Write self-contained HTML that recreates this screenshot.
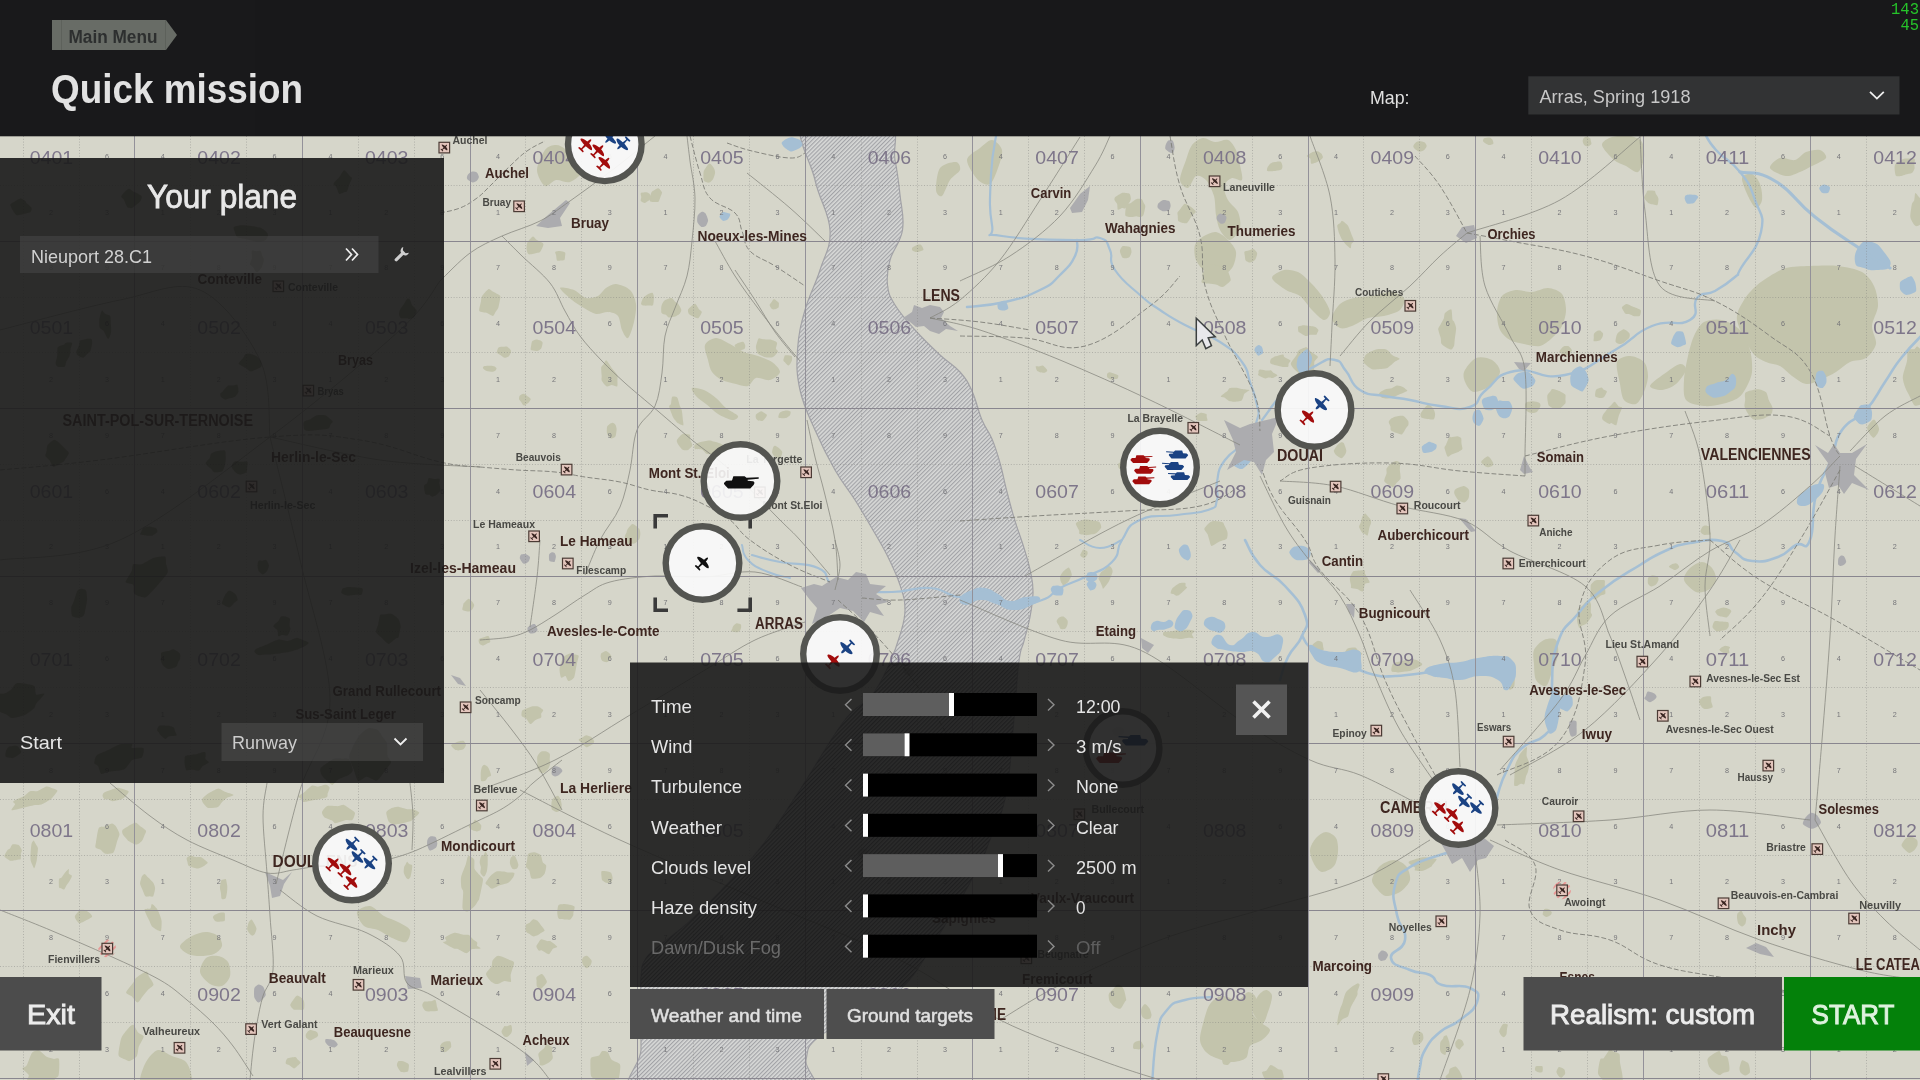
<!DOCTYPE html>
<html lang="en"><head><meta charset="utf-8"><title>Quick mission</title>
<style>html,body{margin:0;padding:0;background:#19191b;overflow:hidden}body{width:1920px;height:1080px}svg{will-change:transform;opacity:0.9999}svg text{white-space:pre}</style></head>
<body>
<svg width="1920" height="1080" viewBox="0 0 1920 1080" font-family='"Liberation Sans", sans-serif' style="display:block">
<defs>
<pattern id="hat" width="2.9" height="12" patternUnits="userSpaceOnUse" patternTransform="rotate(45)"><rect width="2.9" height="12" fill="#d8d9d8"/><rect width="1.15" height="12" fill="#a3a4a8"/></pattern>
<pattern id="hatd" width="5" height="5" patternUnits="userSpaceOnUse" patternTransform="rotate(-45)"><rect y="0" width="5" height="2.1" fill="#e88"/></pattern>
<pattern id="hat2" width="2.9" height="12" patternUnits="userSpaceOnUse" patternTransform="rotate(45)"><rect width="1.1" height="12" fill="#000"/></pattern>
<clipPath id="lp"><rect x="0" y="158" width="444" height="625"/></clipPath>
<clipPath id="wp"><rect x="630" y="662.5" width="678" height="324.5"/></clipPath>
<clipPath id="mapclip"><rect x="0" y="136" width="1920" height="944"/></clipPath>
</defs>
<rect width="1920" height="1080" fill="#d7d7cb"/>
<g clip-path="url(#mapclip)">
<defs><g id="fr">
<path d="M349.0,185.6C348.4,187.1 347.7,190.6 347.1,191.3C346.5,192.1 344.9,191.9 343.9,192.2C343.0,192.5 340.1,194.5 339.2,193.9C338.3,193.3 336.9,188.0 336.2,186.8C335.5,185.6 333.1,184.7 333.5,183.7C333.8,182.6 338.1,178.7 339.0,177.6C339.9,176.6 340.3,175.5 341.0,174.6C341.6,173.7 343.4,170.1 344.4,170.3C345.5,170.5 349.1,175.3 350.0,176.2C350.9,177.2 352.1,177.2 352.0,178.3C351.8,179.4 349.5,184.0 349.0,185.6Z"/>
<path d="M141.6,196.2C142.2,197.1 141.1,199.6 140.7,200.4C140.3,201.2 139.2,202.4 138.2,203.3C137.2,204.2 133.1,207.5 131.9,208.1C130.7,208.6 128.5,208.0 127.8,207.6C127.1,207.3 126.5,205.8 126.0,204.8C125.5,203.8 124.0,200.1 123.5,199.1C122.9,198.0 120.7,197.1 121.3,195.9C121.8,194.7 126.8,189.4 128.2,188.9C129.6,188.3 132.3,191.0 133.2,191.5C134.0,191.9 134.5,192.0 135.5,192.6C136.5,193.1 141.0,195.3 141.6,196.2Z"/>
<path d="M268.0,235.6C267.9,236.4 267.0,238.9 266.0,239.7C264.9,240.4 261.2,242.2 258.8,242.1C256.4,242.0 248.1,239.5 245.6,239.0C243.0,238.4 238.5,238.1 237.2,237.2C235.9,236.3 234.9,232.4 234.5,231.2C234.1,230.0 233.0,227.8 233.8,227.1C234.5,226.4 238.9,225.4 241.0,225.3C243.0,225.2 248.9,225.7 251.2,226.0C253.5,226.3 258.9,227.0 260.7,227.8C262.6,228.5 266.0,231.5 266.9,232.4C267.7,233.3 268.1,234.8 268.0,235.6Z"/>
<path d="M263.8,259.7C263.8,261.0 262.6,265.3 262.0,266.7C261.3,268.1 259.1,270.8 258.4,271.4C257.7,272.0 256.6,272.4 256.0,271.9C255.4,271.4 253.8,268.1 253.1,267.2C252.4,266.3 250.0,265.4 249.9,264.3C249.7,263.3 251.6,260.0 251.9,258.4C252.1,256.8 251.4,251.6 251.9,250.8C252.4,249.9 255.1,251.2 256.1,251.3C257.1,251.3 259.9,250.4 260.6,250.9C261.3,251.4 261.7,254.5 262.1,255.6C262.5,256.6 263.8,258.4 263.8,259.7Z"/>
<path d="M90.3,351.1C89.7,352.3 87.8,353.5 87.0,354.2C86.1,355.0 84.2,357.6 83.1,357.8C82.1,357.9 79.0,356.5 78.2,355.8C77.4,355.2 76.2,353.2 76.3,351.9C76.4,350.7 78.7,346.3 79.2,345.0C79.6,343.7 79.4,341.3 80.0,340.7C80.6,340.0 83.4,339.7 84.3,339.5C85.3,339.3 87.3,338.7 88.1,338.7C89.0,338.7 91.2,338.6 91.7,339.2C92.1,339.9 92.2,342.9 92.0,344.3C91.9,345.7 90.9,349.9 90.3,351.1Z"/>
<path d="M110.9,324.3C111.0,326.1 111.3,330.0 111.2,331.5C111.0,333.1 109.9,336.8 109.5,337.6C109.0,338.4 108.2,339.1 107.5,338.3C106.8,337.5 104.6,332.3 103.7,331.0C102.8,329.8 100.3,328.6 99.7,327.4C99.2,326.1 99.1,321.8 99.2,320.2C99.3,318.6 100.2,314.8 100.6,313.7C100.9,312.6 101.8,310.4 102.3,310.4C102.8,310.4 104.2,313.1 105.1,313.8C106.0,314.4 109.5,314.8 110.1,316.0C110.8,317.3 110.8,322.5 110.9,324.3Z"/>
<path d="M69.7,355.4C69.2,356.8 66.8,360.4 66.3,361.7C65.7,363.0 65.6,366.1 64.6,366.7C63.6,367.3 59.0,367.1 57.9,366.7C56.9,366.4 55.7,365.1 55.6,363.8C55.5,362.5 57.0,357.6 57.2,355.6C57.5,353.7 57.0,348.5 57.8,347.2C58.6,345.9 63.3,345.0 64.2,344.5C65.1,344.0 64.7,343.1 65.6,342.9C66.6,342.7 71.4,342.3 72.0,343.0C72.6,343.7 70.8,347.8 70.5,349.2C70.3,350.7 70.2,353.9 69.7,355.4Z"/>
<path d="M261.3,366.7C260.8,367.6 257.9,368.6 256.7,369.2C255.5,369.7 252.0,371.6 250.7,371.5C249.4,371.4 246.8,368.7 245.7,368.0C244.5,367.3 241.9,366.0 241.1,365.5C240.2,364.9 238.4,364.3 238.7,363.4C239.0,362.5 242.6,358.7 243.4,357.6C244.2,356.5 244.8,354.4 245.7,354.0C246.6,353.6 249.4,353.7 250.8,354.0C252.1,354.3 256.1,355.8 257.3,356.7C258.5,357.6 260.5,360.4 261.0,361.6C261.4,362.7 261.8,365.8 261.3,366.7Z"/>
<path d="M237.4,385.0C238.0,385.8 238.7,390.5 238.5,391.8C238.2,393.1 236.3,395.6 235.4,396.4C234.5,397.1 231.9,397.8 230.7,398.1C229.6,398.5 226.6,399.5 225.4,399.4C224.3,399.3 221.8,397.9 221.2,397.2C220.5,396.6 220.1,394.5 220.3,393.8C220.4,393.1 222.1,392.1 222.7,391.4C223.3,390.7 225.0,388.5 225.7,387.8C226.3,387.2 227.4,385.9 228.3,385.6C229.2,385.3 232.3,385.5 233.4,385.4C234.4,385.4 236.8,384.3 237.4,385.0Z"/>
<path d="M332.7,421.5C333.0,422.4 331.0,423.4 330.6,424.2C330.1,425.1 329.9,428.0 328.5,428.6C327.1,429.3 320.8,429.7 318.5,430.0C316.1,430.2 309.9,431.0 308.2,430.9C306.6,430.8 304.7,430.3 304.2,429.3C303.6,428.2 303.2,423.2 303.8,422.1C304.5,420.9 308.2,420.4 309.7,419.6C311.2,418.8 315.1,415.8 316.8,415.2C318.4,414.7 322.8,414.9 324.1,415.1C325.3,415.2 326.3,415.8 327.3,416.5C328.3,417.3 332.3,420.6 332.7,421.5Z"/>
<path d="M225.7,459.7C225.6,461.0 225.3,464.2 224.8,465.5C224.4,466.9 223.4,470.7 222.1,471.5C220.9,472.2 215.4,472.4 214.2,472.2C212.9,471.9 212.4,470.3 211.4,469.3C210.4,468.3 205.8,464.9 205.6,463.6C205.4,462.3 208.9,459.4 209.6,458.3C210.2,457.2 210.4,454.6 211.0,453.8C211.7,453.1 213.2,452.1 214.8,451.7C216.4,451.3 223.4,450.1 224.7,450.4C225.9,450.8 225.4,453.3 225.6,454.4C225.7,455.5 225.8,458.4 225.7,459.7Z"/>
<path d="M65.9,449.5C66.9,450.6 69.1,452.0 68.8,453.4C68.6,454.8 64.6,460.3 63.7,461.4C62.9,462.5 62.9,462.0 61.7,462.7C60.5,463.3 55.0,467.0 53.5,466.7C52.1,466.4 50.4,461.4 49.5,460.2C48.5,458.9 45.8,457.0 45.4,455.9C45.1,454.9 46.2,452.6 46.5,451.4C46.7,450.1 46.6,446.6 47.5,445.2C48.4,443.9 52.7,439.9 54.3,439.7C55.8,439.6 59.4,443.1 60.7,444.2C62.1,445.4 65.0,448.4 65.9,449.5Z"/>
<path d="M247.1,468.0C247.0,469.3 247.3,471.6 246.5,472.3C245.6,473.1 241.1,474.6 239.8,474.5C238.4,474.5 236.0,472.9 235.0,471.9C234.1,471.0 231.5,467.5 231.4,466.3C231.4,465.1 233.6,462.0 234.7,461.4C235.8,460.9 239.3,461.7 240.8,461.7C242.3,461.8 246.6,461.0 247.4,461.8C248.1,462.5 247.2,466.8 247.1,468.0Z"/>
<path d="M440.3,490.5C440.0,491.8 437.5,494.1 436.5,494.8C435.6,495.6 433.1,496.8 432.3,496.8C431.4,496.8 430.2,495.2 429.4,494.8C428.6,494.5 426.0,494.9 425.3,493.9C424.7,492.8 423.8,487.0 424.0,485.7C424.2,484.5 426.5,484.2 427.1,483.3C427.6,482.4 428.0,478.6 428.8,478.1C429.6,477.6 432.5,478.9 433.7,479.0C435.0,479.1 438.9,478.3 439.5,478.8C440.2,479.3 439.3,481.9 439.4,483.3C439.5,484.6 440.7,489.1 440.3,490.5Z"/>
<path d="M157.3,532.1C156.9,532.9 153.8,535.0 152.7,535.4C151.5,535.8 148.6,535.8 147.2,535.7C145.8,535.7 141.1,535.0 140.4,534.6C139.7,534.2 140.6,533.0 141.0,532.2C141.3,531.5 142.5,528.5 143.5,527.9C144.5,527.2 147.9,526.4 149.4,526.5C150.9,526.5 155.1,527.7 156.1,528.3C157.0,529.0 157.7,531.3 157.3,532.1Z"/>
<path d="M158.5,584.3C156.0,587.1 148.8,595.1 146.9,596.6C145.0,598.1 143.4,597.4 142.0,597.1C140.5,596.8 135.3,595.3 134.2,593.8C133.2,592.4 134.2,586.1 133.2,584.8C132.2,583.4 125.9,583.7 125.7,582.1C125.5,580.5 130.8,573.0 131.7,570.9C132.6,568.8 132.1,565.0 133.2,564.2C134.4,563.4 139.2,564.9 141.4,564.3C143.6,563.6 150.4,559.3 152.1,558.5C153.8,557.7 154.5,557.4 156.0,557.2C157.5,557.0 164.0,555.9 165.2,556.7C166.4,557.5 165.8,562.2 166.1,564.0C166.4,565.9 168.6,570.2 167.7,572.5C166.8,574.9 160.9,581.5 158.5,584.3Z"/>
<path d="M86.1,605.8C85.7,607.7 84.8,613.9 83.9,615.3C83.1,616.7 80.0,617.6 79.2,617.9C78.3,618.1 77.2,617.7 76.4,617.5C75.6,617.2 72.8,617.0 72.2,615.9C71.5,614.8 71.0,609.5 71.2,607.7C71.4,606.0 73.2,603.1 73.9,601.1C74.7,599.1 76.5,592.1 77.5,590.6C78.4,589.2 80.8,588.7 81.8,588.7C82.8,588.7 85.4,589.4 86.0,590.6C86.6,591.8 87.1,597.3 87.1,599.1C87.1,600.9 86.5,604.0 86.1,605.8Z"/>
<path d="M269.0,565.4C269.0,566.7 267.5,570.3 266.8,571.3C266.1,572.4 263.6,574.5 262.7,574.4C261.8,574.4 259.3,572.0 258.7,571.0C258.1,570.0 257.6,567.0 257.5,565.8C257.5,564.6 257.9,561.5 258.4,560.9C258.9,560.3 261.1,560.8 262.1,560.7C263.0,560.6 265.4,559.4 266.2,559.9C267.0,560.5 268.9,564.1 269.0,565.4Z"/>
<path d="M237.6,600.0C237.5,601.0 235.5,601.7 234.6,602.6C233.6,603.5 231.0,607.3 229.5,607.4C228.1,607.6 222.8,604.7 222.0,603.8C221.2,602.9 222.7,600.6 223.0,599.7C223.3,598.7 224.0,596.7 224.7,595.7C225.4,594.6 228.0,590.7 229.3,590.6C230.6,590.4 234.8,593.5 235.7,594.6C236.7,595.7 237.8,599.1 237.6,600.0Z"/>
<path d="M290.5,629.1C290.2,630.2 288.7,634.5 287.7,635.2C286.7,635.8 283.3,634.8 282.2,634.9C281.1,635.0 278.8,636.7 278.3,636.2C277.8,635.6 278.1,631.6 277.5,630.4C276.9,629.3 273.2,627.3 273.3,626.1C273.4,625.0 277.5,622.0 278.4,620.9C279.3,619.7 280.2,616.9 281.1,616.4C282.0,615.9 285.1,616.4 286.2,616.7C287.2,616.9 289.5,617.8 289.9,618.8C290.3,619.8 289.5,624.3 289.5,625.5C289.6,626.7 290.7,627.9 290.5,629.1Z"/>
<path d="M398.6,636.9C398.1,638.3 397.3,637.4 396.1,638.3C394.9,639.1 390.3,644.0 388.5,643.9C386.8,643.8 382.7,638.7 381.2,637.3C379.8,635.9 376.4,633.4 376.0,631.9C375.7,630.4 377.7,626.4 378.2,624.5C378.6,622.5 379.4,616.5 380.0,615.3C380.5,614.1 381.6,614.7 382.9,614.5C384.2,614.4 389.3,613.3 391.1,613.8C392.9,614.3 397.3,617.6 398.4,619.1C399.5,620.6 400.5,624.4 400.6,626.5C400.6,628.6 399.1,635.5 398.6,636.9Z"/>
<path d="M362.8,590.9C362.6,591.6 362.1,594.3 361.3,594.7C360.5,595.2 357.4,594.7 355.9,594.8C354.5,594.9 349.8,595.6 348.7,595.6C347.5,595.7 346.7,595.5 345.8,595.2C345.0,594.9 341.8,593.5 341.4,592.9C340.9,592.3 341.7,590.8 341.9,590.3C342.0,589.8 342.0,588.9 342.7,588.5C343.4,588.1 346.3,587.1 347.9,587.0C349.5,586.9 354.5,587.3 356.2,587.4C357.9,587.6 361.6,587.9 362.3,588.3C363.1,588.7 362.9,590.1 362.8,590.9Z"/>
<path d="M308.6,642.8C309.0,643.7 305.0,646.1 303.9,646.8C302.7,647.5 300.6,648.3 298.9,648.9C297.1,649.5 291.6,651.4 288.8,651.9C286.0,652.5 277.2,653.6 274.6,653.9C272.0,654.2 268.5,654.4 266.6,654.6C264.7,654.7 259.8,655.4 258.4,655.1C257.0,654.9 254.9,652.8 254.6,652.1C254.3,651.3 254.6,649.8 256.1,648.9C257.6,647.9 264.8,645.3 267.4,644.2C270.1,643.1 276.3,639.8 278.7,639.5C281.0,639.1 285.5,641.1 287.7,640.9C289.8,640.7 295.4,637.9 296.9,637.7C298.4,637.5 299.2,638.5 300.6,639.1C301.9,639.6 308.2,641.9 308.6,642.8Z"/>
<path d="M44.5,693.8C44.5,694.9 37.6,701.8 36.4,703.5C35.1,705.2 35.4,706.8 34.1,708.2C32.7,709.5 27.2,713.8 24.6,715.0C22.1,716.1 14.2,718.1 12.1,718.1C10.0,718.1 8.6,715.8 6.8,714.8C4.9,713.9 -2.4,710.8 -3.8,710.0C-5.1,709.1 -4.8,709.8 -5.0,707.9C-5.2,706.1 -6.2,695.9 -5.1,694.2C-4.1,692.6 2.0,694.2 3.9,693.7C5.8,693.2 9.5,691.0 11.0,689.8C12.6,688.5 14.5,683.6 17.2,683.1C19.8,682.6 31.7,684.5 33.9,685.8C36.1,687.2 34.9,693.5 36.1,694.4C37.3,695.4 44.4,692.8 44.5,693.8Z"/>
<path d="M175.2,731.8C175.5,732.7 177.2,734.8 176.4,735.4C175.6,735.9 169.9,735.9 168.6,736.4C167.4,736.8 166.4,739.1 165.4,739.0C164.4,738.9 161.2,735.9 160.4,735.1C159.7,734.4 159.3,733.2 158.9,732.5C158.5,731.9 157.0,730.7 157.0,729.9C157.0,729.2 158.0,726.4 159.0,725.9C159.9,725.4 164.0,725.7 165.3,725.7C166.5,725.7 168.6,725.7 169.6,725.9C170.5,726.1 173.1,726.7 173.7,727.4C174.4,728.1 174.9,730.8 175.2,731.8Z"/>
<path d="M143.4,748.3C144.6,749.4 143.2,756.1 141.9,757.5C140.6,758.9 134.3,758.8 132.3,760.1C130.3,761.4 126.9,767.7 124.8,768.9C122.7,770.2 116.5,770.7 114.5,771.0C112.4,771.4 108.6,771.6 107.1,771.9C105.5,772.3 102.1,774.6 101.1,773.9C100.0,773.3 98.8,767.3 98.0,766.1C97.2,764.8 94.5,764.5 94.3,763.3C94.2,762.1 94.9,757.0 96.6,755.4C98.3,753.9 106.0,751.1 108.7,749.8C111.3,748.5 116.5,745.1 119.2,744.4C121.9,743.8 130.5,743.6 131.9,744.0C133.4,744.5 130.4,747.4 131.8,747.9C133.1,748.4 142.2,747.2 143.4,748.3Z"/>
<path d="M205.5,758.9C206.0,760.0 209.2,761.3 208.9,762.2C208.5,763.1 203.5,765.5 202.4,766.5C201.2,767.5 200.3,770.3 199.0,770.6C197.7,771.0 192.8,769.6 191.3,769.6C189.8,769.6 187.2,771.0 186.5,770.3C185.7,769.7 184.8,765.6 184.6,764.0C184.5,762.3 184.4,757.3 185.1,756.2C185.8,755.1 189.3,755.1 190.6,754.9C191.9,754.6 194.5,754.5 196.2,754.2C197.9,753.9 204.1,751.6 205.2,752.2C206.3,752.7 205.1,757.7 205.5,758.9Z"/>
<path d="M349.0,759.3C350.2,760.7 352.8,768.4 352.8,770.2C352.7,772.0 350.3,773.9 348.7,774.9C347.1,775.9 340.7,778.0 338.8,779.1C336.9,780.3 333.8,784.9 332.2,784.9C330.6,784.9 326.4,780.4 325.1,779.1C323.8,777.9 321.8,775.4 321.2,774.2C320.7,772.9 319.7,769.8 320.5,768.4C321.2,767.1 326.2,763.6 327.9,762.5C329.5,761.3 332.8,759.1 334.6,758.6C336.4,758.2 341.3,758.6 343.0,758.7C344.7,758.7 347.9,758.0 349.0,759.3Z"/>
<path d="M391.1,762.2C391.0,763.7 387.8,767.1 386.1,769.2C384.5,771.3 379.4,779.5 377.1,780.4C374.8,781.3 368.7,776.6 366.5,776.7C364.3,776.8 359.7,781.7 358.2,780.9C356.7,780.1 354.7,772.3 353.6,769.5C352.6,766.7 349.2,759.6 349.1,756.9C349.0,754.3 351.6,749.5 352.8,747.0C354.0,744.5 357.5,737.8 359.3,735.6C361.1,733.4 366.1,728.9 368.2,728.2C370.3,727.6 375.9,729.0 377.6,730.0C379.3,731.0 381.6,735.4 382.7,737.0C383.8,738.5 386.4,741.1 386.9,743.3C387.5,745.6 387.2,753.9 387.6,756.1C388.1,758.3 391.3,760.7 391.1,762.2Z"/>
<path d="M21.2,752.0C21.2,753.1 19.1,754.4 18.1,755.1C17.2,755.8 14.4,757.9 13.0,758.1C11.6,758.3 6.7,757.6 5.9,756.8C5.0,756.0 5.6,752.4 5.9,751.2C6.2,750.1 7.6,747.7 8.5,747.1C9.4,746.4 12.6,745.9 13.7,745.8C14.8,745.7 17.1,745.6 17.9,746.4C18.8,747.1 21.2,751.0 21.2,752.0Z"/>
<path d="M31.5,207.9C32.0,208.9 31.4,211.2 30.5,211.9C29.7,212.6 25.6,213.5 24.1,213.8C22.5,214.2 18.6,215.3 17.5,215.3C16.5,215.3 15.8,214.7 15.2,213.9C14.5,213.1 12.3,209.5 11.7,208.4C11.2,207.3 10.1,205.3 10.3,204.6C10.5,203.9 12.2,202.9 13.4,202.2C14.6,201.5 19.0,198.5 20.4,198.4C21.9,198.3 25.1,200.8 25.8,201.4C26.5,201.9 25.8,202.3 26.5,203.1C27.1,203.9 31.0,206.8 31.5,207.9Z"/>
<path d="M416.6,310.7C416.9,312.1 414.9,316.0 414.1,316.9C413.2,317.9 410.2,318.8 409.4,318.9C408.6,319.1 408.1,318.3 407.1,318.2C406.1,318.1 401.9,318.6 401.0,318.2C400.0,317.7 399.1,315.2 399.0,314.2C398.9,313.1 399.8,310.3 400.3,309.1C400.9,308.0 403.0,305.3 403.8,304.2C404.5,303.0 406.3,299.5 407.0,298.9C407.8,298.3 409.3,298.7 409.9,299.4C410.5,300.1 411.2,303.7 412.0,305.0C412.8,306.3 416.4,309.3 416.6,310.7Z"/>
<path d="M179.9,659.5C179.7,660.5 178.6,661.1 178.2,661.9C177.7,662.8 177.4,666.0 176.2,666.8C175.0,667.7 169.8,669.2 168.2,669.0C166.7,668.8 163.9,666.4 163.0,665.4C162.2,664.4 161.1,661.6 160.8,660.6C160.6,659.6 161.0,657.9 161.1,657.0C161.2,656.0 160.6,653.2 161.5,652.5C162.5,651.8 168.0,651.1 169.4,650.7C170.8,650.4 172.3,649.0 173.5,649.3C174.7,649.6 179.2,652.5 180.0,653.7C180.7,654.9 180.1,658.5 179.9,659.5Z"/>
<path d="M537.0,170.0C537.0,164.6 542.1,153.8 545.0,150.0C547.9,146.2 552.9,145.0 556.0,145.0C559.1,145.0 563.6,147.0 566.0,150.0C568.4,153.0 569.6,161.7 572.0,165.0C574.4,168.3 582.3,169.4 582.0,172.0C581.7,174.6 573.9,180.8 570.0,182.0C566.1,183.2 559.8,179.4 556.0,180.0C552.2,180.6 547.9,187.5 545.0,186.0C542.1,184.5 537.0,175.4 537.0,170.0Z"/>
<path d="M660.7,196.3C660.3,197.4 659.3,201.0 658.5,201.7C657.7,202.3 654.6,202.1 653.6,202.0C652.6,201.9 650.0,201.8 649.8,200.7C649.5,199.7 650.9,193.8 651.3,192.7C651.7,191.5 652.5,191.3 653.3,190.8C654.1,190.3 657.3,188.1 658.3,188.2C659.3,188.4 661.7,191.3 662.0,192.3C662.3,193.2 661.1,195.2 660.7,196.3Z"/>
<path d="M540.4,251.4C539.7,252.5 538.5,252.5 537.2,252.8C535.8,253.2 530.0,254.8 528.8,254.3C527.5,253.8 526.7,250.1 526.5,248.7C526.4,247.3 526.7,243.8 527.4,242.4C528.2,241.0 531.9,236.7 533.0,236.4C534.1,236.2 535.5,239.2 536.8,240.0C538.0,240.9 542.9,242.5 543.4,243.9C543.8,245.2 541.2,250.4 540.4,251.4Z"/>
<path d="M715.1,172.8C715.0,174.1 713.7,178.1 713.0,179.3C712.3,180.4 710.2,182.5 709.1,182.6C708.1,182.8 704.5,182.1 703.9,180.8C703.2,179.6 703.4,173.5 703.6,172.1C703.7,170.6 704.8,169.3 705.5,168.3C706.2,167.3 708.5,163.6 709.5,163.6C710.5,163.5 713.1,166.9 713.8,168.0C714.4,169.0 715.2,171.4 715.1,172.8Z"/>
<path d="M565.0,256.5C565.0,257.3 564.9,259.4 564.4,259.9C563.9,260.4 561.7,260.5 560.8,260.5C560.0,260.6 557.5,261.2 557.0,260.5C556.4,259.9 556.3,256.1 556.1,255.1C555.8,254.0 554.8,252.4 555.2,251.9C555.7,251.4 558.6,251.0 559.8,251.0C560.9,251.1 564.5,251.9 565.1,252.5C565.7,253.2 565.1,255.6 565.0,256.5Z"/>
<path d="M940.0,168.0C943.0,163.8 953.0,161.7 956.0,162.0C959.0,162.3 960.9,167.3 960.0,170.0C959.1,172.7 952.7,176.1 950.0,180.0C947.3,183.9 944.1,194.5 942.0,196.0C939.9,197.5 936.3,194.2 936.0,190.0C935.7,185.8 937.0,172.2 940.0,168.0Z"/>
<path d="M922.4,246.8C922.8,247.5 923.9,249.5 923.4,250.1C922.9,250.7 919.4,251.8 918.4,252.0C917.5,252.2 916.0,252.1 915.3,251.9C914.6,251.7 912.6,250.8 912.2,250.3C911.9,249.8 911.8,248.2 912.4,247.6C912.9,246.9 916.0,245.2 916.9,244.9C917.9,244.5 919.8,244.4 920.4,244.6C921.1,244.8 922.1,246.2 922.4,246.8Z"/>
<path d="M651.4,197.4C651.5,198.1 650.2,199.5 649.4,200.1C648.6,200.8 645.8,202.8 644.8,202.9C643.8,202.9 641.2,201.6 640.8,200.9C640.4,200.3 641.3,198.1 641.3,197.1C641.3,196.2 640.2,193.6 640.9,193.0C641.5,192.5 645.5,192.3 646.5,192.3C647.5,192.4 648.7,193.1 649.2,193.6C649.8,194.2 651.4,196.6 651.4,197.4Z"/>
<path d="M967.0,160.0C967.3,155.2 976.2,151.0 980.0,148.0C983.8,145.0 988.7,139.7 992.0,140.0C995.3,140.3 1001.1,145.8 1002.0,150.0C1002.9,154.2 999.8,162.9 998.0,168.0C996.2,173.1 993.0,182.2 990.0,184.0C987.0,185.8 981.5,183.6 978.0,180.0C974.5,176.4 966.7,164.8 967.0,160.0Z"/>
<path d="M1180.0,180.0C1179.7,175.8 1184.2,165.2 1186.0,160.0C1187.8,154.8 1189.5,148.3 1192.0,145.0C1194.5,141.7 1199.5,138.4 1203.0,138.0C1206.5,137.6 1211.2,141.7 1215.0,142.0C1218.8,142.3 1224.8,138.8 1228.0,140.0C1231.2,141.2 1234.2,146.2 1236.0,150.0C1237.8,153.8 1239.1,160.5 1240.0,165.0C1240.9,169.5 1243.2,178.1 1242.0,180.0C1240.8,181.9 1234.7,177.1 1232.0,178.0C1229.3,178.9 1224.6,182.7 1224.0,186.0C1223.4,189.3 1225.9,196.1 1228.0,200.0C1230.1,203.9 1236.2,207.8 1238.0,212.0C1239.8,216.2 1241.2,223.8 1240.0,228.0C1238.8,232.2 1233.0,239.7 1230.0,240.0C1227.0,240.3 1222.1,233.8 1220.0,230.0C1217.9,226.2 1216.9,220.1 1216.0,215.0C1215.1,209.9 1215.5,201.2 1214.0,196.0C1212.5,190.8 1208.7,183.0 1206.0,180.0C1203.3,177.0 1198.7,174.8 1196.0,176.0C1193.3,177.2 1190.4,187.4 1188.0,188.0C1185.6,188.6 1180.3,184.2 1180.0,180.0Z"/>
<path d="M1195.0,245.0C1196.2,241.4 1200.8,237.9 1204.0,236.0C1207.2,234.1 1212.4,231.4 1216.0,232.0C1219.6,232.6 1225.0,237.0 1228.0,240.0C1231.0,243.0 1235.4,247.8 1236.0,252.0C1236.6,256.2 1234.4,264.4 1232.0,268.0C1229.6,271.6 1223.9,275.4 1220.0,276.0C1216.1,276.6 1209.6,274.4 1206.0,272.0C1202.4,269.6 1197.7,264.1 1196.0,260.0C1194.3,255.9 1193.8,248.6 1195.0,245.0Z"/>
<path d="M1192.4,208.0C1193.1,208.6 1195.9,210.7 1195.8,211.7C1195.7,212.6 1192.8,214.8 1191.8,216.1C1190.7,217.4 1188.2,222.2 1187.0,223.0C1185.9,223.8 1183.1,223.0 1182.1,222.8C1181.0,222.6 1178.9,222.0 1178.3,221.1C1177.8,220.3 1177.8,216.2 1177.7,215.2C1177.6,214.2 1177.2,213.3 1177.5,212.5C1177.9,211.8 1179.7,209.9 1180.5,208.8C1181.4,207.8 1183.6,204.1 1184.6,203.8C1185.7,203.5 1188.7,205.6 1189.6,206.1C1190.5,206.6 1191.7,207.3 1192.4,208.0Z"/>
<path d="M1129.5,202.3C1128.8,203.5 1126.2,207.7 1125.4,208.3C1124.5,209.0 1123.1,207.8 1122.2,207.9C1121.3,208.1 1118.5,210.2 1117.9,209.7C1117.3,209.3 1117.5,205.1 1117.1,204.0C1116.7,202.9 1114.8,201.1 1114.6,200.3C1114.3,199.5 1114.4,197.9 1115.2,197.1C1116.0,196.3 1120.4,193.8 1121.3,193.3C1122.3,192.8 1122.4,192.7 1123.4,192.7C1124.4,192.8 1128.7,193.0 1129.6,193.7C1130.4,194.4 1130.9,197.7 1130.9,198.7C1130.9,199.7 1130.1,201.2 1129.5,202.3Z"/>
<path d="M1143.5,215.1C1142.9,216.3 1141.5,217.0 1140.6,217.1C1139.7,217.3 1137.2,216.2 1136.1,216.2C1135.0,216.2 1132.5,217.2 1131.3,217.1C1130.0,217.0 1125.9,216.9 1125.4,215.5C1124.8,214.1 1125.9,206.4 1126.4,205.0C1127.0,203.6 1129.2,204.0 1130.4,203.3C1131.5,202.6 1134.9,199.6 1136.2,199.2C1137.6,198.7 1141.0,198.8 1141.9,199.2C1142.7,199.7 1143.2,201.9 1143.6,202.7C1144.0,203.6 1145.3,204.9 1145.3,206.3C1145.2,207.8 1144.0,213.8 1143.5,215.1Z"/>
<path d="M1282.4,165.7C1282.5,166.6 1282.3,168.9 1281.4,169.5C1280.4,170.1 1276.1,170.8 1274.4,171.0C1272.8,171.2 1268.1,171.4 1267.3,171.0C1266.5,170.7 1267.1,168.7 1267.3,167.9C1267.6,167.2 1268.9,165.3 1269.5,164.6C1270.1,164.0 1271.1,162.8 1272.4,162.4C1273.7,162.1 1279.3,161.2 1280.4,161.5C1281.6,161.9 1282.3,164.8 1282.4,165.7Z"/>
<path d="M1321.3,153.6C1321.9,154.4 1323.1,156.6 1322.9,157.5C1322.6,158.4 1320.6,160.4 1319.3,161.1C1317.9,161.9 1312.5,164.1 1311.4,163.8C1310.4,163.5 1310.9,159.6 1310.4,158.7C1309.8,157.8 1306.5,156.8 1306.8,156.1C1307.1,155.3 1311.5,152.7 1312.7,152.1C1314.0,151.6 1316.5,151.0 1317.5,151.2C1318.5,151.4 1320.7,152.9 1321.3,153.6Z"/>
<path d="M1351.7,234.9C1352.4,236.8 1354.1,239.9 1354.0,240.9C1354.0,241.9 1351.9,242.9 1351.5,243.7C1351.1,244.6 1351.2,248.1 1350.6,248.2C1350.1,248.4 1347.6,246.2 1346.6,245.2C1345.6,244.2 1343.2,241.4 1342.3,240.0C1341.4,238.6 1339.7,234.9 1339.1,233.2C1338.5,231.5 1337.1,226.7 1337.2,225.5C1337.4,224.4 1339.7,223.5 1340.3,223.0C1340.9,222.4 1341.5,220.6 1342.3,220.9C1343.2,221.2 1346.6,223.7 1347.7,225.3C1348.8,227.0 1351.0,233.1 1351.7,234.9Z"/>
<path d="M1426.7,145.9C1426.6,146.9 1424.8,149.5 1423.9,150.2C1423.0,150.9 1420.0,151.8 1418.9,151.6C1417.8,151.5 1415.4,149.4 1414.7,148.8C1414.1,148.1 1413.1,146.7 1413.3,145.9C1413.5,145.2 1415.5,142.5 1416.3,142.0C1417.0,141.4 1418.4,141.2 1419.4,141.2C1420.4,141.2 1423.7,141.7 1424.5,142.3C1425.4,142.9 1426.7,145.0 1426.7,145.9Z"/>
<path d="M1131.5,252.0C1131.5,253.1 1130.1,256.4 1129.5,257.1C1128.9,257.8 1127.4,258.1 1126.6,258.2C1125.8,258.2 1123.1,258.2 1122.3,257.4C1121.6,256.6 1119.9,252.3 1119.9,251.0C1119.9,249.7 1121.7,246.8 1122.4,246.3C1123.0,245.7 1124.6,246.1 1125.5,246.2C1126.4,246.3 1129.6,246.6 1130.3,247.2C1131.0,247.9 1131.6,250.8 1131.5,252.0Z"/>
<path d="M1255.3,259.4C1254.5,260.5 1251.3,262.5 1250.1,262.6C1249.0,262.7 1246.3,261.3 1245.7,260.5C1245.1,259.8 1245.0,257.3 1244.9,256.3C1244.8,255.2 1244.0,252.4 1244.5,251.8C1244.9,251.1 1247.5,250.8 1248.6,250.5C1249.6,250.1 1252.3,248.7 1253.3,249.0C1254.3,249.3 1256.9,251.9 1257.1,253.1C1257.3,254.3 1256.1,258.3 1255.3,259.4Z"/>
<path d="M1602.0,145.0C1601.7,141.6 1607.8,138.3 1612.0,137.0C1616.2,135.7 1625.5,135.2 1630.0,136.0C1634.5,136.8 1639.9,138.7 1642.0,142.0C1644.1,145.3 1644.6,153.5 1644.0,158.0C1643.4,162.5 1640.7,170.8 1638.0,172.0C1635.3,173.2 1629.6,167.8 1626.0,166.0C1622.4,164.2 1617.6,163.2 1614.0,160.0C1610.4,156.8 1602.3,148.4 1602.0,145.0Z"/>
<path d="M1770.0,168.0C1769.1,165.3 1776.2,159.2 1780.0,158.0C1783.8,156.8 1791.1,160.9 1795.0,160.0C1798.9,159.1 1802.2,153.5 1806.0,152.0C1809.8,150.5 1817.0,149.1 1820.0,150.0C1823.0,150.9 1827.2,155.6 1826.0,158.0C1824.8,160.4 1815.9,163.9 1812.0,166.0C1808.1,168.1 1803.9,170.5 1800.0,172.0C1796.1,173.5 1790.5,176.6 1786.0,176.0C1781.5,175.4 1770.9,170.7 1770.0,168.0Z"/>
<path d="M1742.0,178.0C1742.6,174.7 1749.3,173.1 1752.0,174.0C1754.7,174.9 1758.5,180.1 1760.0,184.0C1761.5,187.9 1762.6,196.4 1762.0,200.0C1761.4,203.6 1758.1,208.6 1756.0,208.0C1753.9,207.4 1750.1,200.5 1748.0,196.0C1745.9,191.5 1741.4,181.3 1742.0,178.0Z"/>
<path d="M1655.7,193.6C1656.1,194.5 1658.2,197.0 1658.4,198.4C1658.6,199.7 1658.1,204.3 1657.4,205.0C1656.7,205.7 1653.5,204.5 1652.5,204.3C1651.5,204.1 1649.5,203.7 1648.7,203.2C1647.9,202.8 1646.2,200.9 1645.7,200.2C1645.1,199.5 1643.9,198.1 1644.0,197.2C1644.1,196.4 1646.0,193.6 1646.4,192.8C1646.8,192.0 1646.9,191.0 1647.3,190.7C1647.7,190.4 1648.9,190.4 1649.7,190.4C1650.6,190.4 1654.0,190.4 1654.7,190.8C1655.4,191.2 1655.2,192.7 1655.7,193.6Z"/>
<path d="M1914.4,165.1C1914.4,166.3 1914.8,167.8 1914.5,168.7C1914.2,169.6 1913.0,172.4 1911.9,173.1C1910.9,173.8 1906.8,174.2 1905.5,174.5C1904.3,174.9 1902.4,175.9 1901.3,176.0C1900.1,176.2 1896.7,176.7 1896.0,175.8C1895.2,174.9 1894.6,169.8 1894.6,168.4C1894.5,167.0 1894.7,164.7 1895.6,163.7C1896.6,162.6 1901.2,159.8 1902.7,159.2C1904.1,158.6 1906.6,158.6 1908.0,158.6C1909.4,158.5 1913.8,158.2 1914.6,159.0C1915.3,159.8 1914.4,164.0 1914.4,165.1Z"/>
<path d="M1926.5,211.8C1926.4,213.8 1925.1,215.6 1924.4,217.1C1923.7,218.6 1921.3,223.4 1920.4,224.5C1919.4,225.6 1917.2,226.3 1916.4,226.2C1915.5,226.1 1914.0,224.5 1913.3,223.4C1912.6,222.4 1910.5,219.3 1910.3,217.1C1910.1,214.9 1911.4,206.4 1911.8,204.4C1912.3,202.5 1913.8,201.6 1914.2,200.3C1914.6,198.9 1914.8,193.2 1915.4,192.9C1916.1,192.6 1918.7,197.0 1919.8,197.8C1920.9,198.7 1924.4,198.5 1925.2,200.1C1926.0,201.7 1926.6,209.9 1926.5,211.8Z"/>
<path d="M1492.8,140.5C1493.0,141.1 1493.7,143.1 1493.3,143.7C1492.9,144.2 1490.5,145.0 1489.7,145.0C1488.9,145.1 1487.3,144.4 1486.5,143.9C1485.8,143.5 1483.3,142.0 1483.1,141.3C1482.8,140.7 1483.3,138.7 1484.1,138.3C1484.9,137.9 1488.8,137.5 1489.7,137.6C1490.6,137.7 1491.5,138.8 1491.9,139.1C1492.3,139.4 1492.6,140.0 1492.8,140.5Z"/>
<path d="M1590.8,140.8C1590.9,141.5 1591.7,143.3 1591.4,143.9C1591.0,144.6 1588.6,146.4 1587.8,146.5C1587.0,146.6 1584.8,145.7 1584.2,145.1C1583.6,144.5 1582.7,142.1 1582.7,141.3C1582.6,140.4 1583.2,138.8 1583.6,138.2C1584.1,137.6 1585.5,136.4 1586.3,136.4C1587.0,136.3 1589.5,137.6 1590.0,138.1C1590.6,138.6 1590.6,140.1 1590.8,140.8Z"/>
<path d="M498.3,307.7C497.8,309.2 496.4,310.7 495.8,311.6C495.2,312.6 494.0,315.8 493.0,316.0C491.9,316.2 488.7,313.7 487.1,313.1C485.6,312.5 480.1,312.5 479.4,311.1C478.6,309.8 480.6,303.5 480.9,301.7C481.2,300.0 481.1,297.7 482.0,296.2C482.8,294.8 487.1,289.8 488.3,289.2C489.6,288.7 491.3,290.8 492.7,291.5C494.0,292.3 498.9,294.6 499.8,295.4C500.7,296.2 500.4,297.0 500.2,298.5C500.0,299.9 498.8,306.2 498.3,307.7Z"/>
<path d="M560.0,288.0C560.3,286.5 570.1,288.5 574.0,290.0C577.9,291.5 582.4,297.1 586.0,298.0C589.6,298.9 595.0,297.5 598.0,296.0C601.0,294.5 603.3,289.8 606.0,288.0C608.7,286.2 612.4,283.7 616.0,284.0C619.6,284.3 627.0,287.0 630.0,290.0C633.0,293.0 635.4,299.2 636.0,304.0C636.6,308.8 635.2,316.9 634.0,322.0C632.8,327.1 629.8,336.8 628.0,338.0C626.2,339.2 623.5,333.3 622.0,330.0C620.5,326.7 620.1,318.7 618.0,316.0C615.9,313.3 611.3,312.3 608.0,312.0C604.7,311.7 599.6,314.6 596.0,314.0C592.4,313.4 587.6,310.1 584.0,308.0C580.4,305.9 575.6,303.0 572.0,300.0C568.4,297.0 559.7,289.5 560.0,288.0Z"/>
<path d="M653.1,305.1C652.5,306.0 650.5,305.5 649.4,305.6C648.3,305.7 644.6,305.8 643.7,305.6C642.7,305.5 641.1,304.9 641.1,304.0C641.0,303.0 642.5,298.9 643.3,297.8C644.1,296.6 647.1,294.7 648.1,294.1C649.2,293.5 651.7,292.4 652.4,292.8C653.1,293.1 653.9,295.7 653.9,297.1C654.0,298.6 653.6,304.1 653.1,305.1Z"/>
<path d="M678.3,304.0C679.0,305.0 681.2,308.7 681.3,309.9C681.4,311.1 680.0,313.4 679.3,314.1C678.6,314.9 676.5,316.1 675.3,316.5C674.1,316.9 669.9,317.6 668.8,317.4C667.7,317.2 666.8,315.4 666.0,314.8C665.1,314.3 662.2,313.9 661.6,312.9C661.1,311.9 661.1,307.6 661.4,306.2C661.7,304.7 663.1,301.7 664.3,300.8C665.5,299.8 670.2,298.0 671.5,298.1C672.7,298.1 674.1,300.7 674.9,301.4C675.7,302.1 677.5,303.0 678.3,304.0Z"/>
<path d="M699.3,309.6C700.0,310.6 702.0,311.2 701.8,312.2C701.7,313.2 699.1,317.8 698.1,318.3C697.0,318.7 693.6,316.8 692.6,316.3C691.5,315.8 689.4,314.8 688.9,314.0C688.4,313.2 687.7,310.6 688.0,309.7C688.2,308.9 690.2,307.1 691.0,306.5C691.9,305.8 694.5,303.5 695.4,303.9C696.4,304.2 698.5,308.7 699.3,309.6Z"/>
<path d="M705.0,345.0C706.2,341.7 712.2,338.1 716.0,338.0C719.8,337.9 725.8,341.9 730.0,344.0C734.2,346.1 739.8,350.2 744.0,352.0C748.2,353.8 753.8,354.5 758.0,356.0C762.2,357.5 768.7,359.6 772.0,362.0C775.3,364.4 780.3,369.3 780.0,372.0C779.7,374.7 773.6,379.1 770.0,380.0C766.4,380.9 759.3,377.1 756.0,378.0C752.7,378.9 751.0,385.1 748.0,386.0C745.0,386.9 739.9,384.9 736.0,384.0C732.1,383.1 725.6,381.8 722.0,380.0C718.4,378.2 714.1,375.0 712.0,372.0C709.9,369.0 709.0,364.1 708.0,360.0C707.0,355.9 703.8,348.3 705.0,345.0Z"/>
<path d="M775.9,348.5C776.0,349.5 778.2,350.5 777.9,351.5C777.6,352.5 774.6,356.3 773.1,356.9C771.7,357.6 766.9,357.6 765.2,357.2C763.4,356.8 759.0,354.7 758.0,353.8C757.0,353.0 756.6,350.6 756.4,349.7C756.1,348.8 755.8,347.5 756.0,346.2C756.3,344.9 757.8,339.3 758.6,338.5C759.4,337.7 761.4,339.2 762.9,339.3C764.4,339.5 769.6,339.4 771.2,339.8C772.9,340.1 776.4,341.7 777.0,342.7C777.5,343.7 775.8,347.4 775.9,348.5Z"/>
<path d="M792.0,360.1C791.9,360.9 791.1,362.5 790.7,363.1C790.3,363.8 789.0,365.7 788.4,365.6C787.8,365.6 786.1,363.4 785.5,362.9C785.0,362.3 783.5,361.5 783.4,360.6C783.3,359.8 784.4,356.1 784.8,355.5C785.3,354.9 786.4,355.2 787.2,355.3C788.0,355.4 791.2,355.6 791.8,356.2C792.3,356.7 792.2,359.3 792.0,360.1Z"/>
<path d="M692.0,388.0C693.2,387.1 700.4,388.5 704.0,390.0C707.6,391.5 712.7,395.3 716.0,398.0C719.3,400.7 722.7,405.3 726.0,408.0C729.3,410.7 737.1,414.2 738.0,416.0C738.9,417.8 735.0,420.3 732.0,420.0C729.0,419.7 721.9,416.4 718.0,414.0C714.1,411.6 709.3,406.7 706.0,404.0C702.7,401.3 698.1,398.4 696.0,396.0C693.9,393.6 690.8,388.9 692.0,388.0Z"/>
<path d="M681.8,410.6C682.2,412.4 682.8,419.0 683.0,420.8C683.2,422.5 683.8,425.2 683.2,425.4C682.6,425.7 678.5,423.5 677.7,423.0C676.8,422.5 676.6,421.8 676.0,421.2C675.5,420.5 674.0,419.3 673.2,417.6C672.4,415.9 669.5,408.3 669.2,406.7C668.9,405.1 670.6,405.1 671.0,404.0C671.3,402.8 671.5,397.6 672.2,396.8C673.0,396.1 676.3,396.4 677.2,397.4C678.1,398.5 679.3,404.3 679.9,405.8C680.4,407.4 681.5,408.9 681.8,410.6Z"/>
<path d="M617.3,374.9C617.9,376.2 617.4,378.7 617.4,380.0C617.4,381.3 617.8,385.8 617.2,386.4C616.5,387.0 613.1,385.0 611.8,385.0C610.6,385.0 607.8,386.9 606.7,386.4C605.5,385.9 602.4,382.0 601.8,380.7C601.2,379.5 601.8,377.4 601.7,375.8C601.6,374.2 601.0,368.6 601.2,367.3C601.4,366.0 602.9,365.3 603.5,364.5C604.1,363.7 605.4,359.9 606.5,360.4C607.5,360.9 611.0,367.0 612.3,368.7C613.6,370.4 616.7,373.6 617.3,374.9Z"/>
<path d="M692.4,445.3C692.1,446.5 689.1,449.5 688.0,450.0C686.9,450.6 683.7,450.3 682.7,449.8C681.7,449.3 680.0,447.1 679.3,446.0C678.6,444.9 676.4,441.8 676.8,440.4C677.2,439.0 681.0,434.6 682.6,433.9C684.1,433.3 689.1,434.2 689.9,434.8C690.8,435.5 689.8,438.3 690.1,439.5C690.3,440.7 692.6,444.0 692.4,445.3Z"/>
<path d="M725.1,446.5C725.3,447.2 722.3,448.6 721.5,449.4C720.7,450.2 720.1,452.5 718.4,453.1C716.7,453.6 709.2,454.5 707.3,454.1C705.4,453.7 703.8,450.3 702.4,449.7C700.9,449.2 695.9,449.7 695.0,449.1C694.1,448.6 694.0,445.9 694.6,445.1C695.1,444.3 698.2,442.7 699.9,442.2C701.6,441.7 707.4,440.7 709.0,440.6C710.6,440.5 712.1,441.2 713.4,441.5C714.7,441.8 718.9,442.8 720.3,443.4C721.6,444.0 725.0,445.8 725.1,446.5Z"/>
<path d="M616.6,428.9C616.6,430.3 616.0,435.5 615.4,436.6C614.7,437.7 612.0,438.7 611.1,438.4C610.1,438.2 608.0,435.3 607.5,434.4C607.0,433.6 606.8,432.2 606.8,431.2C606.8,430.2 606.8,427.1 607.4,426.1C608.0,425.1 611.2,422.8 612.1,422.7C613.0,422.5 614.8,423.7 615.3,424.4C615.8,425.1 616.5,427.5 616.6,428.9Z"/>
<path d="M530.7,399.1C530.8,399.8 529.6,401.7 528.8,402.4C528.0,403.2 524.7,405.4 523.8,405.4C522.9,405.3 521.6,402.6 521.1,401.9C520.5,401.2 519.3,400.1 519.1,399.3C519.0,398.6 519.1,396.4 519.7,395.7C520.2,395.0 522.7,393.5 523.7,393.7C524.7,393.8 527.5,396.2 528.3,396.8C529.2,397.4 530.7,398.5 530.7,399.1Z"/>
<path d="M640.3,533.5C640.3,534.5 640.1,537.5 639.5,538.7C638.9,539.8 636.0,542.7 635.1,543.3C634.1,543.9 632.2,543.6 631.1,543.6C630.0,543.5 626.4,543.9 625.7,543.1C624.9,542.2 624.8,537.3 624.9,536.1C625.0,534.9 626.1,533.7 626.4,532.8C626.8,532.0 627.1,529.8 627.8,528.8C628.5,527.8 631.2,524.2 632.3,523.9C633.4,523.7 636.1,525.9 636.9,526.6C637.8,527.3 639.2,528.8 639.6,529.6C640.0,530.4 640.3,532.4 640.3,533.5Z"/>
<path d="M782.3,452.1C782.4,453.2 781.1,457.3 780.4,458.0C779.7,458.6 776.9,458.1 776.1,457.8C775.4,457.6 774.5,456.5 774.0,455.9C773.5,455.2 772.2,453.5 772.1,452.5C772.0,451.5 773.0,447.8 773.3,447.1C773.7,446.3 774.6,445.6 775.4,445.8C776.1,446.0 778.6,447.8 779.4,448.5C780.2,449.3 782.2,451.0 782.3,452.1Z"/>
<path d="M766.8,414.7C767.1,415.1 766.8,415.8 766.4,416.5C765.9,417.2 763.8,420.2 762.9,420.7C761.9,421.1 758.9,420.8 758.1,420.5C757.3,420.2 756.2,418.7 755.9,418.0C755.7,417.3 755.4,415.3 756.0,414.5C756.5,413.7 760.0,411.4 761.0,411.2C761.9,411.0 763.4,412.4 764.1,412.8C764.8,413.2 766.5,414.2 766.8,414.7Z"/>
<path d="M790.5,411.5C790.9,412.1 790.5,414.4 790.0,415.2C789.4,415.9 787.0,417.7 785.8,418.1C784.6,418.4 780.8,418.1 779.9,417.9C779.0,417.8 778.3,417.5 778.3,416.9C778.3,416.3 779.0,413.6 779.6,412.9C780.2,412.2 782.5,411.3 783.3,411.1C784.1,410.8 785.7,410.3 786.6,410.4C787.4,410.4 790.1,411.0 790.5,411.5Z"/>
<path d="M541.2,348.4C540.5,349.4 538.4,350.7 537.2,350.9C536.0,351.1 531.6,350.7 530.9,350.1C530.2,349.5 531.0,346.7 531.1,345.7C531.3,344.7 531.7,342.0 532.2,341.3C532.8,340.6 535.0,339.6 536.0,339.5C536.9,339.4 539.8,340.2 540.5,340.6C541.3,341.0 542.6,341.9 542.6,342.8C542.7,343.7 541.8,347.5 541.2,348.4Z"/>
<path d="M508.9,356.2C508.2,357.0 505.6,357.9 504.6,357.8C503.7,357.7 501.7,355.8 500.8,355.2C499.9,354.5 497.2,353.3 496.9,352.4C496.7,351.5 497.8,348.0 498.6,347.4C499.5,346.7 503.3,346.7 504.3,346.7C505.3,346.6 506.5,346.2 507.3,346.7C508.0,347.2 510.9,349.8 511.0,350.9C511.2,352.0 509.7,355.3 508.9,356.2Z"/>
<path d="M496.6,368.4C496.6,369.0 495.3,370.7 494.8,371.1C494.3,371.5 493.2,371.8 492.3,371.8C491.3,371.8 487.7,371.5 486.7,371.0C485.6,370.6 483.1,368.5 482.9,367.9C482.7,367.4 483.7,366.2 484.6,366.0C485.5,365.7 489.3,365.7 490.5,365.7C491.7,365.8 493.9,366.1 494.6,366.4C495.3,366.7 496.5,367.9 496.6,368.4Z"/>
<path d="M745.2,345.2C745.4,346.0 745.2,348.2 744.6,348.7C744.0,349.3 741.0,350.0 740.2,350.1C739.3,350.1 737.9,349.7 737.2,349.2C736.6,348.6 734.5,346.1 734.6,345.4C734.6,344.7 736.8,343.7 737.4,343.3C738.1,343.0 739.2,342.6 739.9,342.5C740.6,342.3 742.8,341.6 743.4,341.9C744.0,342.2 745.1,344.4 745.2,345.2Z"/>
<path d="M778.9,304.6C778.8,305.2 779.0,306.9 778.5,307.4C777.9,308.0 775.2,309.2 774.4,309.3C773.6,309.5 772.2,309.3 771.6,308.8C771.1,308.3 769.6,305.7 769.6,305.0C769.6,304.2 771.1,302.7 771.6,302.0C772.2,301.3 773.2,298.9 774.0,298.9C774.8,299.0 778.1,301.9 778.6,302.6C779.2,303.2 778.9,304.0 778.9,304.6Z"/>
<path d="M1230.2,277.4C1230.5,278.6 1231.2,279.8 1230.3,280.9C1229.4,282.1 1224.3,286.6 1222.6,287.0C1220.9,287.4 1218.1,284.9 1215.7,284.4C1213.3,283.9 1203.5,283.7 1202.0,282.8C1200.5,282.0 1202.8,278.2 1202.9,277.1C1202.9,276.0 1202.0,274.5 1202.5,273.4C1203.0,272.2 1206.6,268.5 1207.5,267.4C1208.5,266.3 1208.8,264.2 1210.7,264.2C1212.7,264.2 1222.3,266.5 1224.3,267.3C1226.3,268.1 1227.1,269.9 1227.8,271.1C1228.5,272.3 1229.9,276.3 1230.2,277.4Z"/>
<path d="M1272.0,278.0C1271.7,275.0 1280.1,270.9 1284.0,270.0C1287.9,269.1 1294.1,270.2 1298.0,272.0C1301.9,273.8 1306.4,278.4 1310.0,282.0C1313.6,285.6 1319.0,291.5 1322.0,296.0C1325.0,300.5 1329.7,308.4 1330.0,312.0C1330.3,315.6 1326.7,320.3 1324.0,320.0C1321.3,319.7 1315.6,313.6 1312.0,310.0C1308.4,306.4 1303.9,299.0 1300.0,296.0C1296.1,293.0 1290.2,292.7 1286.0,290.0C1281.8,287.3 1272.3,281.0 1272.0,278.0Z"/>
<path d="M1332.0,318.0C1332.0,314.4 1336.7,307.0 1340.0,304.0C1343.3,301.0 1349.2,299.2 1354.0,298.0C1358.8,296.8 1366.6,296.9 1372.0,296.0C1377.4,295.1 1385.2,291.7 1390.0,292.0C1394.8,292.3 1402.5,295.3 1404.0,298.0C1405.5,300.7 1403.0,307.3 1400.0,310.0C1397.0,312.7 1388.8,314.8 1384.0,316.0C1379.2,317.2 1372.8,316.5 1368.0,318.0C1363.2,319.5 1356.2,324.5 1352.0,326.0C1347.8,327.5 1343.0,329.2 1340.0,328.0C1337.0,326.8 1332.0,321.6 1332.0,318.0Z"/>
<path d="M1399.7,358.8C1400.0,359.5 1396.3,360.7 1394.8,361.8C1393.4,362.9 1389.1,367.0 1387.3,367.9C1385.5,368.7 1381.4,368.8 1379.6,369.0C1377.8,369.2 1373.8,370.0 1372.0,369.2C1370.1,368.5 1364.5,364.0 1363.6,362.5C1362.8,361.0 1364.3,357.6 1364.8,356.5C1365.3,355.4 1366.3,354.1 1367.6,353.3C1368.9,352.5 1373.8,349.9 1376.0,349.5C1378.1,349.0 1384.3,348.9 1386.3,349.5C1388.2,350.2 1391.0,354.2 1392.5,355.3C1394.1,356.4 1399.4,358.0 1399.7,358.8Z"/>
<path d="M1317.3,332.7C1317.0,333.3 1317.0,334.5 1316.1,334.7C1315.2,335.0 1310.6,334.7 1309.4,334.9C1308.2,335.0 1307.1,336.3 1306.0,336.1C1304.8,335.8 1300.4,333.1 1299.6,332.5C1298.7,332.0 1298.5,331.9 1298.3,331.2C1298.2,330.5 1297.7,327.4 1298.1,326.7C1298.6,326.0 1301.2,325.5 1302.1,325.4C1303.0,325.3 1304.3,325.4 1305.8,325.6C1307.2,325.8 1313.2,326.3 1314.6,326.8C1316.1,327.3 1318.1,329.3 1318.4,330.0C1318.7,330.7 1317.6,332.2 1317.3,332.7Z"/>
<path d="M1288.6,363.7C1288.3,364.4 1288.8,366.4 1288.1,366.7C1287.4,367.1 1283.8,367.0 1282.7,366.9C1281.7,366.8 1280.2,366.4 1278.7,366.0C1277.3,365.6 1271.6,364.3 1270.6,363.5C1269.7,362.8 1270.3,360.1 1270.6,359.4C1270.9,358.7 1272.7,357.9 1273.2,357.5C1273.8,357.2 1274.4,356.6 1275.5,356.3C1276.6,355.9 1282.0,354.3 1283.1,354.4C1284.1,354.5 1283.5,356.3 1284.3,357.0C1285.2,357.8 1290.0,359.8 1290.5,360.5C1291.0,361.3 1288.8,363.0 1288.6,363.7Z"/>
<path d="M1249.6,390.1C1249.9,390.6 1245.3,392.6 1244.4,393.8C1243.5,395.0 1243.0,399.5 1241.7,400.4C1240.5,401.3 1235.3,401.6 1233.8,401.7C1232.3,401.8 1230.1,401.6 1229.0,401.1C1227.9,400.7 1225.4,398.2 1224.4,397.6C1223.4,397.0 1220.4,397.0 1220.8,396.2C1221.1,395.4 1226.4,391.8 1227.5,390.9C1228.5,389.9 1228.7,388.4 1229.9,388.1C1231.1,387.7 1236.3,387.8 1237.7,387.9C1239.0,388.0 1240.2,388.7 1241.6,388.9C1242.9,389.2 1249.2,389.5 1249.6,390.1Z"/>
<path d="M1277.4,375.2C1277.3,375.8 1274.1,377.6 1273.0,377.9C1272.0,378.1 1269.2,377.4 1268.3,377.5C1267.4,377.6 1266.4,378.7 1265.2,378.4C1264.1,378.1 1259.1,375.9 1258.3,375.2C1257.6,374.6 1258.6,373.4 1258.6,373.0C1258.7,372.5 1258.3,371.8 1258.4,371.4C1258.6,371.0 1258.9,369.6 1259.9,369.5C1260.9,369.4 1265.8,370.5 1267.1,370.6C1268.4,370.7 1270.3,370.1 1271.1,370.4C1271.8,370.6 1272.6,372.1 1273.4,372.7C1274.1,373.2 1277.4,374.6 1277.4,375.2Z"/>
<path d="M1314.4,361.7C1313.9,363.5 1314.7,370.9 1313.7,372.2C1312.7,373.5 1307.4,372.3 1306.0,372.6C1304.6,372.9 1302.9,375.0 1301.6,374.7C1300.3,374.4 1296.4,371.4 1295.1,370.1C1293.9,368.8 1290.6,365.3 1290.8,363.5C1291.0,361.8 1295.7,356.4 1296.6,354.9C1297.5,353.4 1297.5,351.3 1298.6,350.4C1299.8,349.5 1304.9,347.1 1306.3,347.2C1307.7,347.3 1309.2,350.3 1310.6,351.4C1311.9,352.5 1317.4,355.5 1317.9,356.7C1318.3,357.9 1314.9,359.9 1314.4,361.7Z"/>
<path d="M1406.3,389.6C1406.8,390.1 1408.0,390.6 1406.8,391.3C1405.7,392.0 1398.3,394.9 1396.5,395.7C1394.6,396.5 1392.4,397.8 1391.3,398.1C1390.1,398.5 1387.7,398.5 1386.6,398.4C1385.5,398.4 1382.8,398.3 1381.9,397.7C1381.1,397.1 1378.8,394.4 1379.1,393.4C1379.5,392.4 1383.4,390.0 1384.9,389.5C1386.4,388.9 1390.4,388.8 1391.8,388.3C1393.2,387.9 1395.5,385.7 1396.8,385.6C1398.1,385.4 1401.7,386.4 1402.8,386.9C1403.9,387.4 1405.8,389.1 1406.3,389.6Z"/>
<path d="M1408.4,424.9C1408.2,425.7 1407.0,426.6 1406.3,427.7C1405.6,428.7 1403.1,433.6 1402.1,434.2C1401.0,434.9 1398.7,433.7 1397.4,433.2C1396.1,432.8 1391.8,431.3 1391.0,430.5C1390.2,429.7 1390.8,427.5 1390.5,426.5C1390.3,425.5 1388.6,422.9 1388.7,422.0C1388.8,421.0 1390.6,419.0 1391.5,418.3C1392.4,417.7 1394.8,416.7 1396.2,416.4C1397.5,416.2 1401.9,415.4 1403.3,415.9C1404.7,416.4 1407.5,419.7 1408.1,420.8C1408.7,421.8 1408.6,424.1 1408.4,424.9Z"/>
<path d="M1435.1,413.7C1435.2,415.0 1434.7,418.6 1433.8,419.3C1432.9,419.9 1428.6,419.2 1427.2,419.0C1425.8,418.8 1422.3,418.3 1421.6,417.8C1420.8,417.2 1420.2,415.1 1420.5,414.0C1420.8,412.9 1423.3,409.4 1424.3,408.3C1425.2,407.2 1427.4,404.7 1428.4,404.6C1429.4,404.6 1432.1,406.9 1432.9,408.0C1433.7,409.0 1435.0,412.4 1435.1,413.7Z"/>
<path d="M1346.3,450.5C1346.5,452.0 1345.4,454.2 1344.8,455.1C1344.3,456.0 1342.6,458.1 1341.6,458.2C1340.7,458.2 1337.5,456.4 1336.6,455.5C1335.7,454.7 1333.7,452.2 1333.8,451.0C1333.8,449.9 1336.2,446.5 1337.0,445.4C1337.9,444.4 1340.4,442.5 1341.1,442.3C1341.9,442.0 1343.1,442.0 1343.7,443.0C1344.3,443.9 1346.2,449.1 1346.3,450.5Z"/>
<path d="M1101.2,527.4C1100.9,528.7 1097.6,532.1 1096.5,532.9C1095.4,533.7 1093.2,534.0 1092.0,534.3C1090.8,534.6 1087.6,535.2 1086.1,535.2C1084.7,535.1 1080.2,534.4 1079.4,533.8C1078.6,533.3 1079.6,531.9 1079.2,530.8C1078.8,529.7 1075.9,525.2 1075.8,524.1C1075.7,523.1 1077.2,522.1 1078.2,521.6C1079.3,521.1 1083.1,519.6 1084.8,519.5C1086.6,519.4 1091.4,520.1 1093.1,520.4C1094.8,520.7 1098.4,521.1 1099.3,521.9C1100.3,522.8 1101.5,526.1 1101.2,527.4Z"/>
<path d="M1227.5,532.4C1227.8,533.9 1227.6,537.7 1226.7,538.7C1225.7,539.8 1221.3,540.6 1219.5,541.5C1217.7,542.3 1212.8,546.1 1211.6,545.9C1210.4,545.6 1209.6,540.5 1209.1,539.2C1208.6,537.8 1208.1,535.5 1207.6,534.3C1207.0,533.1 1204.1,530.1 1204.3,528.8C1204.5,527.5 1208.1,523.8 1209.2,522.9C1210.2,522.0 1211.9,521.1 1213.4,521.0C1215.0,521.0 1221.3,521.6 1222.6,522.2C1223.9,522.7 1223.9,524.4 1224.5,525.6C1225.1,526.8 1227.3,530.8 1227.5,532.4Z"/>
<path d="M1371.1,522.7C1371.0,523.7 1369.8,526.0 1369.4,527.5C1369.0,529.0 1368.2,534.7 1367.6,535.4C1367.0,536.1 1364.7,533.9 1364.1,533.6C1363.5,533.3 1362.9,533.6 1362.3,532.9C1361.7,532.1 1359.3,528.3 1359.1,527.1C1358.9,525.9 1360.3,524.1 1360.7,522.8C1361.1,521.5 1362.0,517.1 1362.6,516.0C1363.1,514.9 1364.7,513.5 1365.2,513.4C1365.7,513.3 1366.6,514.8 1367.2,515.5C1367.7,516.1 1369.7,518.1 1370.2,519.0C1370.7,519.8 1371.2,521.7 1371.1,522.7Z"/>
<path d="M1400.6,478.6C1400.2,480.1 1397.8,481.6 1396.9,482.6C1396.1,483.6 1394.2,486.9 1393.2,487.2C1392.2,487.4 1389.3,485.3 1388.2,484.6C1387.2,483.9 1384.4,482.3 1384.2,481.0C1384.0,479.7 1386.3,474.8 1386.6,473.3C1386.9,471.9 1386.0,469.6 1386.7,468.3C1387.4,467.1 1391.3,463.4 1392.5,462.6C1393.6,461.7 1395.9,461.0 1396.8,461.1C1397.7,461.2 1399.7,462.2 1400.0,463.2C1400.4,464.2 1399.8,467.8 1399.8,469.6C1399.9,471.4 1400.9,477.1 1400.6,478.6Z"/>
<path d="M1117.6,378.6C1117.2,379.0 1115.4,379.2 1114.7,379.3C1113.9,379.4 1112.2,379.6 1111.3,379.4C1110.5,379.2 1107.9,378.1 1107.4,377.4C1106.9,376.8 1106.9,374.5 1107.1,373.9C1107.4,373.3 1109.0,372.4 1109.5,372.3C1110.1,372.1 1110.7,372.4 1111.7,372.8C1112.7,373.1 1117.4,374.7 1118.1,375.3C1118.8,376.0 1118.0,378.1 1117.6,378.6Z"/>
<path d="M1047.1,371.2C1046.8,371.5 1045.3,372.6 1044.5,372.7C1043.6,372.8 1040.9,372.5 1040.0,372.3C1039.2,372.0 1037.6,371.4 1037.1,370.8C1036.6,370.1 1035.5,366.9 1035.7,366.4C1035.9,365.9 1038.1,366.5 1038.9,366.4C1039.8,366.3 1041.8,365.2 1042.7,365.6C1043.6,365.9 1046.2,368.7 1046.7,369.3C1047.2,370.0 1047.3,370.8 1047.1,371.2Z"/>
<path d="M1206.7,417.0C1206.8,417.8 1208.0,420.2 1207.4,420.7C1206.8,421.1 1202.6,420.9 1201.4,420.9C1200.3,420.9 1198.5,421.3 1197.8,420.8C1197.1,420.2 1195.3,417.0 1195.4,416.2C1195.5,415.4 1197.6,414.4 1198.4,413.9C1199.1,413.5 1200.7,412.7 1201.6,412.8C1202.5,412.8 1205.8,413.7 1206.4,414.1C1207.0,414.6 1206.6,416.3 1206.7,417.0Z"/>
<path d="M1128.8,466.0C1128.8,466.6 1126.9,467.0 1126.1,467.4C1125.3,467.9 1122.9,469.9 1122.1,470.0C1121.2,470.1 1119.3,468.9 1118.8,468.3C1118.4,467.6 1117.8,465.0 1117.9,464.4C1118.0,463.7 1119.4,463.1 1119.9,462.6C1120.4,462.2 1121.5,460.3 1122.2,460.3C1122.9,460.3 1125.3,462.1 1126.1,462.7C1126.9,463.4 1128.8,465.5 1128.8,466.0Z"/>
<path d="M1497.0,312.0C1497.3,306.9 1499.2,299.3 1502.0,296.0C1504.8,292.7 1511.5,290.6 1516.0,290.0C1520.5,289.4 1527.2,292.3 1532.0,292.0C1536.8,291.7 1543.5,287.7 1548.0,288.0C1552.5,288.3 1559.3,290.7 1562.0,294.0C1564.7,297.3 1566.0,305.2 1566.0,310.0C1566.0,314.8 1564.1,321.8 1562.0,326.0C1559.9,330.2 1555.3,335.0 1552.0,338.0C1548.7,341.0 1544.2,345.1 1540.0,346.0C1535.8,346.9 1528.5,344.9 1524.0,344.0C1519.5,343.1 1513.6,342.1 1510.0,340.0C1506.4,337.9 1502.0,334.2 1500.0,330.0C1498.0,325.8 1496.7,317.1 1497.0,312.0Z"/>
<path d="M1456.1,328.1C1456.2,330.3 1454.9,338.0 1454.7,340.1C1454.4,342.1 1454.5,344.6 1454.1,345.7C1453.7,346.8 1452.2,349.5 1451.2,349.6C1450.1,349.8 1446.1,347.5 1445.0,346.8C1443.8,346.1 1441.8,344.6 1441.3,343.6C1440.8,342.6 1441.1,339.9 1440.8,338.2C1440.4,336.5 1438.2,330.7 1438.2,329.1C1438.2,327.5 1439.9,325.6 1440.6,324.4C1441.3,323.1 1443.4,319.5 1443.9,318.2C1444.4,316.8 1444.1,314.1 1445.0,313.1C1445.9,312.1 1450.4,308.6 1451.3,309.4C1452.1,310.1 1452.2,318.3 1452.5,319.7C1452.8,321.1 1453.6,320.6 1454.0,321.6C1454.4,322.6 1456.0,326.0 1456.1,328.1Z"/>
<path d="M1464.0,372.0C1465.5,368.1 1471.8,359.8 1476.0,358.0C1480.2,356.2 1488.4,357.9 1492.0,360.0C1495.6,362.1 1500.3,368.1 1500.0,372.0C1499.7,375.9 1493.9,383.0 1490.0,386.0C1486.1,389.0 1477.6,392.3 1474.0,392.0C1470.4,391.7 1467.5,387.0 1466.0,384.0C1464.5,381.0 1462.5,375.9 1464.0,372.0Z"/>
<path d="M1617.0,362.0C1618.5,357.8 1626.0,356.0 1630.0,356.0C1634.0,356.0 1641.3,359.0 1644.0,362.0C1646.7,365.0 1648.0,371.5 1648.0,376.0C1648.0,380.5 1645.8,387.8 1644.0,392.0C1642.2,396.2 1639.0,402.8 1636.0,404.0C1633.0,405.2 1626.4,403.0 1624.0,400.0C1621.6,397.0 1621.0,389.7 1620.0,384.0C1619.0,378.3 1615.5,366.2 1617.0,362.0Z"/>
<path d="M1650.0,386.0C1650.3,383.6 1659.5,377.3 1664.0,374.0C1668.5,370.7 1676.7,364.6 1680.0,364.0C1683.3,363.4 1686.6,367.0 1686.0,370.0C1685.4,373.0 1679.6,381.0 1676.0,384.0C1672.4,387.0 1665.9,389.7 1662.0,390.0C1658.1,390.3 1649.7,388.4 1650.0,386.0Z"/>
<path d="M1686.0,400.0C1683.0,396.1 1683.7,386.6 1684.0,380.0C1684.3,373.4 1686.5,362.6 1688.0,356.0C1689.5,349.4 1691.6,341.1 1694.0,336.0C1696.4,330.9 1699.8,324.4 1704.0,322.0C1708.2,319.6 1716.6,318.8 1722.0,320.0C1727.4,321.2 1735.8,325.5 1740.0,330.0C1744.2,334.5 1748.2,343.7 1750.0,350.0C1751.8,356.3 1752.6,366.3 1752.0,372.0C1751.4,377.7 1748.1,384.1 1746.0,388.0C1743.9,391.9 1741.6,395.6 1738.0,398.0C1734.4,400.4 1727.1,402.8 1722.0,404.0C1716.9,405.2 1709.4,406.6 1704.0,406.0C1698.6,405.4 1689.0,403.9 1686.0,400.0Z"/>
<path d="M1737.0,320.0C1735.8,312.2 1741.2,305.1 1744.0,300.0C1746.8,294.9 1752.1,289.6 1756.0,286.0C1759.9,282.4 1765.5,278.7 1770.0,276.0C1774.5,273.3 1780.0,269.5 1786.0,268.0C1792.0,266.5 1802.2,266.3 1810.0,266.0C1817.8,265.7 1830.2,265.1 1838.0,266.0C1845.8,266.9 1856.6,269.0 1862.0,272.0C1867.4,275.0 1871.6,280.9 1874.0,286.0C1876.4,291.1 1878.3,300.0 1878.0,306.0C1877.7,312.0 1872.3,320.3 1872.0,326.0C1871.7,331.7 1876.9,339.2 1876.0,344.0C1875.1,348.8 1869.9,355.3 1866.0,358.0C1862.1,360.7 1854.5,359.9 1850.0,362.0C1845.5,364.1 1840.5,369.3 1836.0,372.0C1831.5,374.7 1824.5,378.2 1820.0,380.0C1815.5,381.8 1810.2,384.6 1806.0,384.0C1801.8,383.4 1795.9,378.7 1792.0,376.0C1788.1,373.3 1783.9,368.1 1780.0,366.0C1776.1,363.9 1770.2,364.1 1766.0,362.0C1761.8,359.9 1756.3,358.3 1752.0,352.0C1747.7,345.7 1738.2,327.8 1737.0,320.0Z"/>
<path d="M1772.4,407.3C1772.7,408.9 1772.6,412.3 1771.6,413.6C1770.6,414.9 1766.1,417.7 1764.1,418.5C1762.1,419.2 1756.0,420.1 1754.3,419.8C1752.6,419.5 1750.4,417.1 1749.2,415.6C1748.1,414.1 1745.1,408.8 1744.6,407.0C1744.1,405.1 1745.1,401.4 1745.2,399.7C1745.3,398.0 1744.2,393.6 1745.6,392.4C1747.1,391.2 1755.1,389.4 1757.5,389.3C1759.8,389.3 1764.8,391.0 1766.1,392.3C1767.4,393.6 1768.1,398.6 1768.9,400.3C1769.6,402.1 1772.1,405.8 1772.4,407.3Z"/>
<path d="M1930.4,373.6C1930.6,375.9 1929.0,383.4 1928.4,386.5C1927.8,389.6 1926.4,398.2 1925.4,400.4C1924.4,402.5 1921.4,404.2 1920.1,404.8C1918.8,405.4 1915.6,406.4 1914.3,405.2C1913.0,404.1 1910.0,397.1 1909.0,395.1C1907.9,393.1 1906.2,390.2 1905.5,388.1C1904.7,386.0 1902.6,380.1 1902.8,377.0C1903.0,373.8 1906.4,364.2 1907.0,361.0C1907.6,357.9 1906.9,351.3 1907.7,349.9C1908.6,348.5 1913.1,349.6 1914.3,349.2C1915.5,348.8 1916.4,345.8 1917.8,346.7C1919.2,347.5 1925.1,354.1 1926.1,356.5C1927.2,358.9 1926.2,365.1 1926.7,367.1C1927.2,369.1 1930.2,371.4 1930.4,373.6Z"/>
<path d="M1640.9,312.0C1640.8,312.8 1640.4,315.5 1639.6,315.9C1638.8,316.4 1635.2,316.4 1634.0,316.2C1632.7,316.0 1630.0,314.4 1629.0,314.1C1628.1,313.8 1626.3,314.2 1625.6,313.8C1624.9,313.4 1623.5,311.1 1623.1,310.3C1622.7,309.6 1621.6,308.0 1621.9,307.3C1622.3,306.5 1625.1,304.0 1626.3,303.9C1627.5,303.8 1631.3,305.9 1632.6,306.4C1633.8,306.9 1635.7,307.6 1636.7,308.0C1637.6,308.4 1640.1,309.4 1640.6,309.9C1641.1,310.3 1641.0,311.3 1640.9,312.0Z"/>
<path d="M1602.2,337.4C1601.8,338.2 1600.4,340.2 1599.5,340.6C1598.5,341.1 1594.5,341.6 1593.8,341.2C1593.2,340.9 1593.8,338.8 1593.8,337.9C1593.8,337.0 1593.6,334.6 1594.0,333.7C1594.4,332.9 1596.8,331.0 1597.5,330.7C1598.3,330.3 1599.4,330.3 1600.1,330.6C1600.7,331.0 1602.8,332.9 1603.1,333.7C1603.3,334.5 1602.7,336.6 1602.2,337.4Z"/>
<path d="M1629.4,333.2C1630.0,334.2 1629.9,336.7 1629.2,337.8C1628.6,338.9 1625.0,342.0 1623.8,342.7C1622.6,343.4 1620.2,344.2 1619.3,344.1C1618.3,344.0 1615.9,342.8 1615.6,341.8C1615.3,340.7 1616.4,336.1 1616.7,335.1C1617.0,334.0 1617.4,333.4 1618.2,332.7C1619.1,332.0 1622.5,329.3 1623.8,329.3C1625.1,329.4 1628.7,332.2 1629.4,333.2Z"/>
<path d="M1565.4,399.5C1565.4,400.5 1566.0,402.2 1565.4,403.3C1564.8,404.3 1561.6,407.6 1560.3,408.3C1559.0,408.9 1555.8,408.9 1554.5,408.6C1553.2,408.3 1549.7,406.5 1548.9,405.7C1548.2,404.9 1548.0,403.2 1547.8,402.0C1547.6,400.8 1547.0,396.7 1547.3,395.5C1547.5,394.2 1549.7,392.2 1550.3,391.4C1550.9,390.7 1551.3,389.1 1552.5,389.1C1553.6,389.1 1558.8,390.8 1560.3,391.4C1561.8,392.1 1564.7,393.7 1565.3,394.6C1565.9,395.6 1565.4,398.5 1565.4,399.5Z"/>
<path d="M1540.5,405.8C1540.3,406.8 1538.3,410.6 1537.3,411.4C1536.3,412.3 1533.1,413.2 1531.8,413.1C1530.5,413.0 1526.9,411.3 1526.1,410.4C1525.3,409.5 1524.9,406.3 1525.0,405.4C1525.0,404.5 1525.3,402.9 1526.2,402.5C1527.1,402.0 1531.3,401.3 1532.9,401.3C1534.4,401.3 1538.2,402.3 1539.1,402.8C1540.0,403.3 1540.7,404.7 1540.5,405.8Z"/>
<path d="M1606.9,391.5C1606.9,392.4 1604.6,396.6 1603.8,397.3C1603.0,398.1 1601.4,398.1 1600.4,398.0C1599.4,397.9 1595.9,397.1 1595.3,396.4C1594.8,395.7 1595.2,392.7 1595.4,391.9C1595.5,391.0 1595.9,389.8 1596.6,389.2C1597.3,388.7 1600.6,387.4 1601.4,387.4C1602.3,387.5 1603.2,389.2 1603.8,389.7C1604.5,390.1 1606.9,390.6 1606.9,391.5Z"/>
<path d="M1618.6,416.4C1617.9,418.4 1617.1,424.4 1616.3,425.2C1615.4,425.9 1612.2,423.2 1611.3,423.1C1610.5,422.9 1610.1,424.3 1609.1,423.9C1608.1,423.5 1603.5,420.8 1602.7,419.8C1601.9,418.9 1602.0,417.2 1602.5,415.9C1603.1,414.6 1606.5,410.0 1607.5,408.8C1608.4,407.6 1609.9,406.4 1610.7,405.6C1611.6,404.8 1613.7,401.6 1614.7,401.7C1615.6,401.8 1618.0,405.9 1618.8,406.6C1619.7,407.3 1622.1,406.6 1622.0,407.7C1622.0,408.9 1619.2,414.3 1618.6,416.4Z"/>
<path d="M1462.4,449.1C1462.0,450.1 1459.5,451.3 1458.3,452.0C1457.0,452.6 1452.8,454.1 1451.6,454.6C1450.3,455.2 1448.5,457.4 1447.7,456.6C1446.8,455.8 1444.7,449.2 1444.5,447.9C1444.3,446.5 1445.5,446.1 1446.0,444.8C1446.6,443.6 1448.6,438.0 1449.2,437.1C1449.9,436.2 1450.4,437.3 1451.4,437.2C1452.3,437.1 1456.2,436.1 1457.3,436.2C1458.5,436.3 1460.6,437.2 1461.1,438.0C1461.6,438.8 1461.3,442.1 1461.5,443.4C1461.6,444.7 1462.7,448.1 1462.4,449.1Z"/>
<path d="M1493.2,463.1C1493.4,463.9 1492.9,465.4 1492.3,465.9C1491.6,466.3 1488.5,467.2 1487.6,467.2C1486.8,467.2 1485.6,466.6 1484.9,466.1C1484.1,465.5 1481.3,463.1 1481.1,462.3C1481.0,461.5 1482.8,459.7 1483.6,459.0C1484.3,458.3 1486.8,456.3 1487.6,456.2C1488.4,456.2 1489.8,457.6 1490.5,458.4C1491.1,459.2 1493.0,462.2 1493.2,463.1Z"/>
<path d="M1469.0,496.2C1468.9,497.3 1468.4,498.8 1467.8,499.5C1467.3,500.3 1465.5,502.3 1464.4,502.4C1463.3,502.5 1459.7,501.3 1458.5,500.3C1457.3,499.2 1454.6,494.8 1454.3,493.5C1453.9,492.2 1454.4,490.2 1455.5,489.3C1456.6,488.5 1462.4,486.1 1463.9,486.1C1465.5,486.2 1468.4,488.7 1469.0,489.9C1469.6,491.1 1469.1,495.1 1469.0,496.2Z"/>
<path d="M1879.1,429.1C1879.1,430.2 1878.2,432.5 1877.5,433.5C1876.9,434.5 1874.5,437.8 1873.6,437.8C1872.6,437.8 1870.2,434.5 1869.5,433.4C1868.7,432.2 1867.1,429.0 1867.1,427.9C1867.0,426.8 1868.5,424.7 1869.3,423.7C1870.1,422.8 1873.0,419.4 1874.0,419.5C1874.9,419.5 1876.8,423.0 1877.4,424.2C1878.0,425.3 1879.1,428.0 1879.1,429.1Z"/>
<path d="M1709.6,530.5C1709.8,531.4 1711.2,533.8 1710.8,534.3C1710.3,534.8 1706.5,534.9 1705.5,534.9C1704.5,534.9 1703.0,534.4 1702.4,533.9C1701.8,533.5 1700.4,532.1 1700.4,531.3C1700.5,530.4 1702.0,527.2 1702.6,526.5C1703.2,525.8 1704.6,525.4 1705.4,525.4C1706.3,525.4 1709.1,526.1 1709.6,526.7C1710.1,527.3 1709.5,529.7 1709.6,530.5Z"/>
<path d="M1572.0,350.4C1572.0,351.2 1569.7,353.2 1568.9,354.0C1568.0,354.7 1565.6,356.6 1564.8,356.6C1564.0,356.6 1562.8,354.6 1562.1,354.0C1561.5,353.4 1559.2,352.2 1559.3,351.3C1559.5,350.5 1562.3,347.3 1563.2,346.7C1564.0,346.1 1565.9,346.2 1566.6,346.1C1567.3,346.1 1568.4,346.0 1569.0,346.5C1569.6,347.0 1572.0,349.5 1572.0,350.4Z"/>
<path d="M576.5,665.6C576.0,667.7 575.0,675.7 574.1,677.5C573.1,679.3 569.5,681.3 568.5,681.1C567.5,681.0 566.3,676.4 565.4,676.0C564.6,675.6 561.7,678.5 561.1,677.6C560.4,676.7 559.3,670.7 559.6,668.3C559.9,665.9 562.1,658.9 563.3,657.2C564.4,655.5 568.8,653.9 569.8,653.5C570.9,653.1 571.2,653.8 572.2,654.0C573.2,654.2 577.9,654.8 578.5,655.5C579.2,656.2 578.0,658.7 577.8,659.9C577.5,661.1 576.9,663.6 576.5,665.6Z"/>
<path d="M543.2,709.9C543.6,710.8 541.5,712.7 541.2,713.6C541.0,714.5 541.8,716.9 541.1,717.6C540.4,718.4 536.5,719.4 535.2,720.2C534.0,720.9 531.4,724.3 530.4,724.1C529.3,723.9 527.1,719.4 526.1,718.5C525.1,717.5 522.1,716.8 521.7,715.9C521.2,714.9 521.5,711.5 522.3,710.5C523.2,709.5 527.9,708.0 529.1,707.5C530.3,707.0 531.5,706.4 532.5,706.3C533.6,706.2 536.9,706.0 538.2,706.4C539.4,706.9 542.9,709.1 543.2,709.9Z"/>
<path d="M594.2,741.2C594.3,742.1 593.6,743.5 592.7,744.2C591.7,745.0 587.6,747.3 586.4,747.3C585.2,747.2 583.7,744.9 582.8,744.0C581.9,743.2 578.7,740.6 578.7,739.8C578.7,739.0 581.8,737.8 582.7,737.3C583.6,736.7 585.3,735.3 586.3,735.2C587.3,735.2 590.3,736.3 591.2,737.0C592.1,737.7 594.0,740.4 594.2,741.2Z"/>
<path d="M550.3,763.3C550.2,764.4 549.0,767.7 548.3,768.8C547.5,769.9 545.0,772.6 544.0,773.0C543.0,773.3 540.6,772.5 539.8,771.9C539.1,771.3 537.7,768.7 537.4,767.5C537.1,766.4 537.3,763.3 537.3,761.9C537.3,760.6 536.9,757.4 537.4,756.2C537.8,755.0 540.3,752.1 541.3,751.6C542.4,751.0 545.6,751.2 546.6,751.4C547.6,751.7 549.5,753.1 549.8,754.0C550.2,755.0 549.7,758.3 549.7,759.4C549.8,760.4 550.5,762.2 550.3,763.3Z"/>
<path d="M741.1,627.4C741.0,628.1 740.5,629.8 740.0,630.4C739.6,631.0 738.5,632.1 737.5,632.2C736.4,632.3 731.9,631.6 731.3,631.2C730.7,630.7 732.2,629.0 732.4,628.4C732.6,627.8 732.6,626.9 733.1,626.3C733.6,625.6 735.7,623.4 736.6,623.2C737.5,623.0 740.3,623.9 740.8,624.4C741.3,624.9 741.2,626.7 741.1,627.4Z"/>
<path d="M561.6,804.1C561.7,805.3 561.7,808.6 561.1,809.6C560.6,810.5 557.9,812.1 556.8,812.1C555.8,812.0 552.4,810.3 551.8,809.2C551.2,808.1 551.4,803.7 551.5,802.5C551.7,801.2 552.3,799.2 553.1,798.5C553.9,797.7 557.2,795.7 558.0,795.8C558.9,795.9 560.0,798.3 560.4,799.2C560.8,800.2 561.5,802.9 561.6,804.1Z"/>
<path d="M491.1,775.2C491.1,776.3 488.8,776.4 488.1,777.0C487.4,777.7 486.0,780.4 485.2,780.8C484.4,781.2 481.6,781.7 481.1,780.7C480.6,779.7 480.7,773.9 480.8,772.3C480.9,770.6 481.6,767.6 482.0,766.8C482.4,765.9 483.5,764.7 484.2,764.7C484.9,764.8 487.1,765.9 487.9,767.1C488.7,768.3 491.1,774.0 491.1,775.2Z"/>
<path d="M465.9,744.9C465.9,745.9 464.2,748.5 463.3,749.2C462.4,749.8 459.1,750.3 458.1,750.4C457.1,750.4 455.5,750.1 454.7,749.5C453.9,748.9 451.1,746.3 451.1,745.6C451.0,744.8 453.4,743.6 454.4,743.1C455.4,742.6 458.4,741.4 459.5,741.2C460.6,741.0 463.0,740.6 463.8,741.0C464.5,741.4 466.0,743.9 465.9,744.9Z"/>
<path d="M611.4,656.7C611.3,657.5 609.8,659.8 609.3,660.4C608.7,661.1 607.4,662.2 606.5,662.2C605.7,662.2 602.8,661.3 602.1,660.7C601.4,660.1 600.8,658.0 600.7,657.1C600.6,656.2 600.7,654.0 601.3,653.3C602.0,652.6 605.1,650.9 606.1,651.0C607.1,651.1 609.2,653.2 609.8,653.8C610.5,654.5 611.4,655.9 611.4,656.7Z"/>
<path d="M474.2,605.2C474.2,606.1 472.9,608.5 472.3,609.3C471.7,610.0 470.2,611.4 469.1,611.5C467.9,611.6 463.1,610.6 462.5,609.9C461.8,609.2 463.0,606.3 463.1,605.5C463.3,604.7 463.2,603.9 463.9,603.1C464.5,602.4 467.6,598.8 468.6,598.7C469.6,598.5 471.6,601.0 472.3,601.8C472.9,602.5 474.2,604.3 474.2,605.2Z"/>
<path d="M490.3,641.8C490.2,642.6 488.3,642.9 487.5,643.3C486.7,643.7 484.3,645.4 483.4,645.5C482.5,645.6 480.3,644.5 479.7,643.9C479.2,643.4 478.6,641.3 478.6,640.7C478.6,640.1 479.0,638.9 479.7,638.5C480.5,638.0 483.9,637.1 484.9,636.9C486.0,636.6 488.1,635.7 488.7,636.3C489.4,636.9 490.5,641.0 490.3,641.8Z"/>
<path d="M1369.7,582.3C1369.6,583.5 1365.8,582.8 1365.1,583.9C1364.3,584.9 1363.8,590.9 1362.8,591.5C1361.9,592.1 1358.5,589.4 1357.1,589.0C1355.7,588.6 1351.9,588.3 1351.2,587.9C1350.5,587.4 1351.1,586.4 1351.0,585.3C1350.8,584.1 1349.6,579.8 1349.9,578.1C1350.1,576.5 1352.2,572.4 1353.0,571.5C1353.8,570.7 1355.6,570.8 1357.0,570.7C1358.4,570.5 1363.8,570.1 1364.8,570.4C1365.7,570.8 1364.5,572.5 1365.1,573.8C1365.7,575.2 1369.7,581.1 1369.7,582.3Z"/>
<path d="M1087.6,554.1C1087.4,554.7 1086.5,556.0 1086.1,556.4C1085.7,556.9 1084.5,558.0 1083.9,558.0C1083.3,557.9 1081.3,556.6 1080.9,556.2C1080.5,555.8 1080.1,555.2 1080.3,554.6C1080.4,554.1 1081.7,551.8 1082.0,551.2C1082.4,550.6 1082.8,549.5 1083.4,549.5C1084.0,549.5 1086.7,550.7 1087.2,551.2C1087.7,551.7 1087.7,553.5 1087.6,554.1Z"/>
<path d="M1070.2,578.6C1069.7,579.5 1068.7,581.5 1068.0,582.3C1067.2,583.1 1064.2,585.3 1063.5,585.5C1062.9,585.7 1062.4,584.3 1062.1,583.8C1061.7,583.3 1061.0,582.0 1060.7,581.2C1060.5,580.4 1059.8,577.8 1060.0,576.7C1060.2,575.7 1061.9,573.2 1062.4,572.4C1062.9,571.6 1063.9,570.8 1064.6,570.2C1065.3,569.6 1067.8,567.5 1068.4,567.4C1069.1,567.4 1069.9,568.9 1070.3,569.8C1070.7,570.7 1071.8,573.8 1071.8,574.8C1071.7,575.8 1070.6,577.7 1070.2,578.6Z"/>
<path d="M1109.6,579.8C1109.1,581.0 1109.1,581.2 1108.4,582.2C1107.6,583.3 1103.9,588.1 1103.2,588.7C1102.5,589.2 1102.7,587.5 1102.3,586.7C1102.0,585.9 1100.6,582.8 1100.2,581.8C1099.8,580.8 1098.4,579.3 1098.5,578.2C1098.6,577.1 1100.2,573.4 1101.0,572.3C1101.8,571.2 1104.7,569.7 1105.4,568.9C1106.2,568.1 1107.1,565.7 1107.8,565.6C1108.5,565.4 1110.7,566.8 1111.2,567.5C1111.8,568.2 1112.8,570.3 1112.6,571.7C1112.4,573.2 1110.1,578.6 1109.6,579.8Z"/>
<path d="M1185.6,586.2C1185.8,586.7 1187.4,586.9 1187.1,587.5C1186.8,588.1 1183.9,590.7 1183.0,591.6C1182.0,592.5 1179.6,594.8 1178.8,595.3C1178.1,595.7 1177.0,595.8 1176.4,595.7C1175.7,595.5 1174.0,594.3 1173.3,594.0C1172.6,593.7 1170.8,593.8 1170.6,593.2C1170.5,592.5 1171.4,589.6 1172.1,588.7C1172.7,587.8 1175.1,586.0 1176.1,585.3C1177.0,584.7 1179.1,583.3 1180.2,583.1C1181.3,582.8 1184.7,582.6 1185.3,583.0C1186.0,583.4 1185.3,585.7 1185.6,586.2Z"/>
<path d="M1067.5,620.4C1068.0,621.3 1067.7,623.8 1067.4,624.7C1067.2,625.7 1066.0,628.2 1065.2,628.7C1064.4,629.1 1061.4,629.3 1060.7,629.0C1059.9,628.6 1059.4,626.5 1058.9,625.6C1058.5,624.7 1056.6,622.2 1056.6,621.3C1056.6,620.3 1058.3,618.1 1059.1,617.5C1060.0,617.0 1062.5,616.2 1063.5,616.5C1064.5,616.9 1067.1,619.4 1067.5,620.4Z"/>
<path d="M1192.0,634.2C1191.9,635.0 1194.1,637.8 1193.7,638.2C1193.3,638.6 1190.0,637.7 1188.5,637.8C1187.1,637.8 1183.3,639.0 1181.1,639.0C1178.9,639.1 1171.7,638.6 1169.6,638.1C1167.6,637.7 1164.0,636.0 1163.3,635.3C1162.6,634.6 1163.0,632.5 1163.8,632.1C1164.5,631.6 1167.8,631.8 1169.6,631.5C1171.5,631.3 1177.3,630.2 1179.5,630.0C1181.8,629.8 1187.1,629.5 1188.9,629.7C1190.6,629.8 1194.4,630.6 1194.8,631.1C1195.1,631.7 1192.1,633.4 1192.0,634.2Z"/>
<path d="M1323.2,647.1C1323.4,648.0 1324.2,649.5 1323.4,650.1C1322.6,650.6 1317.7,651.8 1316.4,651.9C1315.2,652.0 1313.2,651.7 1312.6,651.1C1312.1,650.6 1311.9,647.9 1311.9,647.1C1312.0,646.3 1312.2,645.0 1312.9,644.2C1313.5,643.5 1316.4,641.1 1317.5,640.9C1318.6,640.6 1321.6,641.6 1322.3,642.3C1322.9,643.0 1323.1,646.2 1323.2,647.1Z"/>
<path d="M1362.3,653.8C1362.3,654.6 1358.5,656.1 1357.7,656.7C1356.9,657.3 1356.5,659.0 1355.3,659.0C1354.1,659.1 1348.4,657.7 1347.2,657.0C1346.0,656.3 1344.8,654.0 1344.8,653.0C1344.9,652.0 1346.5,649.1 1347.7,648.4C1348.9,647.8 1353.9,647.3 1355.1,647.5C1356.2,647.6 1356.6,649.0 1357.5,649.7C1358.3,650.4 1362.3,653.0 1362.3,653.8Z"/>
<path d="M1422.2,663.8C1422.6,664.6 1421.6,665.5 1420.4,666.3C1419.1,667.0 1413.3,669.7 1411.5,670.4C1409.7,671.0 1406.4,671.4 1404.9,671.6C1403.4,671.9 1400.0,672.5 1398.4,672.5C1396.9,672.5 1392.6,672.2 1391.8,671.6C1391.0,671.0 1391.4,668.4 1391.6,667.5C1391.8,666.5 1392.4,663.9 1393.6,663.2C1394.8,662.4 1400.2,661.6 1402.0,661.1C1403.8,660.6 1407.5,659.4 1409.2,659.3C1410.9,659.1 1415.1,659.5 1416.6,660.0C1418.1,660.5 1421.7,663.1 1422.2,663.8Z"/>
<path d="M1684.0,580.0C1683.1,576.4 1687.3,570.7 1690.0,568.0C1692.7,565.3 1698.7,562.0 1702.0,562.0C1705.3,562.0 1709.9,565.3 1712.0,568.0C1714.1,570.7 1716.6,576.7 1716.0,580.0C1715.4,583.3 1711.0,588.2 1708.0,590.0C1705.0,591.8 1699.6,593.5 1696.0,592.0C1692.4,590.5 1684.9,583.6 1684.0,580.0Z"/>
<path d="M1658.5,579.9C1658.3,580.8 1656.7,583.8 1655.9,584.6C1655.0,585.4 1652.2,586.7 1651.3,586.6C1650.4,586.5 1648.4,584.4 1648.0,583.7C1647.6,582.9 1647.8,580.9 1647.8,580.1C1647.9,579.4 1647.8,578.0 1648.4,577.4C1649.0,576.8 1651.7,575.4 1652.8,575.3C1653.9,575.3 1657.0,576.2 1657.7,576.7C1658.3,577.3 1658.7,579.0 1658.5,579.9Z"/>
<path d="M1731.3,611.6C1731.0,612.6 1728.2,616.7 1727.0,617.3C1725.9,617.9 1722.7,616.8 1721.7,616.6C1720.6,616.3 1718.7,615.9 1717.9,615.4C1717.1,614.8 1715.2,612.5 1715.2,611.8C1715.2,611.1 1716.6,609.8 1717.6,609.3C1718.6,608.8 1722.1,607.5 1723.5,607.4C1724.8,607.4 1728.3,608.5 1729.2,609.0C1730.1,609.4 1731.5,610.6 1731.3,611.6Z"/>
<path d="M1728.7,626.3C1728.6,627.1 1727.5,628.7 1726.8,629.2C1726.1,629.8 1723.8,630.3 1722.6,630.6C1721.5,630.8 1718.1,631.7 1716.9,631.3C1715.7,631.0 1712.8,628.5 1712.5,627.3C1712.2,626.1 1713.6,621.8 1714.6,621.2C1715.6,620.5 1719.4,621.4 1720.9,621.5C1722.5,621.6 1727.2,621.7 1728.1,622.3C1729.0,622.9 1728.9,625.4 1728.7,626.3Z"/>
<path d="M1534.0,650.0C1535.5,646.4 1540.7,641.5 1544.0,640.0C1547.3,638.5 1553.9,637.8 1556.0,640.0C1558.1,642.2 1558.6,650.2 1558.0,655.0C1557.4,659.8 1553.8,667.4 1552.0,672.0C1550.2,676.6 1548.4,684.8 1546.0,686.0C1543.6,687.2 1537.8,683.3 1536.0,680.0C1534.2,676.7 1534.3,668.5 1534.0,664.0C1533.7,659.5 1532.5,653.6 1534.0,650.0Z"/>
<path d="M1514.7,679.6C1514.7,680.9 1514.7,685.6 1514.2,686.8C1513.7,688.0 1510.9,689.7 1510.1,689.8C1509.3,689.8 1507.8,687.9 1507.4,686.8C1506.9,685.7 1506.5,681.7 1506.4,680.3C1506.3,679.0 1506.0,676.4 1506.6,675.4C1507.2,674.4 1510.4,671.7 1511.2,671.8C1512.1,671.8 1513.5,674.8 1513.9,675.7C1514.3,676.6 1514.6,678.3 1514.7,679.6Z"/>
<path d="M1605.4,593.6C1604.9,594.9 1602.1,594.9 1600.9,595.6C1599.7,596.3 1596.3,599.5 1595.1,599.6C1593.9,599.8 1590.9,597.7 1590.4,596.8C1589.9,595.8 1590.7,593.0 1590.7,591.6C1590.8,590.2 1590.4,586.2 1590.8,585.0C1591.2,583.8 1593.4,581.9 1594.1,581.3C1594.8,580.8 1596.2,580.2 1596.9,580.1C1597.6,579.9 1599.3,580.0 1600.2,580.1C1601.1,580.1 1604.2,579.8 1604.7,580.4C1605.3,580.9 1604.7,583.3 1604.8,584.9C1604.8,586.4 1605.8,592.3 1605.4,593.6Z"/>
<path d="M1592.0,615.4C1591.5,616.7 1587.8,622.3 1586.6,623.5C1585.4,624.7 1582.8,625.1 1581.9,625.7C1581.1,626.2 1579.8,628.3 1579.3,627.8C1578.7,627.4 1577.5,623.4 1577.2,621.8C1577.0,620.2 1577.0,615.3 1577.1,613.8C1577.2,612.3 1577.7,609.6 1578.3,608.7C1578.9,607.8 1581.1,606.8 1582.3,605.8C1583.4,604.8 1587.1,600.3 1588.1,600.1C1589.1,599.9 1590.6,602.7 1590.9,604.2C1591.2,605.6 1590.7,611.3 1590.8,612.6C1591.0,613.9 1592.5,614.1 1592.0,615.4Z"/>
<path d="M1528.0,771.5C1527.7,773.0 1526.4,774.8 1526.0,776.3C1525.6,777.7 1525.0,783.2 1524.4,784.1C1523.7,785.0 1521.5,783.5 1520.7,783.7C1519.9,783.9 1517.9,785.7 1517.2,785.9C1516.4,786.1 1514.6,786.4 1514.2,785.4C1513.9,784.4 1514.3,779.9 1514.4,777.5C1514.5,775.1 1514.8,767.0 1515.2,764.8C1515.7,762.5 1517.8,759.1 1518.3,758.0C1518.8,756.9 1518.7,756.1 1519.2,755.2C1519.7,754.4 1521.7,751.7 1522.6,750.8C1523.5,749.8 1526.4,746.4 1526.9,747.0C1527.3,747.6 1526.3,754.1 1526.6,756.0C1526.9,757.8 1529.0,761.3 1529.2,763.2C1529.4,765.0 1528.4,770.0 1528.0,771.5Z"/>
<path d="M1712.6,707.2C1711.9,708.0 1707.2,709.0 1706.0,709.1C1704.8,709.2 1703.1,708.4 1702.4,707.7C1701.7,707.1 1700.0,704.6 1699.7,703.7C1699.3,702.9 1698.8,701.3 1699.2,700.5C1699.6,699.7 1702.0,697.3 1703.4,696.9C1704.7,696.4 1709.7,695.9 1710.7,696.6C1711.6,697.2 1711.1,700.8 1711.3,702.1C1711.6,703.3 1713.2,706.4 1712.6,707.2Z"/>
<path d="M1728.8,649.5C1728.8,650.2 1729.7,652.6 1729.3,653.0C1728.9,653.5 1726.4,653.9 1725.6,653.8C1724.7,653.6 1722.5,652.4 1721.8,652.0C1721.0,651.5 1719.4,650.4 1719.4,649.8C1719.4,649.3 1720.7,648.0 1721.4,647.5C1722.1,647.0 1724.4,645.8 1725.4,645.8C1726.5,645.8 1729.7,646.8 1730.0,647.3C1730.4,647.7 1728.9,648.9 1728.8,649.5Z"/>
<path d="M1679.2,566.8C1679.3,567.3 1678.3,568.4 1677.8,568.8C1677.3,569.1 1675.6,570.1 1674.9,570.1C1674.3,570.1 1673.0,569.4 1672.3,569.0C1671.6,568.6 1669.0,567.2 1668.9,566.7C1668.8,566.2 1670.7,564.9 1671.5,564.5C1672.2,564.1 1674.7,563.4 1675.4,563.3C1676.0,563.3 1676.9,563.6 1677.4,564.0C1677.8,564.4 1679.2,566.2 1679.2,566.8Z"/>
<path d="M117.2,841.1C116.5,843.3 114.9,851.0 113.5,852.5C112.1,854.0 106.7,854.1 105.2,853.8C103.7,853.5 101.8,850.5 100.7,849.8C99.5,849.1 96.1,848.4 95.6,847.5C95.0,846.7 95.5,845.0 95.9,842.8C96.3,840.5 97.7,830.1 98.7,828.3C99.6,826.4 102.8,827.1 104.3,826.6C105.9,826.0 110.5,823.5 111.9,823.4C113.2,823.4 114.8,824.9 115.7,826.1C116.6,827.4 119.3,832.3 119.5,834.1C119.6,835.8 117.9,839.0 117.2,841.1Z"/>
<path d="M146.0,830.7C146.5,831.7 144.9,834.0 144.5,835.2C144.0,836.4 142.8,840.0 141.8,841.1C140.9,842.1 138.1,844.6 136.5,844.6C134.9,844.6 129.4,841.4 128.4,840.9C127.3,840.3 128.0,840.6 127.4,839.8C126.7,839.1 123.5,835.6 122.9,834.5C122.3,833.4 121.7,831.2 122.4,830.2C123.0,829.2 127.0,826.9 128.5,826.0C130.0,825.1 134.2,822.8 135.6,822.8C136.9,822.8 138.8,825.0 140.0,826.0C141.2,826.9 145.5,829.6 146.0,830.7Z"/>
<path d="M21.8,850.2C22.1,851.2 21.0,852.7 20.8,853.8C20.7,854.8 21.1,858.3 20.8,859.0C20.4,859.7 19.1,859.5 17.9,859.7C16.8,859.9 12.1,860.9 10.9,860.8C9.7,860.7 8.2,859.4 7.4,858.9C6.7,858.4 4.4,857.2 4.4,856.2C4.4,855.2 6.5,851.3 7.2,850.4C7.9,849.5 9.5,849.0 10.2,848.3C10.8,847.6 11.6,844.6 12.6,844.3C13.6,843.9 17.7,844.4 18.7,845.1C19.8,845.8 21.6,849.1 21.8,850.2Z"/>
<path d="M37.2,856.4C37.0,857.9 36.9,859.9 36.6,861.1C36.4,862.3 35.3,865.9 35.0,866.7C34.7,867.5 34.2,868.5 33.9,868.2C33.6,867.9 32.5,865.3 32.1,864.3C31.7,863.3 30.7,861.1 30.6,859.9C30.4,858.6 30.4,855.1 30.6,853.2C30.7,851.3 31.2,845.4 31.5,843.9C31.9,842.4 33.1,840.5 33.5,840.4C34.0,840.4 34.8,842.3 35.3,843.2C35.8,844.1 37.6,846.5 37.9,848.0C38.1,849.5 37.3,854.8 37.2,856.4Z"/>
<path d="M153.3,882.8C154.1,884.1 155.1,886.8 155.1,888.4C155.0,889.9 153.8,895.3 153.2,896.2C152.6,897.1 150.8,896.3 149.9,896.3C149.0,896.4 146.3,897.0 145.4,896.3C144.6,895.6 143.3,891.7 142.7,890.3C142.0,888.8 140.3,885.3 140.1,884.0C139.9,882.6 140.8,879.8 141.1,878.9C141.3,877.9 141.7,876.6 142.1,876.0C142.5,875.4 144.1,873.8 144.7,873.9C145.4,874.1 146.9,876.2 147.9,877.3C148.9,878.3 152.5,881.5 153.3,882.8Z"/>
<path d="M206.5,864.1C206.0,864.7 203.6,866.3 202.6,866.8C201.6,867.3 199.3,868.5 198.1,868.5C196.8,868.5 192.7,867.2 191.6,866.9C190.4,866.5 188.9,866.1 188.4,865.5C187.9,864.9 187.6,862.6 187.4,861.7C187.2,860.9 186.3,858.7 186.7,858.0C187.1,857.3 189.8,855.6 190.8,855.5C191.8,855.4 194.1,856.9 195.3,857.1C196.5,857.3 199.8,856.7 201.2,857.3C202.6,857.9 206.9,861.4 207.5,862.2C208.1,863.0 207.1,863.6 206.5,864.1Z"/>
<path d="M180.0,946.0C180.6,943.3 188.1,938.1 192.0,936.0C195.9,933.9 202.1,932.0 206.0,932.0C209.9,932.0 215.6,933.9 218.0,936.0C220.4,938.1 222.6,943.3 222.0,946.0C221.4,948.7 217.3,952.5 214.0,954.0C210.7,955.5 203.9,956.0 200.0,956.0C196.1,956.0 191.0,955.5 188.0,954.0C185.0,952.5 179.4,948.7 180.0,946.0Z"/>
<path d="M200.0,972.0C199.4,968.1 203.3,960.4 206.0,958.0C208.7,955.6 214.7,955.4 218.0,956.0C221.3,956.6 226.2,959.0 228.0,962.0C229.8,965.0 230.9,972.4 230.0,976.0C229.1,979.6 225.0,984.8 222.0,986.0C219.0,987.2 213.3,986.1 210.0,984.0C206.7,981.9 200.6,975.9 200.0,972.0Z"/>
<path d="M224.9,917.4C224.9,918.4 225.2,920.5 224.4,921.0C223.6,921.5 219.1,921.7 218.1,921.7C217.1,921.8 216.1,921.8 215.5,921.3C214.9,920.8 212.9,918.1 212.9,917.4C212.8,916.6 214.4,915.2 215.2,914.6C216.1,914.1 219.0,912.9 220.1,912.7C221.2,912.5 224.0,912.3 224.6,912.9C225.1,913.4 224.9,916.5 224.9,917.4Z"/>
<path d="M160.2,915.9C160.7,917.3 161.5,919.2 161.6,921.0C161.7,922.7 161.6,929.8 161.0,930.8C160.5,931.9 157.9,930.3 156.8,929.8C155.8,929.3 152.9,927.6 152.0,926.6C151.1,925.6 149.9,922.1 149.5,921.1C149.1,920.2 148.8,919.9 148.2,918.6C147.6,917.2 144.3,910.7 144.5,909.5C144.8,908.3 149.6,909.0 150.4,908.4C151.3,907.7 151.2,903.9 151.9,903.9C152.7,903.9 155.9,907.2 156.8,908.6C157.8,910.0 159.6,914.4 160.2,915.9Z"/>
<path d="M89.7,913.1C90.6,913.9 92.5,916.0 92.1,916.8C91.6,917.7 87.4,919.7 85.9,920.5C84.4,921.2 80.5,923.4 79.3,923.3C78.2,923.2 76.5,920.4 75.9,919.6C75.4,918.8 74.5,917.2 74.9,916.1C75.4,915.0 78.5,910.9 79.7,910.2C80.8,909.5 83.3,909.6 84.5,910.0C85.7,910.3 88.9,912.3 89.7,913.1Z"/>
<path d="M227.2,889.9C227.2,891.0 226.8,893.7 226.6,894.7C226.4,895.8 225.9,898.1 225.4,898.6C225.0,899.2 223.4,899.4 222.9,899.3C222.4,899.3 221.7,899.0 221.4,898.3C221.2,897.6 221.1,894.3 220.9,893.1C220.7,891.8 219.9,889.1 219.9,887.6C220.0,886.1 220.8,881.4 221.2,880.4C221.6,879.4 223.1,879.5 223.7,879.4C224.2,879.2 225.5,878.6 225.9,879.3C226.3,880.0 227.1,884.3 227.2,885.5C227.4,886.7 227.3,888.9 227.2,889.9Z"/>
<path d="M355.0,813.1C355.1,814.3 353.4,819.3 352.3,820.1C351.2,820.9 347.8,819.6 345.9,820.0C343.9,820.4 337.1,823.2 335.5,823.2C333.9,823.3 333.4,821.2 332.1,820.5C330.8,819.8 325.5,818.2 324.3,817.2C323.1,816.2 321.7,813.4 322.0,812.1C322.4,810.8 325.4,806.7 327.3,806.0C329.3,805.3 336.6,806.3 338.5,806.1C340.4,806.0 342.4,804.4 343.9,804.9C345.4,805.3 350.0,808.7 351.3,809.7C352.6,810.6 354.9,811.9 355.0,813.1Z"/>
<path d="M419.3,812.8C419.2,814.0 413.6,818.8 412.4,819.8C411.2,820.9 411.2,821.1 409.2,821.6C407.3,822.2 397.8,824.5 395.4,824.5C393.1,824.6 390.2,823.2 389.2,822.3C388.2,821.4 387.4,818.1 387.1,816.9C386.8,815.7 385.9,813.0 386.4,812.0C387.0,810.9 390.4,808.7 391.8,808.1C393.1,807.5 396.0,806.6 397.8,806.7C399.7,806.8 405.5,808.9 407.4,809.2C409.2,809.5 412.2,809.0 413.6,809.4C415.0,809.9 419.5,811.6 419.3,812.8Z"/>
<path d="M483.0,880.1C482.8,882.7 479.9,896.2 479.3,898.6C478.8,901.1 478.6,900.1 478.0,901.0C477.4,901.9 475.5,905.4 474.3,906.6C473.1,907.9 469.1,911.3 467.8,911.5C466.4,911.7 463.1,910.7 462.6,908.4C462.1,906.1 463.3,894.3 463.2,891.9C463.0,889.4 461.7,889.4 461.4,887.6C461.2,885.9 460.6,879.7 461.1,876.9C461.7,874.2 465.0,866.3 465.9,863.9C466.7,861.5 467.3,856.6 468.2,856.1C469.2,855.6 473.4,858.0 474.1,859.5C474.9,861.0 473.9,867.2 474.6,869.1C475.4,871.1 479.6,875.0 480.6,876.3C481.6,877.5 483.1,877.5 483.0,880.1Z"/>
<path d="M357.0,912.0C357.9,909.0 365.9,905.4 370.0,906.0C374.1,906.6 379.8,913.6 384.0,916.0C388.2,918.4 394.1,919.9 398.0,922.0C401.9,924.1 408.8,927.0 410.0,930.0C411.2,933.0 408.7,940.8 406.0,942.0C403.3,943.2 396.2,939.8 392.0,938.0C387.8,936.2 382.2,931.8 378.0,930.0C373.8,928.2 367.1,928.7 364.0,926.0C360.9,923.3 356.1,915.0 357.0,912.0Z"/>
<path d="M477.1,945.8C477.5,946.5 481.2,948.0 480.6,948.4C480.1,948.8 473.9,948.5 472.2,949.1C470.6,949.7 468.2,953.2 466.5,953.2C464.8,953.2 459.2,949.6 457.7,949.0C456.2,948.5 455.4,949.2 453.7,948.5C452.0,947.7 444.1,943.5 443.2,942.6C442.4,941.8 446.1,941.6 446.4,941.0C446.6,940.4 444.5,938.3 445.3,937.3C446.2,936.4 451.7,933.2 453.8,932.9C455.9,932.6 461.5,934.5 463.3,934.7C465.0,935.0 467.7,934.4 468.9,935.0C470.1,935.6 472.3,938.7 473.2,939.6C474.2,940.4 476.8,941.7 477.2,942.5C477.7,943.2 476.7,945.1 477.1,945.8Z"/>
<path d="M304.3,1003.9C304.4,1005.1 304.3,1008.9 303.7,1009.6C303.0,1010.3 300.0,1009.8 298.8,1009.8C297.6,1009.8 294.5,1009.9 293.5,1009.4C292.5,1008.8 290.2,1006.1 290.2,1005.0C290.2,1003.9 292.4,1001.0 293.3,999.9C294.1,998.8 296.2,995.7 297.4,995.6C298.5,995.6 302.4,998.5 303.2,999.4C304.0,1000.4 304.3,1002.8 304.3,1003.9Z"/>
<path d="M138.8,1046.6C138.0,1048.9 138.0,1054.3 136.9,1056.0C135.9,1057.7 131.1,1060.7 129.8,1061.1C128.4,1061.5 126.6,1060.1 125.3,1059.5C124.0,1058.8 119.2,1057.4 118.6,1055.4C118.0,1053.4 119.8,1044.7 120.2,1042.5C120.6,1040.2 121.1,1037.9 122.1,1036.2C123.2,1034.4 127.9,1028.5 129.2,1027.2C130.6,1025.9 132.5,1024.4 133.6,1025.0C134.6,1025.6 136.9,1031.1 138.1,1032.4C139.2,1033.8 143.7,1034.8 143.7,1036.4C143.8,1038.1 139.6,1044.3 138.8,1046.6Z"/>
<path d="M140.0,1082.0C139.4,1077.5 143.3,1066.8 146.0,1062.0C148.7,1057.2 154.1,1050.9 158.0,1050.0C161.9,1049.1 167.8,1054.2 172.0,1056.0C176.2,1057.8 183.0,1058.7 186.0,1062.0C189.0,1065.3 191.4,1073.5 192.0,1078.0C192.6,1082.5 196.3,1089.9 190.0,1092.0C183.7,1094.1 157.5,1093.5 150.0,1092.0C142.5,1090.5 140.6,1086.5 140.0,1082.0Z"/>
<path d="M55.0,1078.9C54.2,1080.1 53.5,1084.4 52.1,1085.4C50.7,1086.5 45.0,1087.7 43.0,1087.8C41.0,1088.0 37.1,1087.2 35.0,1086.9C32.9,1086.6 25.8,1086.4 25.1,1085.1C24.3,1083.7 29.1,1077.2 28.8,1075.3C28.5,1073.4 22.7,1069.9 22.5,1068.7C22.2,1067.6 25.7,1067.2 26.8,1065.3C27.9,1063.5 30.6,1054.5 32.0,1052.8C33.4,1051.0 37.3,1049.9 39.0,1050.4C40.7,1050.9 45.0,1055.8 46.7,1056.7C48.5,1057.7 52.5,1058.6 54.0,1058.9C55.4,1059.1 58.5,1057.2 59.0,1059.1C59.6,1061.0 59.2,1072.8 58.7,1075.1C58.3,1077.4 55.7,1077.6 55.0,1078.9Z"/>
<path d="M148.2,989.6C147.0,991.0 144.0,994.8 142.7,996.3C141.5,997.8 138.8,1002.6 137.5,1002.6C136.2,1002.6 133.0,997.4 131.6,996.3C130.3,995.1 126.0,994.1 126.1,992.5C126.3,991.0 131.9,984.7 133.0,983.1C134.0,981.5 134.7,979.5 135.3,978.7C136.0,977.8 137.6,976.5 138.9,975.7C140.2,974.9 145.4,971.5 146.6,971.6C147.8,971.6 148.0,974.7 148.8,976.2C149.6,977.7 153.6,982.9 153.5,984.4C153.5,986.0 149.5,988.2 148.2,989.6Z"/>
<path d="M437.0,1006.7C437.3,1008.0 438.5,1010.2 437.6,1010.8C436.7,1011.3 430.9,1011.4 429.4,1011.4C428.0,1011.3 425.8,1011.1 424.9,1010.4C424.1,1009.7 422.4,1006.7 422.3,1005.7C422.1,1004.7 423.0,1002.2 424.0,1001.7C425.1,1001.2 429.8,1001.4 431.1,1001.2C432.4,1001.0 434.7,999.3 435.4,999.9C436.1,1000.6 436.8,1005.5 437.0,1006.7Z"/>
<path d="M300.6,1062.4C300.6,1063.2 298.6,1064.8 297.8,1065.5C297.0,1066.2 295.1,1068.4 294.1,1068.4C293.1,1068.3 290.3,1065.8 289.4,1065.3C288.4,1064.7 285.9,1064.4 285.7,1063.6C285.4,1062.8 286.2,1059.3 287.3,1058.5C288.4,1057.8 294.0,1057.0 295.2,1057.0C296.3,1057.1 296.6,1058.3 297.2,1058.9C297.8,1059.6 300.5,1061.7 300.6,1062.4Z"/>
<path d="M57.4,790.4C57.7,791.3 54.8,794.6 54.1,795.6C53.3,796.6 52.3,798.3 50.8,799.3C49.4,800.3 43.4,803.7 41.5,804.4C39.6,805.1 37.1,804.6 34.8,805.0C32.5,805.5 24.2,807.6 21.5,808.2C18.8,808.8 12.3,810.6 11.6,810.2C10.8,809.7 14.9,805.4 15.1,804.3C15.3,803.3 12.2,802.3 13.4,801.3C14.5,800.3 22.7,796.9 24.6,795.8C26.5,794.6 28.4,791.8 30.0,791.3C31.5,790.7 35.9,791.5 37.8,790.9C39.7,790.4 44.8,786.8 46.4,786.5C48.0,786.1 50.3,787.4 51.6,787.9C52.9,788.3 57.1,789.5 57.4,790.4Z"/>
<path d="M128.5,791.2C129.1,791.8 127.9,793.3 127.2,794.2C126.5,795.1 124.2,798.0 122.5,798.8C120.8,799.6 114.4,801.2 112.7,801.2C111.0,801.3 108.6,799.3 107.7,799.1C106.7,798.8 105.1,799.7 104.5,799.3C103.9,798.9 102.6,796.7 102.6,796.0C102.5,795.2 102.7,793.6 104.0,792.7C105.2,791.9 111.6,789.6 113.3,789.0C114.9,788.4 116.8,787.7 117.8,787.7C118.9,787.6 121.0,788.4 122.2,788.8C123.5,789.3 127.9,790.6 128.5,791.2Z"/>
<path d="M233.5,794.9C233.8,795.6 228.8,796.7 227.4,797.6C226.1,798.4 223.0,801.2 221.9,802.3C220.8,803.4 219.6,806.4 218.0,807.0C216.4,807.7 209.8,808.3 208.0,807.9C206.3,807.4 203.8,804.1 203.1,803.1C202.4,802.1 201.7,800.2 202.0,799.3C202.3,798.4 204.7,796.3 205.6,795.5C206.6,794.7 208.8,793.1 210.3,792.3C211.8,791.5 216.8,788.6 218.5,788.5C220.2,788.5 223.2,791.1 224.9,791.8C226.7,792.6 233.2,794.2 233.5,794.9Z"/>
<path d="M329.6,787.6C329.8,788.7 328.0,792.6 327.6,793.8C327.3,794.9 328.1,796.7 326.4,797.4C324.7,798.2 315.7,799.7 313.0,800.2C310.2,800.8 304.4,802.2 303.0,802.0C301.6,801.9 301.8,799.6 301.2,799.0C300.7,798.3 298.0,797.2 298.4,796.4C298.9,795.5 303.6,792.8 305.2,791.5C306.8,790.2 310.6,786.1 312.1,785.6C313.6,785.0 316.4,786.8 318.0,786.7C319.6,786.6 324.4,784.6 325.8,784.8C327.1,784.9 329.3,786.6 329.6,787.6Z"/>
<path d="M411.7,871.0C411.5,872.3 410.9,875.5 410.6,876.4C410.3,877.3 409.6,878.2 409.3,878.5C409.0,878.9 408.5,879.3 408.2,879.2C407.8,879.1 406.6,878.5 406.1,877.7C405.6,877.0 404.1,874.0 403.8,872.8C403.6,871.5 403.9,868.1 404.1,867.2C404.3,866.2 405.1,865.3 405.5,864.7C405.8,864.0 406.7,861.8 407.1,861.7C407.5,861.6 408.6,863.6 409.2,864.1C409.7,864.5 411.9,864.5 412.2,865.3C412.5,866.1 411.9,869.7 411.7,871.0Z"/>
<path d="M69.7,880.8C69.0,882.0 66.6,885.2 66.0,886.2C65.3,887.2 64.7,889.2 64.2,889.5C63.7,889.7 62.1,888.7 61.5,888.4C60.9,888.2 59.4,888.6 59.1,887.6C58.8,886.5 58.7,880.3 59.0,879.2C59.3,878.0 60.7,878.5 61.4,877.8C62.1,877.0 64.2,873.8 65.0,872.8C65.9,871.8 68.3,869.0 68.7,869.1C69.2,869.2 68.5,873.0 68.9,873.8C69.2,874.5 71.8,875.0 71.9,875.8C72.0,876.7 70.4,879.6 69.7,880.8Z"/>
<path d="M256.5,928.8C256.5,930.0 255.1,933.5 254.5,934.3C254.0,935.1 252.5,935.8 251.8,935.6C251.1,935.3 249.1,933.0 248.6,932.2C248.0,931.3 247.1,929.6 247.1,928.4C247.2,927.2 248.4,923.1 248.9,922.0C249.4,921.0 251.0,919.3 251.6,919.5C252.3,919.7 253.9,922.9 254.5,924.0C255.0,925.1 256.5,927.6 256.5,928.8Z"/>
<path d="M60.5,996.4C60.5,997.7 58.3,1001.5 57.3,1002.4C56.4,1003.2 53.4,1003.8 52.3,1003.6C51.2,1003.4 48.5,1001.3 47.6,1000.6C46.7,999.9 44.5,998.6 44.5,997.5C44.5,996.4 46.5,992.5 47.5,991.5C48.5,990.5 52.2,989.2 53.4,989.2C54.6,989.2 57.0,990.7 57.8,991.5C58.7,992.4 60.6,995.1 60.5,996.4Z"/>
<path d="M318.1,1035.5C318.0,1036.1 317.1,1037.1 316.1,1037.6C315.2,1038.2 311.4,1040.3 310.3,1040.4C309.2,1040.4 306.9,1038.7 306.4,1038.1C305.9,1037.4 305.6,1035.6 305.7,1034.9C305.8,1034.2 307.0,1032.4 307.5,1031.8C308.1,1031.3 309.3,1030.1 310.4,1030.1C311.5,1030.1 316.0,1031.4 316.9,1032.0C317.8,1032.6 318.2,1034.8 318.1,1035.5Z"/>
<path d="M451.2,1046.8C451.0,1047.7 449.8,1048.7 449.1,1049.3C448.5,1050.0 446.3,1051.9 445.4,1052.1C444.4,1052.3 441.9,1051.7 441.3,1051.1C440.6,1050.4 440.0,1047.4 440.1,1046.5C440.2,1045.5 441.3,1043.8 441.9,1043.3C442.5,1042.7 444.4,1041.8 445.3,1041.6C446.3,1041.4 449.6,1041.0 450.3,1041.6C451.0,1042.2 451.3,1045.9 451.2,1046.8Z"/>
<path d="M408.9,1065.0C409.0,1066.0 408.7,1070.7 407.9,1071.5C407.0,1072.3 402.4,1072.3 401.4,1072.1C400.3,1071.9 399.6,1070.3 399.0,1069.5C398.5,1068.7 397.0,1066.1 396.9,1065.2C396.8,1064.2 397.7,1061.8 398.3,1061.3C398.9,1060.8 401.0,1060.9 402.0,1061.1C403.0,1061.2 406.2,1062.5 407.0,1063.0C407.8,1063.4 408.8,1064.0 408.9,1065.0Z"/>
<path d="M542.9,862.4C543.6,863.6 545.9,864.2 546.2,865.5C546.4,866.8 545.4,872.0 544.7,873.5C544.0,874.9 541.6,877.3 540.0,877.9C538.5,878.4 532.9,879.4 531.7,878.5C530.4,877.7 530.0,871.7 529.3,870.4C528.6,869.0 526.2,867.8 525.9,866.7C525.6,865.5 526.7,862.1 527.0,860.6C527.3,859.1 527.5,854.7 528.3,853.8C529.1,852.8 532.8,852.0 534.2,852.2C535.6,852.3 539.4,853.6 540.4,854.8C541.5,856.0 542.2,861.1 542.9,862.4Z"/>
<path d="M518.4,864.6C518.5,865.8 517.8,867.6 517.2,868.2C516.7,868.7 514.6,869.3 514.0,869.3C513.4,869.4 512.6,869.3 512.1,868.6C511.6,867.9 510.0,864.6 509.9,863.3C509.7,862.0 510.3,858.7 510.8,857.8C511.3,856.9 513.6,855.4 514.2,855.5C514.9,855.5 515.7,857.3 516.2,858.4C516.7,859.4 518.3,863.5 518.4,864.6Z"/>
<path d="M514.3,872.9C514.9,873.5 513.6,876.7 512.9,877.8C512.2,878.9 509.8,881.8 508.3,882.7C506.8,883.5 501.7,884.6 499.8,885.3C497.9,886.1 493.5,888.6 492.2,888.7C490.9,888.7 489.2,886.5 488.4,885.9C487.6,885.2 485.3,884.2 485.5,883.1C485.8,881.9 489.1,877.3 490.4,875.9C491.7,874.6 494.8,872.0 496.4,871.5C498.0,871.0 502.8,871.5 504.1,871.6C505.4,871.7 506.4,872.3 507.6,872.4C508.8,872.5 513.6,872.2 514.3,872.9Z"/>
<path d="M573.4,912.8C573.3,913.9 573.6,914.7 573.2,915.5C572.9,916.2 571.1,919.0 570.3,919.4C569.4,919.9 567.3,919.6 566.0,919.5C564.6,919.4 560.0,919.4 559.0,918.8C558.0,918.2 557.5,915.3 557.4,914.3C557.2,913.3 557.3,911.2 557.4,910.1C557.6,909.0 557.8,905.6 558.6,904.9C559.4,904.1 563.5,904.0 564.6,903.9C565.8,903.9 567.4,904.1 568.5,904.4C569.7,904.7 574.0,905.5 574.5,906.5C575.1,907.5 573.6,911.8 573.4,912.8Z"/>
<path d="M541.1,925.6C542.0,926.7 544.6,929.7 544.6,930.6C544.5,931.5 541.3,932.8 540.5,933.3C539.7,933.8 538.8,934.7 538.0,935.1C537.1,935.5 534.4,936.6 533.4,936.5C532.4,936.4 530.5,934.8 529.6,934.1C528.7,933.5 526.2,932.3 525.8,931.2C525.4,930.1 525.7,925.5 526.2,924.6C526.6,923.7 528.5,923.7 529.3,923.1C530.1,922.5 532.2,919.6 533.1,919.3C534.0,919.0 536.3,919.9 537.2,920.6C538.2,921.4 540.3,924.4 541.1,925.6Z"/>
<path d="M553.0,948.8C552.3,949.4 551.5,951.0 551.0,951.6C550.5,952.3 549.9,954.3 548.8,954.2C547.7,954.0 542.9,950.9 541.8,950.4C540.6,950.0 539.6,951.1 538.9,950.7C538.3,950.2 536.4,947.3 536.4,946.4C536.3,945.5 537.7,943.8 538.2,943.0C538.8,942.2 539.9,939.6 540.9,939.4C541.9,939.1 545.8,940.8 547.0,941.1C548.2,941.3 549.7,940.8 550.9,941.5C552.1,942.2 557.0,945.9 557.2,946.8C557.5,947.6 553.7,948.2 553.0,948.8Z"/>
<path d="M510.9,981.9C510.2,982.7 506.2,980.7 504.6,981.0C503.1,981.2 498.9,984.0 497.4,984.1C495.8,984.2 492.6,982.9 491.3,981.7C490.0,980.5 486.0,975.7 486.0,973.9C486.0,972.1 490.7,968.0 491.5,966.4C492.3,964.9 491.8,961.8 492.6,960.5C493.4,959.3 496.2,955.9 498.2,955.8C500.2,955.7 507.8,959.1 509.7,959.9C511.5,960.7 514.0,961.1 514.1,962.8C514.2,964.5 511.1,972.4 510.7,974.6C510.3,976.9 511.6,981.2 510.9,981.9Z"/>
<path d="M546.9,981.8C546.9,982.7 545.6,984.2 544.9,985.1C544.1,985.9 541.4,989.1 540.5,989.2C539.5,989.4 537.3,987.5 536.9,986.6C536.4,985.6 536.6,982.0 536.6,980.8C536.5,979.7 536.0,977.7 536.6,977.0C537.2,976.2 540.9,974.0 541.9,974.0C542.9,974.1 544.4,976.6 544.9,977.5C545.5,978.4 546.9,980.9 546.9,981.8Z"/>
<path d="M591.7,960.9C591.9,961.8 591.0,964.6 590.4,965.4C589.7,966.3 587.3,968.3 586.5,968.3C585.7,968.2 583.8,966.2 583.3,965.3C582.7,964.4 581.8,961.5 581.9,960.6C581.9,959.6 582.9,957.5 583.5,957.0C584.1,956.4 586.1,955.6 586.8,955.7C587.5,955.8 588.8,957.2 589.4,957.8C589.9,958.4 591.6,960.1 591.7,960.9Z"/>
<path d="M552.8,1057.9C552.6,1058.9 550.9,1060.8 549.8,1061.7C548.7,1062.6 544.7,1064.9 543.5,1065.3C542.3,1065.7 540.2,1065.6 539.7,1065.1C539.3,1064.6 539.8,1062.1 539.6,1060.8C539.5,1059.6 538.3,1055.4 538.3,1054.4C538.4,1053.3 539.5,1052.3 540.2,1051.6C540.9,1050.9 543.6,1049.0 544.3,1048.1C545.0,1047.3 545.4,1044.6 546.3,1044.4C547.1,1044.3 551.2,1046.1 551.9,1047.1C552.5,1048.1 552.0,1051.7 552.1,1053.0C552.2,1054.2 553.1,1056.9 552.8,1057.9Z"/>
<path d="M620.1,1064.7C620.9,1067.0 619.3,1077.1 618.8,1078.8C618.3,1080.4 616.8,1078.0 615.9,1078.7C615.0,1079.4 612.3,1083.7 611.2,1084.6C610.0,1085.6 607.0,1086.0 606.1,1086.6C605.1,1087.3 604.4,1090.9 603.1,1090.0C601.8,1089.1 596.3,1080.7 594.9,1079.1C593.5,1077.4 591.6,1078.0 591.0,1076.0C590.5,1074.0 590.3,1064.1 590.4,1061.9C590.4,1059.8 590.4,1058.4 591.4,1057.6C592.4,1056.9 597.7,1056.3 599.0,1055.6C600.2,1054.8 601.2,1051.5 602.2,1051.1C603.2,1050.7 606.6,1051.0 607.7,1052.1C608.8,1053.1 610.2,1058.3 611.7,1059.8C613.1,1061.3 619.3,1062.5 620.1,1064.7Z"/>
<path d="M512.0,1030.6C512.0,1031.6 511.4,1033.1 510.8,1033.8C510.2,1034.6 507.8,1036.7 507.0,1037.0C506.2,1037.2 504.4,1036.5 503.8,1035.9C503.1,1035.2 501.4,1032.8 501.5,1031.7C501.6,1030.6 504.0,1026.7 504.6,1026.1C505.2,1025.5 505.9,1026.4 506.7,1026.3C507.5,1026.2 510.6,1024.7 511.2,1025.2C511.9,1025.7 512.1,1029.6 512.0,1030.6Z"/>
<path d="M487.7,864.4C487.6,866.2 487.2,869.8 486.9,871.1C486.6,872.4 485.5,874.9 485.1,875.6C484.7,876.2 484.0,876.9 483.5,876.6C482.9,876.2 480.7,873.8 480.4,872.7C480.1,871.6 481.0,868.5 480.9,867.3C480.8,866.1 479.7,863.6 479.7,862.4C479.7,861.1 480.5,857.4 481.0,856.6C481.5,855.7 483.2,855.6 483.7,855.1C484.2,854.5 485.0,851.6 485.4,851.6C485.9,851.7 487.2,853.9 487.5,855.4C487.8,856.9 487.7,862.5 487.7,864.4Z"/>
<path d="M612.6,878.2C612.5,879.4 611.3,882.8 610.5,883.3C609.6,883.8 606.3,882.9 605.4,882.6C604.4,882.2 602.6,880.8 602.1,880.1C601.7,879.4 601.6,877.4 601.5,876.4C601.4,875.3 601.0,871.8 601.5,871.2C602.1,870.6 605.3,871.1 606.4,871.2C607.5,871.4 610.3,871.9 611.0,872.7C611.7,873.6 612.6,876.9 612.6,878.2Z"/>
<path d="M481.3,825.8C481.4,826.7 481.0,829.4 480.5,830.1C479.9,830.7 477.7,831.5 476.6,831.4C475.5,831.4 471.9,830.3 471.0,829.6C470.1,829.0 468.4,826.9 468.7,826.1C468.9,825.3 472.4,823.3 473.1,822.6C473.8,821.9 474.1,819.8 474.9,819.8C475.6,819.8 478.4,822.0 479.2,822.7C479.9,823.4 481.1,824.9 481.3,825.8Z"/>
<path d="M1310.0,850.0C1310.3,846.1 1313.6,840.7 1316.0,838.0C1318.4,835.3 1323.0,832.0 1326.0,832.0C1329.0,832.0 1334.2,835.0 1336.0,838.0C1337.8,841.0 1338.3,847.8 1338.0,852.0C1337.7,856.2 1336.4,863.0 1334.0,866.0C1331.6,869.0 1325.0,872.3 1322.0,872.0C1319.0,871.7 1315.8,867.3 1314.0,864.0C1312.2,860.7 1309.7,853.9 1310.0,850.0Z"/>
<path d="M1372.0,880.0C1372.3,876.4 1376.7,869.0 1380.0,866.0C1383.3,863.0 1390.1,860.0 1394.0,860.0C1397.9,860.0 1403.6,863.0 1406.0,866.0C1408.4,869.0 1410.9,876.1 1410.0,880.0C1409.1,883.9 1403.6,889.6 1400.0,892.0C1396.4,894.4 1389.3,896.3 1386.0,896.0C1382.7,895.7 1380.1,892.4 1378.0,890.0C1375.9,887.6 1371.7,883.6 1372.0,880.0Z"/>
<path d="M1436.6,859.2C1436.8,860.0 1433.2,863.9 1432.5,864.8C1431.9,865.7 1432.3,866.2 1431.2,866.8C1430.1,867.5 1424.9,870.4 1423.0,870.8C1421.1,871.2 1415.9,870.9 1414.9,870.5C1414.0,870.1 1415.7,868.4 1415.0,867.6C1414.3,866.8 1409.8,864.4 1409.1,863.6C1408.5,862.9 1408.2,861.8 1409.5,861.2C1410.8,860.5 1418.4,858.3 1420.4,857.8C1422.3,857.4 1425.3,857.3 1426.6,857.4C1427.8,857.4 1429.8,858.1 1431.0,858.3C1432.2,858.6 1436.4,858.5 1436.6,859.2Z"/>
<path d="M1200.0,1040.0C1199.7,1035.2 1202.5,1025.4 1204.0,1020.0C1205.5,1014.6 1207.3,1007.6 1210.0,1004.0C1212.7,1000.4 1217.8,996.6 1222.0,996.0C1226.2,995.4 1234.1,1000.6 1238.0,1000.0C1241.9,999.4 1245.3,992.3 1248.0,992.0C1250.7,991.7 1255.4,995.0 1256.0,998.0C1256.6,1001.0 1251.4,1008.4 1252.0,1012.0C1252.6,1015.6 1257.3,1019.3 1260.0,1022.0C1262.7,1024.7 1269.7,1027.3 1270.0,1030.0C1270.3,1032.7 1265.0,1037.6 1262.0,1040.0C1259.0,1042.4 1252.4,1043.3 1250.0,1046.0C1247.6,1048.7 1248.7,1055.6 1246.0,1058.0C1243.3,1060.4 1236.5,1062.0 1232.0,1062.0C1227.5,1062.0 1219.9,1059.5 1216.0,1058.0C1212.1,1056.5 1208.4,1054.7 1206.0,1052.0C1203.6,1049.3 1200.3,1044.8 1200.0,1040.0Z"/>
<path d="M1252.0,1010.0C1251.4,1005.8 1255.9,999.0 1258.0,996.0C1260.1,993.0 1263.9,990.0 1266.0,990.0C1268.1,990.0 1271.7,992.7 1272.0,996.0C1272.3,999.3 1269.5,1007.8 1268.0,1012.0C1266.5,1016.2 1264.4,1024.3 1262.0,1024.0C1259.6,1023.7 1252.6,1014.2 1252.0,1010.0Z"/>
<path d="M1350.9,1007.0C1349.8,1009.5 1349.1,1014.8 1348.1,1016.3C1347.0,1017.8 1343.3,1018.6 1342.0,1019.7C1340.8,1020.7 1338.2,1025.1 1337.7,1025.3C1337.1,1025.5 1337.3,1022.5 1337.4,1021.4C1337.5,1020.2 1338.0,1016.8 1338.4,1015.2C1338.8,1013.6 1340.1,1009.0 1340.6,1007.5C1341.1,1006.1 1341.9,1004.7 1342.5,1002.9C1343.1,1001.1 1344.7,994.3 1345.8,992.5C1346.8,990.6 1350.3,987.9 1351.6,986.9C1353.0,985.8 1356.5,983.6 1357.4,983.4C1358.4,983.2 1359.6,984.0 1359.6,984.9C1359.6,985.9 1357.7,990.2 1357.5,991.4C1357.2,992.6 1358.0,993.4 1357.2,995.2C1356.5,997.0 1351.9,1004.6 1350.9,1007.0Z"/>
<path d="M1126.2,999.4C1126.3,1000.7 1125.7,1000.4 1125.1,1001.4C1124.4,1002.5 1121.6,1007.9 1120.5,1008.6C1119.4,1009.3 1116.4,1007.6 1115.6,1007.4C1114.9,1007.2 1114.7,1007.3 1114.0,1006.6C1113.3,1005.8 1110.1,1002.4 1109.5,1000.9C1108.9,999.5 1108.4,995.4 1108.8,994.0C1109.2,992.6 1112.1,990.3 1113.1,989.3C1114.0,988.2 1116.2,985.2 1117.1,984.8C1118.0,984.4 1120.2,985.1 1121.0,985.7C1121.8,986.3 1123.5,988.6 1124.1,990.2C1124.7,991.8 1126.1,998.1 1126.2,999.4Z"/>
<path d="M1151.5,1014.6C1151.6,1015.8 1150.9,1017.9 1150.2,1018.4C1149.5,1019.0 1146.4,1019.3 1145.5,1019.1C1144.6,1018.9 1142.8,1017.5 1142.3,1016.8C1141.8,1016.1 1141.2,1014.1 1141.1,1013.0C1141.0,1012.0 1141.0,1009.2 1141.5,1008.2C1141.9,1007.1 1144.0,1003.9 1145.0,1003.9C1145.9,1003.9 1148.8,1007.1 1149.6,1008.4C1150.3,1009.6 1151.4,1013.5 1151.5,1014.6Z"/>
<path d="M1143.7,1046.1C1143.9,1047.0 1142.6,1048.2 1142.0,1048.6C1141.4,1049.0 1139.7,1049.5 1138.7,1049.5C1137.7,1049.5 1133.9,1049.2 1133.3,1048.6C1132.7,1047.9 1133.3,1044.9 1133.4,1044.1C1133.5,1043.4 1134.0,1042.7 1134.5,1042.4C1135.0,1042.0 1137.2,1041.3 1137.9,1041.1C1138.6,1041.0 1140.1,1040.5 1140.8,1041.1C1141.5,1041.7 1143.6,1045.2 1143.7,1046.1Z"/>
<path d="M1232.7,1059.6C1232.6,1060.4 1230.5,1062.5 1229.9,1063.1C1229.3,1063.7 1228.3,1064.9 1227.6,1065.0C1226.8,1065.1 1223.8,1064.7 1223.2,1064.0C1222.6,1063.4 1222.1,1060.5 1222.1,1059.7C1222.1,1058.9 1222.7,1057.7 1223.4,1057.3C1224.1,1056.8 1227.3,1055.9 1228.2,1055.8C1229.0,1055.7 1230.1,1055.9 1230.7,1056.3C1231.2,1056.8 1232.8,1058.8 1232.7,1059.6Z"/>
<path d="M1423.4,1038.5C1423.2,1039.5 1421.8,1041.9 1421.2,1042.6C1420.6,1043.3 1418.8,1044.3 1417.9,1044.6C1417.1,1044.9 1414.6,1045.4 1413.9,1044.9C1413.2,1044.4 1412.1,1041.3 1412.1,1040.0C1412.0,1038.8 1413.0,1035.5 1413.5,1034.4C1414.1,1033.3 1415.9,1030.9 1416.9,1030.8C1418.0,1030.7 1421.7,1032.4 1422.4,1033.3C1423.2,1034.2 1423.5,1037.4 1423.4,1038.5Z"/>
<path d="M1283.8,1077.0C1283.8,1078.2 1282.5,1079.6 1281.7,1080.3C1280.8,1081.0 1277.8,1082.7 1276.6,1083.0C1275.3,1083.3 1272.1,1082.6 1271.0,1082.7C1269.9,1082.8 1267.7,1084.3 1267.0,1083.9C1266.2,1083.4 1265.3,1080.3 1264.7,1078.9C1264.1,1077.6 1261.9,1073.3 1262.1,1072.3C1262.3,1071.3 1265.5,1071.3 1266.6,1070.4C1267.6,1069.6 1269.5,1065.2 1270.8,1065.1C1272.2,1064.9 1277.0,1068.6 1278.2,1069.2C1279.5,1069.8 1281.2,1069.2 1281.9,1070.1C1282.5,1071.0 1283.8,1075.8 1283.8,1077.0Z"/>
<path d="M1746.2,918.6C1746.4,919.6 1745.8,922.8 1745.4,923.7C1744.9,924.6 1742.9,926.5 1742.1,926.5C1741.3,926.5 1739.0,924.8 1738.4,923.8C1737.8,922.8 1737.1,919.0 1737.0,917.7C1736.9,916.5 1737.1,914.1 1737.6,913.3C1738.1,912.5 1740.6,910.5 1741.3,910.7C1742.0,910.9 1743.0,913.9 1743.6,914.8C1744.2,915.7 1745.9,917.5 1746.2,918.6Z"/>
<path d="M1917.5,844.9C1917.2,846.1 1915.2,849.3 1914.3,850.3C1913.3,851.2 1910.3,853.2 1909.2,853.1C1908.1,853.0 1905.6,850.4 1904.7,849.5C1903.8,848.5 1901.4,846.4 1901.5,845.2C1901.6,843.9 1904.5,839.6 1905.7,838.5C1906.8,837.5 1909.9,836.3 1911.2,836.4C1912.5,836.6 1916.3,838.9 1917.0,839.9C1917.8,840.9 1917.8,843.7 1917.5,844.9Z"/>
<path d="M1622.2,1073.4C1622.5,1075.7 1623.1,1081.1 1622.7,1082.2C1622.2,1083.3 1619.5,1082.5 1618.5,1082.9C1617.6,1083.3 1615.5,1085.3 1614.5,1085.7C1613.4,1086.1 1610.7,1085.9 1609.4,1086.1C1608.1,1086.3 1604.1,1088.5 1603.4,1087.8C1602.7,1087.2 1603.8,1082.2 1603.2,1080.5C1602.5,1078.9 1598.4,1075.9 1598.0,1073.4C1597.7,1070.9 1599.6,1060.9 1600.3,1059.2C1600.9,1057.4 1602.5,1059.4 1603.7,1058.2C1604.8,1057.1 1609.0,1049.9 1610.1,1049.1C1611.2,1048.3 1612.2,1051.0 1613.3,1051.6C1614.4,1052.2 1618.6,1052.8 1619.4,1054.1C1620.2,1055.4 1619.7,1060.7 1620.1,1063.0C1620.4,1065.2 1621.9,1071.2 1622.2,1073.4Z"/>
<path d="M1729.3,1065.7C1729.5,1067.4 1729.7,1070.3 1729.0,1071.2C1728.2,1072.0 1724.2,1072.4 1723.1,1072.9C1722.0,1073.4 1720.5,1075.2 1719.4,1075.1C1718.3,1075.0 1714.9,1072.8 1713.7,1071.8C1712.5,1070.8 1709.9,1068.2 1709.2,1066.8C1708.5,1065.4 1707.4,1061.2 1707.4,1060.0C1707.5,1058.8 1708.3,1057.5 1709.7,1056.5C1711.0,1055.4 1717.7,1051.1 1719.1,1051.0C1720.5,1050.9 1720.6,1054.6 1721.6,1055.3C1722.6,1056.0 1726.4,1055.8 1727.3,1057.0C1728.2,1058.2 1729.1,1064.1 1729.3,1065.7Z"/>
<path d="M1749.6,1067.5C1749.8,1068.6 1750.3,1071.8 1749.8,1072.7C1749.3,1073.6 1746.5,1075.4 1745.4,1075.5C1744.3,1075.5 1741.4,1073.6 1740.7,1072.8C1740.0,1071.9 1739.4,1069.7 1739.5,1068.3C1739.6,1066.9 1741.1,1061.2 1741.9,1060.5C1742.6,1059.7 1745.5,1061.6 1746.2,1062.0C1747.0,1062.3 1748.0,1062.8 1748.4,1063.5C1748.8,1064.1 1749.5,1066.4 1749.6,1067.5Z"/>
<path d="M1507.0,1029.2C1506.8,1030.3 1506.8,1033.3 1506.5,1034.2C1506.1,1035.1 1504.7,1036.9 1504.2,1037.1C1503.6,1037.3 1502.3,1036.6 1501.7,1035.9C1501.1,1035.2 1499.2,1032.6 1499.2,1031.4C1499.2,1030.2 1501.1,1026.6 1501.7,1025.7C1502.2,1024.8 1503.1,1023.9 1503.8,1023.7C1504.5,1023.6 1507.3,1023.9 1507.7,1024.6C1508.1,1025.2 1507.1,1028.1 1507.0,1029.2Z"/>
<path d="M1463.9,1044.8C1463.8,1045.5 1461.9,1046.7 1461.4,1047.2C1460.9,1047.8 1459.9,1049.7 1459.3,1049.7C1458.6,1049.6 1456.5,1047.8 1456.0,1047.1C1455.5,1046.3 1455.1,1043.8 1455.2,1043.1C1455.2,1042.3 1455.9,1041.1 1456.4,1040.7C1456.8,1040.2 1458.1,1039.1 1458.8,1039.1C1459.5,1039.1 1461.7,1040.0 1462.3,1040.7C1462.9,1041.4 1464.0,1044.0 1463.9,1044.8Z"/>
<path d="M1449.6,1044.4C1449.7,1045.5 1450.6,1049.8 1450.3,1050.7C1449.9,1051.6 1447.0,1051.6 1446.4,1052.1C1445.8,1052.6 1445.8,1054.8 1445.3,1054.9C1444.7,1055.1 1442.4,1053.9 1441.8,1053.3C1441.2,1052.7 1440.3,1051.2 1440.1,1049.9C1439.9,1048.6 1440.0,1043.9 1440.3,1042.5C1440.7,1041.2 1442.7,1039.2 1443.1,1038.6C1443.5,1037.9 1443.3,1037.0 1443.7,1036.6C1444.2,1036.2 1446.1,1034.8 1446.7,1035.4C1447.4,1036.0 1448.8,1040.4 1449.1,1041.5C1449.5,1042.5 1449.5,1043.3 1449.6,1044.4Z"/>
<path d="M1462.1,1076.4C1462.3,1077.4 1462.4,1079.0 1461.8,1079.6C1461.1,1080.3 1457.7,1081.5 1456.8,1081.8C1455.8,1082.2 1454.4,1082.8 1453.6,1082.9C1452.8,1083.0 1451.0,1083.4 1450.1,1082.7C1449.2,1082.0 1445.7,1078.0 1445.5,1076.9C1445.4,1075.8 1448.2,1074.2 1448.7,1073.3C1449.1,1072.4 1449.2,1069.8 1449.7,1069.1C1450.1,1068.5 1451.6,1067.9 1452.3,1067.6C1453.0,1067.3 1454.8,1066.1 1455.6,1066.6C1456.5,1067.0 1459.0,1070.1 1459.7,1071.2C1460.5,1072.4 1461.8,1075.4 1462.1,1076.4Z"/>
<path d="M1542.8,1069.1C1542.8,1069.8 1542.7,1071.6 1542.3,1072.0C1541.8,1072.4 1540.0,1072.5 1539.3,1072.5C1538.5,1072.4 1536.6,1071.7 1536.1,1071.3C1535.6,1071.0 1534.9,1070.0 1534.9,1069.4C1534.9,1068.9 1535.3,1066.7 1535.9,1066.3C1536.4,1065.9 1538.8,1066.0 1539.5,1066.0C1540.3,1066.0 1542.0,1065.9 1542.4,1066.3C1542.8,1066.6 1542.8,1068.5 1542.8,1069.1Z"/>
<path d="M1565.2,1073.2C1565.2,1073.9 1564.8,1074.6 1564.3,1075.1C1563.9,1075.6 1562.0,1077.5 1561.4,1077.7C1560.8,1077.9 1559.6,1077.3 1559.0,1076.6C1558.4,1076.0 1556.4,1073.2 1556.4,1072.1C1556.3,1071.1 1558.0,1067.9 1558.6,1067.3C1559.1,1066.8 1560.2,1067.2 1560.9,1067.5C1561.6,1067.7 1563.9,1068.9 1564.4,1069.5C1564.9,1070.2 1565.2,1072.6 1565.2,1073.2Z"/>
<path d="M1551.8,912.5C1551.9,913.1 1551.3,914.5 1550.7,915.0C1550.0,915.5 1547.4,916.9 1546.4,916.9C1545.5,916.8 1543.2,915.3 1542.8,914.7C1542.4,914.2 1542.9,912.7 1543.1,912.0C1543.2,911.3 1544.0,909.4 1544.4,909.0C1544.8,908.7 1545.9,908.7 1546.5,908.7C1547.1,908.8 1548.8,909.1 1549.5,909.5C1550.1,910.0 1551.7,911.9 1551.8,912.5Z"/>
</g></defs>
<use href="#fr" fill="#c4c5ad"/>
<defs><path id="hz" d="M805.0,120.0C791.0,132.0 810.0,158.0 815.0,180.0C820.0,202.0 829.0,212.0 830.0,230.0C831.0,248.0 825.0,254.0 820.0,270.0C815.0,286.0 809.5,294.0 805.0,310.0C800.5,326.0 798.5,334.0 797.5,350.0C796.5,366.0 796.5,374.0 800.0,390.0C803.5,406.0 808.0,414.0 815.0,430.0C822.0,446.0 827.0,456.0 835.0,470.0C843.0,484.0 848.0,489.0 855.0,500.0C862.0,511.0 863.6,514.0 870.0,525.0C876.4,536.0 881.0,543.0 887.0,555.0C893.0,567.0 896.4,574.0 900.0,585.0C903.6,596.0 905.0,600.0 905.0,610.0C905.0,620.0 903.0,624.6 900.0,635.0C897.0,645.4 895.6,650.0 890.0,662.0C884.4,674.0 881.2,683.2 872.0,695.0C862.8,706.8 858.2,702.4 844.0,721.0C829.8,739.6 817.0,763.6 801.0,788.0C785.0,812.4 778.0,824.6 764.0,843.0C750.0,861.4 745.6,864.6 731.0,880.0C716.4,895.4 705.2,907.0 691.0,920.0C676.8,933.0 669.0,937.4 660.0,945.0C651.0,952.6 649.8,952.0 646.0,958.0C642.2,964.0 642.0,964.6 641.0,975.0C640.0,985.4 641.0,995.0 641.0,1010.0C641.0,1025.0 641.0,1032.0 641.0,1050.0C641.0,1068.0 608.8,1090.0 641.0,1100.0C673.2,1110.0 769.0,1108.0 802.0,1100.0C835.0,1092.0 803.4,1072.0 806.0,1060.0C808.6,1048.0 806.2,1048.4 815.0,1040.0C823.8,1031.6 833.0,1028.0 850.0,1018.0C867.0,1008.0 882.2,1006.6 900.0,990.0C917.8,973.4 924.0,958.2 939.0,935.0C954.0,911.8 964.8,893.0 975.0,874.0C985.2,855.0 983.8,855.8 990.0,840.0C996.2,824.2 1001.2,819.0 1006.0,795.0C1010.8,771.0 1011.4,746.8 1014.0,720.0C1016.6,693.2 1017.0,676.8 1019.0,661.0C1021.0,645.2 1021.8,649.8 1024.0,641.0C1026.2,632.2 1028.2,626.6 1030.0,617.0C1031.8,607.4 1032.8,601.6 1033.0,593.0C1033.2,584.4 1032.8,583.0 1031.0,574.0C1029.2,565.0 1027.2,558.6 1024.0,548.0C1020.8,537.4 1018.4,532.2 1015.0,521.0C1011.6,509.8 1010.0,503.6 1007.0,492.0C1004.0,480.4 1003.0,473.6 1000.0,463.0C997.0,452.4 995.6,447.6 992.0,439.0C988.4,430.4 986.0,429.6 982.0,420.0C978.0,410.4 976.4,400.6 972.0,391.0C967.6,381.4 966.4,379.2 960.0,372.0C953.6,364.8 949.0,363.4 940.0,355.0C931.0,346.6 924.0,340.0 915.0,330.0C906.0,320.0 900.5,314.0 895.0,305.0C889.5,296.0 888.5,294.0 887.5,285.0C886.5,276.0 887.0,271.0 890.0,260.0C893.0,249.0 900.5,243.0 902.5,230.0C904.5,217.0 901.5,209.0 900.0,195.0C898.5,181.0 898.0,175.0 895.0,160.0C892.0,145.0 903.0,128.0 885.0,120.0C867.0,112.0 819.0,108.0 805.0,120.0Z"/></defs>
<use href="#hz" fill="url(#hat)" stroke="#a3a3a8" stroke-width="1.2"/>
<g fill="#a6c0d5">
<path d="M802.5,144.8C802.4,145.9 800.5,147.7 799.1,148.5C797.7,149.3 792.4,151.6 790.7,151.5C789.0,151.3 785.6,148.6 784.5,147.6C783.5,146.6 781.5,143.8 781.6,142.9C781.7,141.9 784.5,139.9 785.6,139.3C786.8,138.6 789.9,137.2 791.5,137.2C793.2,137.3 798.4,138.9 799.7,139.8C801.0,140.7 802.6,143.8 802.5,144.8Z"/>
<path d="M730.0,215.8C729.8,216.5 728.4,219.0 727.6,219.6C726.9,220.2 724.3,221.0 723.6,221.0C722.9,221.0 721.9,220.1 721.4,219.6C721.0,219.1 719.5,217.5 719.5,216.8C719.4,216.1 720.9,214.0 721.3,213.5C721.8,212.9 722.6,212.0 723.5,212.0C724.5,212.0 729.0,213.2 729.8,213.6C730.5,214.1 730.3,215.1 730.0,215.8Z"/>
<path d="M1008.3,308.5C1008.1,309.2 1005.9,310.2 1005.0,310.4C1004.1,310.6 1001.4,310.5 1000.6,310.3C999.8,310.2 998.5,309.5 998.1,308.8C997.8,308.2 997.2,305.3 997.5,304.4C997.9,303.5 1000.3,301.9 1001.1,301.4C1002.0,301.0 1004.0,300.5 1004.7,300.8C1005.4,301.0 1006.6,302.8 1007.0,303.7C1007.5,304.6 1008.6,307.7 1008.3,308.5Z"/>
<path d="M1263.1,350.9C1263.2,351.7 1263.3,353.0 1262.7,353.5C1262.2,354.1 1259.0,355.7 1258.2,355.7C1257.4,355.6 1256.5,353.6 1256.1,353.0C1255.6,352.3 1254.5,350.9 1254.4,350.2C1254.4,349.5 1255.1,347.6 1255.6,347.0C1256.2,346.4 1258.1,345.0 1258.8,345.0C1259.6,344.9 1261.4,346.2 1261.9,346.9C1262.4,347.6 1263.0,350.2 1263.1,350.9Z"/>
<path d="M1310.7,364.1C1309.9,365.9 1306.2,371.2 1304.9,372.2C1303.6,373.2 1300.6,373.4 1299.6,372.7C1298.7,372.0 1296.9,368.0 1296.7,366.3C1296.5,364.6 1297.1,359.8 1297.7,358.2C1298.3,356.6 1300.8,353.9 1301.9,352.8C1303.1,351.8 1306.4,348.7 1307.6,349.2C1308.8,349.7 1311.7,355.3 1312.0,357.0C1312.4,358.7 1311.6,362.4 1310.7,364.1Z"/>
<path d="M1436.4,444.6C1437.1,445.4 1436.6,448.0 1436.0,448.8C1435.5,449.6 1433.2,451.2 1432.0,451.7C1430.8,452.1 1426.6,452.8 1425.6,452.9C1424.5,453.0 1423.3,453.1 1422.9,452.3C1422.5,451.6 1421.4,447.8 1421.8,446.7C1422.3,445.6 1425.8,443.5 1426.8,443.0C1427.8,442.4 1429.2,441.7 1430.3,441.9C1431.4,442.1 1435.7,443.8 1436.4,444.6Z"/>
<path d="M1190.3,551.5C1190.7,552.8 1191.0,555.6 1190.7,556.7C1190.5,557.7 1188.9,560.3 1188.0,560.5C1187.1,560.7 1184.0,559.0 1183.1,558.3C1182.2,557.7 1180.7,555.9 1180.2,554.8C1179.7,553.8 1178.5,550.6 1178.9,549.4C1179.2,548.2 1182.3,545.1 1183.3,544.7C1184.4,544.2 1187.0,544.7 1187.8,545.5C1188.6,546.3 1190.0,550.2 1190.3,551.5Z"/>
<path d="M1310.7,552.6C1310.8,553.9 1310.0,558.0 1308.6,558.9C1307.2,559.8 1300.4,560.4 1298.6,560.3C1296.8,560.3 1294.5,559.2 1293.4,558.2C1292.3,557.3 1289.4,553.7 1289.3,552.4C1289.3,551.2 1291.6,548.0 1293.1,547.2C1294.5,546.4 1300.0,545.7 1301.7,545.8C1303.4,545.9 1306.5,547.1 1307.6,547.9C1308.6,548.7 1310.6,551.3 1310.7,552.6Z"/>
<path d="M1096.5,584.9C1096.4,585.7 1095.4,588.4 1094.7,589.1C1094.0,589.7 1091.4,590.5 1090.7,590.5C1090.1,590.5 1089.6,589.6 1089.1,588.9C1088.6,588.2 1086.6,585.4 1086.6,584.4C1086.6,583.5 1088.3,581.2 1088.9,580.7C1089.6,580.3 1091.3,580.4 1092.1,580.6C1092.8,580.8 1094.7,581.7 1095.2,582.2C1095.8,582.7 1096.6,584.1 1096.5,584.9Z"/>
<path d="M1535.4,380.4C1535.6,381.8 1533.8,385.0 1532.4,386.0C1531.1,387.0 1525.4,388.8 1523.9,388.8C1522.3,388.8 1520.6,387.1 1519.3,386.0C1518.1,384.8 1513.6,380.6 1513.4,379.1C1513.3,377.6 1516.4,374.1 1518.0,373.3C1519.6,372.4 1525.5,371.7 1527.0,371.8C1528.5,371.9 1530.0,373.2 1531.0,374.2C1532.0,375.2 1535.2,379.0 1535.4,380.4Z"/>
<path d="M1588.6,380.4C1588.3,382.7 1584.0,390.1 1582.9,391.2C1581.7,392.3 1580.1,390.7 1578.7,390.1C1577.4,389.4 1572.3,387.0 1571.4,385.5C1570.4,384.0 1570.1,379.0 1570.3,377.3C1570.4,375.5 1571.6,371.7 1572.7,370.4C1573.9,369.1 1578.4,366.2 1579.9,366.2C1581.4,366.2 1584.5,369.1 1585.5,370.8C1586.6,372.4 1588.9,378.0 1588.6,380.4Z"/>
<path d="M1498.5,402.6C1498.6,403.9 1497.6,406.3 1496.8,407.2C1496.0,408.1 1492.7,409.9 1491.3,410.2C1489.9,410.4 1485.9,410.2 1484.8,409.3C1483.7,408.3 1482.0,403.3 1481.8,402.0C1481.7,400.7 1482.2,399.1 1483.4,398.4C1484.5,397.7 1490.2,396.1 1491.7,395.9C1493.2,395.6 1495.4,395.9 1496.2,396.6C1496.9,397.4 1498.4,401.4 1498.5,402.6Z"/>
<path d="M1512.4,407.8C1512.4,409.5 1510.6,414.6 1509.7,415.9C1508.8,417.1 1505.8,418.3 1504.6,418.3C1503.4,418.3 1500.2,417.4 1499.1,416.0C1498.0,414.7 1495.4,408.6 1495.3,406.8C1495.2,405.0 1497.7,401.5 1498.6,400.8C1499.5,400.1 1502.0,400.9 1503.2,401.0C1504.5,401.1 1508.4,400.7 1509.5,401.5C1510.5,402.3 1512.4,406.1 1512.4,407.8Z"/>
<path d="M1483.6,418.5C1483.6,420.1 1481.3,423.9 1480.7,424.8C1480.1,425.6 1479.1,426.1 1478.3,425.8C1477.5,425.6 1474.6,423.8 1473.9,422.9C1473.2,422.0 1472.4,419.2 1472.4,417.9C1472.4,416.6 1473.4,412.6 1474.1,411.6C1474.8,410.6 1477.6,409.4 1478.4,409.4C1479.2,409.4 1480.2,410.1 1480.8,411.2C1481.4,412.3 1483.6,416.9 1483.6,418.5Z"/>
<path d="M1686.1,343.8C1685.8,344.9 1683.4,345.3 1682.4,345.7C1681.4,346.1 1678.8,347.4 1677.5,347.2C1676.2,347.0 1671.8,345.0 1671.3,343.8C1670.7,342.7 1672.2,338.9 1672.8,337.5C1673.4,336.1 1675.5,332.3 1676.6,331.6C1677.8,330.9 1681.7,331.1 1682.7,331.7C1683.6,332.3 1684.3,335.0 1684.7,336.4C1685.1,337.9 1686.3,342.7 1686.1,343.8Z"/>
<path d="M1706.0,388.0C1707.6,384.5 1710.7,385.1 1716.0,383.0C1721.3,380.9 1721.5,382.4 1726.0,380.0C1730.5,377.6 1730.3,372.9 1733.0,374.0C1735.7,375.1 1736.8,379.2 1736.0,384.0C1735.2,388.8 1734.3,388.5 1730.0,392.0C1725.7,395.5 1725.3,395.9 1720.0,397.0C1714.7,398.1 1713.7,398.4 1710.0,396.0C1706.3,393.6 1704.4,391.5 1706.0,388.0Z"/>
<path d="M1826.1,376.3C1826.5,377.7 1826.7,381.4 1826.3,382.7C1825.9,384.1 1823.7,387.4 1822.7,387.9C1821.8,388.4 1819.2,387.9 1818.3,387.1C1817.5,386.4 1815.7,383.1 1815.4,381.5C1815.2,379.9 1815.8,375.0 1816.2,373.7C1816.5,372.5 1817.8,371.4 1818.6,371.0C1819.4,370.7 1822.2,370.4 1823.1,371.0C1824.0,371.7 1825.8,375.0 1826.1,376.3Z"/>
<path d="M1916.2,290.7C1915.8,292.0 1913.5,292.9 1912.2,293.4C1911.0,293.9 1907.0,295.2 1905.6,294.8C1904.2,294.4 1900.9,291.4 1900.3,290.0C1899.6,288.5 1899.7,283.4 1900.1,282.2C1900.5,281.0 1902.5,280.1 1903.8,279.4C1905.1,278.8 1910.0,276.0 1911.3,276.3C1912.7,276.7 1914.7,280.9 1915.2,282.6C1915.8,284.3 1916.5,289.4 1916.2,290.7Z"/>
<path d="M1871.1,420.0C1870.2,421.4 1865.7,423.7 1864.3,424.1C1862.9,424.6 1860.4,424.5 1859.1,423.7C1857.9,422.9 1853.9,418.8 1853.7,417.1C1853.5,415.5 1856.5,411.2 1857.4,409.8C1858.3,408.4 1859.8,405.7 1861.2,405.1C1862.6,404.6 1868.0,404.0 1869.3,404.8C1870.6,405.6 1871.8,410.3 1872.0,412.0C1872.2,413.8 1872.0,418.6 1871.1,420.0Z"/>
<path d="M1797.0,500.0C1797.8,495.7 1800.4,494.3 1806.0,490.0C1811.6,485.7 1813.2,484.5 1818.0,484.0C1822.8,483.5 1824.8,483.7 1824.0,488.0C1823.2,492.3 1820.6,495.2 1815.0,500.0C1809.4,504.8 1807.8,506.0 1803.0,506.0C1798.2,506.0 1796.2,504.3 1797.0,500.0Z"/>
<path d="M1855.0,262.0C1853.9,255.9 1855.5,250.3 1860.0,245.0C1864.5,239.7 1865.6,240.1 1872.0,242.0C1878.4,243.9 1879.2,245.6 1884.0,252.0C1888.8,258.4 1892.1,261.2 1890.0,266.0C1887.9,270.8 1882.9,269.5 1876.0,270.0C1869.1,270.5 1869.6,270.1 1864.0,268.0C1858.4,265.9 1856.1,268.1 1855.0,262.0Z"/>
<path d="M1698.3,197.1C1698.3,197.7 1696.4,200.0 1695.8,200.7C1695.2,201.5 1694.3,203.0 1693.2,203.3C1692.2,203.6 1688.0,204.0 1687.0,203.5C1686.0,202.9 1684.8,199.7 1684.7,198.8C1684.5,197.9 1685.0,195.9 1685.5,195.4C1686.0,194.9 1688.1,194.5 1689.3,194.4C1690.5,194.4 1694.9,194.6 1695.9,194.9C1697.0,195.2 1698.3,196.4 1698.3,197.1Z"/>
<path d="M1830.0,188.6C1829.9,189.3 1829.0,192.2 1828.3,192.7C1827.7,193.2 1825.0,193.2 1824.2,193.2C1823.5,193.1 1822.2,193.0 1821.6,192.4C1821.0,191.9 1819.3,189.3 1819.2,188.5C1819.1,187.8 1820.1,186.6 1820.7,186.1C1821.3,185.6 1823.1,184.5 1824.1,184.5C1825.1,184.5 1828.6,186.0 1829.3,186.4C1830.0,186.9 1830.2,187.8 1830.0,188.6Z"/>
<path d="M1151.0,626.0C1151.8,623.3 1152.5,622.1 1156.0,621.0C1159.5,619.9 1160.3,622.3 1164.0,622.0C1167.7,621.7 1167.6,619.2 1170.0,620.0C1172.4,620.8 1174.1,622.6 1173.0,625.0C1171.9,627.4 1170.0,627.7 1166.0,629.0C1162.0,630.3 1161.5,629.5 1158.0,630.0C1154.5,630.5 1154.9,632.1 1153.0,631.0C1151.1,629.9 1150.2,628.7 1151.0,626.0Z"/>
<path d="M1175.0,624.0C1175.8,619.7 1177.1,617.7 1180.0,614.0C1182.9,610.3 1182.8,610.0 1186.0,610.0C1189.2,610.0 1190.9,610.8 1192.0,614.0C1193.1,617.2 1192.1,617.7 1190.0,622.0C1187.9,626.3 1187.5,627.9 1184.0,630.0C1180.5,632.1 1179.4,631.6 1177.0,630.0C1174.6,628.4 1174.2,628.3 1175.0,624.0Z"/>
<path d="M1204.0,622.0C1204.8,619.1 1206.3,617.8 1210.0,617.0C1213.7,616.2 1214.0,617.1 1218.0,619.0C1222.0,620.9 1223.9,620.5 1225.0,624.0C1226.1,627.5 1224.9,630.1 1222.0,632.0C1219.1,633.9 1218.0,632.1 1214.0,631.0C1210.0,629.9 1209.7,630.4 1207.0,628.0C1204.3,625.6 1203.2,624.9 1204.0,622.0Z"/>
<path d="M1212.0,640.0C1213.3,636.8 1215.2,633.7 1220.0,635.0C1224.8,636.3 1224.7,643.7 1230.0,645.0C1235.3,646.3 1234.1,643.5 1240.0,640.0C1245.9,636.5 1245.3,632.8 1252.0,632.0C1258.7,631.2 1257.5,636.2 1265.0,637.0C1272.5,637.8 1275.5,632.3 1280.0,635.0C1284.5,637.7 1283.3,641.1 1282.0,647.0C1280.7,652.9 1279.5,653.0 1275.0,657.0C1270.5,661.0 1270.3,663.3 1265.0,662.0C1259.7,660.7 1261.7,654.7 1255.0,652.0C1248.3,649.3 1248.0,652.5 1240.0,652.0C1232.0,651.5 1231.7,651.3 1225.0,650.0C1218.3,648.7 1218.5,649.7 1215.0,647.0C1211.5,644.3 1210.7,643.2 1212.0,640.0Z"/>
<path d="M1310.0,645.0C1312.7,643.7 1314.0,648.1 1322.0,650.0C1330.0,651.9 1330.7,652.0 1340.0,652.0C1349.3,652.0 1351.4,647.9 1357.0,650.0C1362.6,652.1 1360.7,654.1 1361.0,660.0C1361.3,665.9 1363.6,669.9 1358.0,672.0C1352.4,674.1 1349.6,670.1 1340.0,668.0C1330.4,665.9 1329.5,667.5 1322.0,664.0C1314.5,660.5 1315.2,660.1 1312.0,655.0C1308.8,649.9 1307.3,646.3 1310.0,645.0Z"/>
<path d="M1425.0,670.0C1427.1,666.8 1430.7,666.1 1440.0,664.0C1449.3,661.9 1449.9,663.6 1460.0,662.0C1470.1,660.4 1467.3,659.6 1478.0,658.0C1488.7,656.4 1490.9,655.5 1500.0,656.0C1509.1,656.5 1507.7,655.7 1512.0,660.0C1516.3,664.3 1516.0,665.6 1516.0,672.0C1516.0,678.4 1514.9,679.2 1512.0,684.0C1509.1,688.8 1508.7,691.1 1505.0,690.0C1501.3,688.9 1504.7,683.7 1498.0,680.0C1491.3,676.3 1490.1,676.0 1480.0,676.0C1469.9,676.0 1469.3,679.5 1460.0,680.0C1450.7,680.5 1452.5,679.1 1445.0,678.0C1437.5,676.9 1437.3,678.1 1432.0,676.0C1426.7,673.9 1422.9,673.2 1425.0,670.0Z"/>
<path d="M960.0,598.0C961.6,594.0 965.3,592.7 972.0,590.0C978.7,587.3 978.1,586.9 985.0,588.0C991.9,589.1 991.3,590.5 998.0,594.0C1004.7,597.5 1002.5,600.2 1010.0,601.0C1017.5,601.8 1018.0,597.8 1026.0,597.0C1034.0,596.2 1038.9,595.6 1040.0,598.0C1041.1,600.4 1037.5,602.8 1030.0,606.0C1022.5,609.2 1021.1,610.5 1012.0,610.0C1002.9,609.5 1004.5,606.7 996.0,604.0C987.5,601.3 988.0,599.7 980.0,600.0C972.0,600.3 971.3,605.5 966.0,605.0C960.7,604.5 958.4,602.0 960.0,598.0Z"/>
<path d="M1063.5,589.7C1063.5,590.6 1063.1,594.2 1062.4,594.9C1061.7,595.6 1058.3,595.6 1057.2,595.6C1056.1,595.6 1053.9,595.3 1053.1,594.6C1052.4,593.9 1050.7,590.6 1050.7,589.6C1050.7,588.6 1051.9,586.6 1052.8,586.1C1053.6,585.7 1056.9,585.4 1058.0,585.5C1059.1,585.6 1061.6,586.6 1062.2,587.1C1062.9,587.6 1063.4,588.7 1063.5,589.7Z"/>
<path d="M1097.6,576.9C1097.6,577.8 1096.7,579.6 1095.9,580.2C1095.1,580.8 1092.1,582.1 1091.0,582.1C1089.9,582.1 1087.0,580.7 1086.5,580.2C1085.9,579.7 1086.2,578.6 1086.3,577.7C1086.4,576.9 1086.9,573.4 1087.6,572.7C1088.2,572.0 1090.8,571.9 1091.8,571.9C1092.7,572.0 1095.3,572.4 1096.0,572.9C1096.7,573.5 1097.6,576.1 1097.6,576.9Z"/>
<path d="M1572.0,697.0C1572.7,698.2 1573.1,703.4 1572.6,705.1C1572.2,706.8 1568.9,710.7 1567.8,711.3C1566.7,711.9 1564.7,710.6 1563.5,710.0C1562.3,709.5 1558.2,707.6 1557.3,706.7C1556.5,705.7 1555.6,702.8 1556.2,701.6C1556.8,700.3 1561.0,696.6 1562.3,695.8C1563.6,694.9 1566.2,694.2 1567.3,694.4C1568.4,694.5 1571.4,695.7 1572.0,697.0Z"/>
<path d="M1558.9,717.6C1558.4,721.0 1557.1,728.1 1556.0,730.0C1554.9,731.9 1551.0,734.4 1549.7,733.7C1548.5,732.9 1545.9,725.8 1545.3,723.5C1544.8,721.3 1544.2,717.5 1544.9,714.2C1545.5,710.9 1549.7,698.3 1551.1,695.4C1552.5,692.4 1555.8,688.1 1556.9,688.6C1558.0,689.2 1560.5,696.9 1560.7,700.3C1561.0,703.7 1559.5,714.1 1558.9,717.6Z"/>
<path d="M1250.5,461.3C1249.3,463.5 1244.3,468.0 1242.8,468.8C1241.2,469.5 1238.6,468.4 1237.5,467.9C1236.4,467.3 1233.4,465.8 1233.3,464.0C1233.2,462.3 1235.5,455.5 1236.7,452.8C1238.0,450.2 1242.4,443.0 1244.3,441.6C1246.2,440.2 1252.0,439.9 1253.0,440.8C1254.1,441.8 1253.5,447.5 1253.2,449.9C1252.9,452.3 1251.7,459.1 1250.5,461.3Z"/>
</g>
<g fill="none" stroke="#a6c0d5" stroke-linecap="round" stroke-linejoin="round">
<path d="M997.0,130.0C995.4,142.0 992.3,149.7 991.0,175.0C989.7,200.3 989.1,208.7 992.0,225.0C994.9,241.3 979.3,232.0 1002.0,236.0C1024.7,240.0 1050.9,239.5 1077.0,240.0C1103.1,240.5 1091.2,235.3 1100.0,238.0C1108.8,240.7 1106.0,241.5 1110.0,250.0C1114.0,258.5 1107.0,258.0 1115.0,270.0C1123.0,282.0 1128.0,284.3 1140.0,295.0C1152.0,305.7 1148.0,302.0 1160.0,310.0C1172.0,318.0 1169.0,316.5 1185.0,325.0C1201.0,333.5 1204.8,332.1 1220.0,342.0C1235.2,351.9 1234.0,351.3 1242.0,362.0C1250.0,372.7 1246.0,370.5 1250.0,382.0C1254.0,393.5 1255.1,394.9 1257.0,405.0C1258.9,415.1 1259.7,410.7 1257.0,420.0C1254.3,429.3 1255.5,429.3 1247.0,440.0C1238.5,450.7 1233.0,448.8 1225.0,460.0C1217.0,471.2 1219.1,471.3 1217.0,482.0C1214.9,492.7 1219.4,492.5 1217.0,500.0C1214.6,507.5 1218.7,506.0 1208.0,510.0C1197.3,514.0 1195.1,512.3 1177.0,515.0C1158.9,517.7 1154.7,513.3 1140.0,520.0C1125.3,526.7 1129.5,528.8 1122.0,540.0C1114.5,551.2 1121.9,552.1 1112.0,562.0C1102.1,571.9 1098.9,570.1 1085.0,577.0C1071.1,583.9 1071.5,581.9 1060.0,588.0C1048.5,594.1 1055.3,595.5 1042.0,600.0C1028.7,604.5 1025.2,607.4 1010.0,605.0C994.8,602.6 998.3,593.1 985.0,591.0C971.7,588.9 974.7,597.8 960.0,597.0C945.3,596.2 948.1,589.3 930.0,588.0C911.9,586.7 912.0,591.5 892.0,592.0C872.0,592.5 871.0,592.1 855.0,590.0C839.0,587.9 841.9,589.9 832.0,584.0C822.1,578.1 831.9,573.9 818.0,568.0C804.1,562.1 797.6,565.5 780.0,562.0C762.4,558.5 759.5,556.9 752.0,555.0" stroke-width="2.2"/>
<path d="M1077.0,240.0C1076.5,244.3 1079.5,246.7 1075.0,256.0C1070.5,265.3 1069.3,265.9 1060.0,275.0C1050.7,284.1 1054.7,282.8 1040.0,290.0C1025.3,297.2 1024.5,297.5 1005.0,302.0C985.5,306.5 977.1,305.7 967.0,307.0" stroke-width="2.4"/>
<path d="M1262.0,420.0C1269.5,410.7 1275.3,399.7 1290.0,385.0C1304.7,370.3 1305.0,371.7 1317.0,365.0C1329.0,358.3 1327.3,358.4 1335.0,360.0C1342.7,361.6 1339.3,363.0 1346.0,371.0C1352.7,379.0 1349.6,383.3 1360.0,390.0C1370.4,396.7 1371.7,393.3 1385.0,396.0C1398.3,398.7 1395.3,397.3 1410.0,400.0C1424.7,402.7 1424.0,404.1 1440.0,406.0C1456.0,407.9 1457.7,411.3 1470.0,407.0C1482.3,402.7 1474.0,399.6 1486.0,390.0C1498.0,380.4 1493.9,375.0 1515.0,371.0C1536.1,367.0 1538.3,380.6 1565.0,375.0C1591.7,369.4 1591.8,363.1 1615.0,350.0C1638.2,336.9 1632.0,334.0 1652.0,326.0C1672.0,318.0 1678.0,327.5 1690.0,320.0C1702.0,312.5 1690.3,305.7 1697.0,298.0C1703.7,290.3 1704.9,296.6 1715.0,291.0C1725.1,285.4 1728.1,283.1 1735.0,277.0C1741.9,270.9 1734.1,280.0 1741.0,268.0C1747.9,256.0 1757.3,250.1 1761.0,232.0C1764.7,213.9 1760.6,216.0 1755.0,200.0C1749.4,184.0 1750.4,185.3 1740.0,172.0C1729.6,158.7 1725.6,160.7 1716.0,150.0C1706.4,139.3 1707.2,136.8 1704.0,132.0" stroke-width="2.4"/>
<path d="M1740.0,172.0C1749.3,174.4 1755.0,169.0 1775.0,181.0C1795.0,193.0 1791.8,198.6 1815.0,217.0C1838.2,235.4 1842.0,236.4 1862.0,250.0C1882.0,263.6 1882.5,263.2 1890.0,268.0" stroke-width="3.2"/>
<path d="M1925.0,332.0C1918.9,338.7 1912.7,343.7 1902.0,357.0C1891.3,370.3 1894.6,367.9 1885.0,382.0C1875.4,396.1 1877.5,397.2 1866.0,410.0C1854.5,422.8 1851.3,416.7 1842.0,430.0C1832.7,443.3 1837.9,442.7 1831.0,460.0C1824.1,477.3 1821.6,473.7 1816.0,495.0C1810.4,516.3 1815.3,526.7 1810.0,540.0C1804.7,553.3 1804.5,540.5 1796.0,545.0C1787.5,549.5 1789.7,552.7 1778.0,557.0C1766.3,561.3 1763.5,562.3 1752.0,561.0C1740.5,559.7 1743.0,557.3 1735.0,552.0C1727.0,546.7 1734.0,543.4 1722.0,541.0C1710.0,538.6 1705.2,540.3 1690.0,543.0C1674.8,545.7 1678.3,545.1 1665.0,551.0C1651.7,556.9 1656.8,554.6 1640.0,565.0C1623.2,575.4 1618.8,576.7 1602.0,590.0C1585.2,603.3 1588.7,601.1 1577.0,615.0C1565.3,628.9 1564.7,623.6 1558.0,642.0C1551.3,660.4 1552.8,664.5 1552.0,684.0C1551.2,703.5 1556.9,701.4 1555.0,715.0C1553.1,728.6 1553.8,726.2 1545.0,735.0C1536.2,743.8 1532.1,738.7 1522.0,748.0C1511.9,757.3 1513.7,756.9 1507.0,770.0C1500.3,783.1 1501.5,782.3 1497.0,797.0C1492.5,811.7 1497.2,811.9 1490.0,825.0C1482.8,838.1 1483.3,838.0 1470.0,846.0C1456.7,854.0 1456.0,849.4 1440.0,855.0C1424.0,860.6 1422.0,859.0 1410.0,867.0C1398.0,875.0 1398.5,872.2 1395.0,885.0C1391.5,897.8 1394.3,900.3 1397.0,915.0C1399.7,929.7 1406.6,928.5 1405.0,940.0C1403.4,951.5 1389.7,950.0 1391.0,958.0C1392.3,966.0 1399.6,965.5 1410.0,970.0C1420.4,974.5 1421.5,971.0 1430.0,975.0C1438.5,979.0 1431.3,981.5 1442.0,985.0C1452.7,988.5 1460.7,983.5 1470.0,988.0C1479.3,992.5 1479.7,993.5 1477.0,1002.0C1474.3,1010.5 1469.9,1012.0 1460.0,1020.0C1450.1,1028.0 1449.3,1024.0 1440.0,1032.0C1430.7,1040.0 1430.3,1040.7 1425.0,1050.0C1419.7,1059.3 1422.1,1057.7 1420.0,1067.0C1417.9,1076.3 1417.8,1080.2 1417.0,1085.0" stroke-width="2.6"/>
<path d="M1245.0,540.0C1249.0,546.7 1249.3,552.7 1260.0,565.0C1270.7,577.3 1273.0,572.7 1285.0,586.0C1297.0,599.3 1300.5,601.7 1305.0,615.0C1309.5,628.3 1306.5,624.8 1302.0,636.0C1297.5,647.2 1293.9,645.3 1288.0,657.0C1282.1,668.7 1282.1,673.9 1280.0,680.0" stroke-width="2.6"/>
<path d="M1302.0,636.0C1305.7,640.0 1303.2,644.3 1316.0,651.0C1328.8,657.7 1340.9,658.3 1350.0,661.0" stroke-width="2.6"/>
<path d="M1355.0,668.0C1360.3,669.9 1364.3,672.9 1375.0,675.0C1385.7,677.1 1380.3,676.8 1395.0,676.0C1409.7,675.2 1420.7,673.1 1430.0,672.0" stroke-width="2.6"/>
<path d="M1152.0,1085.0C1153.3,1071.7 1153.0,1055.0 1157.0,1035.0C1161.0,1015.0 1159.5,1019.3 1167.0,1010.0C1174.5,1000.7 1173.0,1003.5 1185.0,1000.0C1197.0,996.5 1204.8,997.8 1212.0,997.0" stroke-width="2.4"/>
<path d="M742.0,545.0C743.6,549.0 741.1,552.8 748.0,560.0C754.9,567.2 756.8,567.2 768.0,572.0C779.2,576.8 784.1,576.4 790.0,578.0" stroke-width="2.0"/>
<path d="M1122.0,540.0C1116.1,542.1 1111.2,548.0 1100.0,548.0C1088.8,548.0 1085.3,542.1 1080.0,540.0" stroke-width="2.0"/>
</g>
<g fill="#adadb0">
<polygon points="903.0,318.0 912.0,312.0 914.0,305.0 922.0,308.0 930.0,305.0 940.0,307.0 944.0,312.0 941.0,318.0 950.0,326.0 958.0,331.0 946.0,329.0 939.0,334.0 930.0,331.0 924.0,326.0 916.0,327.0 910.0,322.0"/>
<polygon points="1224.0,420.0 1240.0,428.0 1250.0,424.0 1262.0,421.0 1279.0,417.0 1272.0,434.0 1274.0,452.0 1266.0,460.0 1262.0,475.0 1254.0,462.0 1244.0,460.0 1227.0,470.0 1236.0,452.0 1233.0,440.0"/>
<polygon points="1815.0,445.0 1828.0,453.0 1834.0,444.0 1840.0,453.0 1852.0,453.0 1867.0,444.0 1856.0,459.0 1854.0,475.0 1869.0,490.0 1852.0,483.0 1844.0,494.0 1838.0,485.0 1829.0,488.0 1825.0,473.0 1828.0,463.0"/>
<polygon points="801.0,588.0 814.0,584.0 822.0,586.0 836.0,577.0 848.0,580.0 856.0,572.0 866.0,574.0 870.0,584.0 886.0,586.0 876.0,594.0 888.0,602.0 876.0,605.0 884.0,616.0 870.0,612.0 864.0,622.0 853.0,611.0 840.0,608.0 828.0,616.0 812.0,624.0 817.0,608.0 810.0,600.0"/>
<polygon points="1438.0,838.0 1452.0,846.0 1470.0,846.0 1484.0,838.0 1494.0,846.0 1486.0,858.0 1478.0,860.0 1470.0,872.0 1462.0,858.0 1452.0,864.0 1446.0,852.0"/>
<polygon points="265.0,872.0 274.0,876.0 283.0,880.0 292.0,872.0 284.0,884.0 280.0,896.0 272.0,898.0 270.0,886.0"/>
<polygon points="536.0,226.0 548.0,215.0 566.0,200.0 570.0,203.0 560.0,218.0 562.0,226.0 548.0,228.0"/>
<path d="M478.9,177.0C478.9,177.9 477.6,180.1 476.8,180.8C476.1,181.4 473.8,182.7 472.6,182.5C471.5,182.3 467.8,180.0 467.2,179.1C466.6,178.3 467.0,176.1 467.5,175.2C468.0,174.3 470.4,172.0 471.5,171.7C472.6,171.3 475.9,171.7 476.8,172.4C477.7,173.0 478.9,176.0 478.9,177.0Z"/>
<path d="M708.1,220.3C708.1,221.8 706.5,225.3 705.7,226.1C704.9,226.8 702.3,227.4 701.3,226.9C700.3,226.5 697.7,223.4 697.3,222.1C696.9,220.7 697.2,216.8 697.7,215.6C698.2,214.4 701.0,212.0 701.9,211.7C702.8,211.4 704.5,212.1 705.2,213.1C706.0,214.0 708.0,218.7 708.1,220.3Z"/>
<polygon points="1070.0,208.0 1080.0,194.0 1090.0,186.0 1088.0,200.0 1082.0,212.0 1072.0,213.0"/>
<polygon points="1456.0,236.0 1462.0,227.0 1474.0,225.0 1477.0,238.0 1466.0,243.0"/>
<path d="M1170.6,205.4C1170.6,206.5 1169.9,209.6 1168.9,210.3C1168.0,211.0 1164.0,211.4 1162.7,211.2C1161.4,210.9 1158.2,208.7 1157.7,207.8C1157.2,206.9 1157.6,204.6 1158.2,203.6C1158.9,202.7 1162.0,200.3 1163.2,200.0C1164.5,199.7 1168.2,200.5 1169.1,201.1C1169.9,201.8 1170.6,204.4 1170.6,205.4Z"/>
<path d="M1226.5,217.8C1226.5,218.6 1225.6,221.7 1224.9,222.4C1224.3,223.1 1221.9,224.1 1220.9,223.7C1220.0,223.4 1217.4,220.5 1217.0,219.7C1216.5,218.8 1216.6,217.2 1216.9,216.4C1217.3,215.7 1219.0,213.7 1220.0,213.5C1220.9,213.4 1224.3,214.8 1225.0,215.3C1225.8,215.8 1226.5,216.9 1226.5,217.8Z"/>
<path d="M1174.6,147.7C1174.6,149.1 1173.5,152.5 1172.9,153.1C1172.3,153.6 1170.4,152.8 1169.5,152.3C1168.6,151.8 1165.9,149.9 1165.4,149.0C1165.0,148.2 1165.3,146.0 1165.6,145.0C1165.9,144.1 1167.5,141.1 1168.3,140.6C1169.2,140.1 1172.1,139.9 1172.8,140.7C1173.5,141.6 1174.6,146.2 1174.6,147.7Z"/>
<polygon points="1514.0,362.0 1531.0,363.0 1524.0,371.0 1519.0,369.0"/>
<polygon points="1520.0,470.0 1524.0,456.0 1530.0,468.0 1533.0,472.0 1524.0,474.0"/>
<polygon points="1459.0,518.0 1466.0,519.0 1476.0,531.0 1471.0,532.0"/>
<polygon points="1141.0,638.0 1154.0,645.0 1148.0,653.0 1142.0,648.0"/>
<polygon points="1310.0,560.0 1321.0,571.0 1318.0,573.0 1309.0,563.0"/>
<polygon points="1346.0,604.0 1355.0,604.0 1354.0,618.0 1349.0,612.0"/>
<path d="M1576.6,728.1C1576.6,729.7 1577.0,734.1 1576.3,735.1C1575.7,736.1 1572.2,737.0 1571.3,736.5C1570.5,736.0 1569.4,732.6 1569.2,730.9C1569.0,729.2 1569.0,723.3 1569.4,722.1C1569.8,720.9 1571.8,720.6 1572.6,720.6C1573.5,720.5 1575.9,720.6 1576.4,721.5C1576.9,722.4 1576.6,726.5 1576.6,728.1Z"/>
<path d="M1656.6,696.7C1656.6,697.4 1655.0,699.3 1654.2,700.0C1653.4,700.6 1650.8,702.4 1649.7,702.3C1648.5,702.1 1644.9,699.4 1644.4,698.6C1644.0,697.8 1645.5,696.5 1645.9,695.7C1646.3,694.8 1646.9,691.8 1647.9,691.6C1648.9,691.4 1653.4,693.0 1654.4,693.5C1655.4,694.1 1656.7,695.9 1656.6,696.7Z"/>
<path d="M1821.0,822.2C1821.1,823.5 1818.9,825.5 1817.8,826.2C1816.7,827.0 1813.5,829.1 1811.8,828.8C1810.1,828.6 1803.8,825.5 1803.0,824.2C1802.3,822.9 1804.4,819.0 1805.4,817.7C1806.3,816.4 1809.8,813.1 1811.1,812.8C1812.5,812.5 1815.7,814.0 1816.9,815.1C1818.0,816.2 1820.9,820.9 1821.0,822.2Z"/>
<polygon points="1746.0,948.0 1756.0,943.0 1766.0,947.0 1774.0,957.0 1760.0,954.0"/>
<path d="M1388.1,955.1C1388.0,956.1 1386.4,959.1 1385.6,959.8C1384.8,960.5 1382.0,961.0 1381.2,960.9C1380.4,960.8 1378.9,959.4 1378.5,958.7C1378.2,957.9 1377.9,955.3 1378.2,954.4C1378.6,953.4 1380.9,950.9 1381.8,950.6C1382.7,950.3 1385.1,951.2 1385.9,951.8C1386.6,952.3 1388.1,954.2 1388.1,955.1Z"/>
<path d="M537.6,630.0C537.5,631.0 535.4,632.6 534.6,633.0C533.7,633.4 531.0,633.7 530.3,633.4C529.5,633.2 528.2,631.7 527.9,631.0C527.6,630.4 527.2,628.3 527.6,627.6C528.0,626.9 530.2,625.3 531.1,624.9C532.0,624.5 534.3,623.6 535.1,624.2C535.8,624.8 537.6,629.0 537.6,630.0Z"/>
<path d="M528.8,561.2C528.2,562.0 525.9,563.6 525.1,563.8C524.4,564.0 523.2,563.5 522.6,562.9C522.0,562.2 519.9,559.2 519.8,558.2C519.6,557.3 520.5,555.0 521.2,554.6C521.9,554.1 524.6,553.8 525.6,554.1C526.6,554.4 529.6,556.2 530.0,557.0C530.3,557.8 529.3,560.4 528.8,561.2Z"/>
<path d="M555.9,556.4C555.9,557.4 555.0,561.3 554.5,561.9C553.9,562.5 551.8,561.7 551.2,561.5C550.5,561.3 549.5,561.2 549.3,560.4C549.0,559.6 548.8,555.5 549.1,554.5C549.5,553.5 551.4,552.4 552.0,552.2C552.6,552.1 554.1,552.6 554.6,553.1C555.0,553.5 555.9,555.3 555.9,556.4Z"/>
<path d="M562.4,771.0C562.2,771.8 559.8,774.4 558.9,775.1C558.0,775.7 555.9,776.7 555.1,776.6C554.2,776.5 552.0,775.3 551.7,774.3C551.3,773.4 551.8,769.5 552.1,768.5C552.5,767.5 553.5,766.2 554.4,766.1C555.3,766.0 559.2,767.2 560.1,767.7C561.1,768.3 562.5,770.1 562.4,771.0Z"/>
<polygon points="451.0,675.0 460.0,678.0 466.0,686.0 458.0,684.0"/>
<path d="M437.3,843.2C437.3,844.4 436.7,846.9 435.9,847.7C435.0,848.6 430.8,850.9 429.8,850.6C428.8,850.3 427.5,846.3 427.2,845.0C426.9,843.7 427.1,840.7 427.5,839.7C427.9,838.6 429.7,836.5 430.7,836.3C431.6,836.0 435.0,836.4 435.8,837.2C436.5,838.0 437.3,841.9 437.3,843.2Z"/>
<path d="M265.8,994.8C265.8,996.2 263.8,998.0 262.9,998.9C262.1,999.8 259.3,1002.7 258.3,1002.5C257.3,1002.3 254.8,998.9 254.3,997.2C253.9,995.5 253.9,989.3 254.5,987.8C255.0,986.3 257.8,984.5 258.8,984.4C259.8,984.3 262.3,985.6 263.2,986.8C264.0,988.0 265.9,993.4 265.8,994.8Z"/>
<polygon points="405.0,976.0 420.0,978.0 422.0,988.0 408.0,989.0"/>
<path d="M337.8,1044.6C337.7,1045.4 335.5,1047.3 334.5,1047.5C333.4,1047.6 329.8,1046.6 328.8,1046.0C327.7,1045.4 325.8,1043.1 325.4,1042.3C325.1,1041.5 325.1,1039.4 325.8,1039.1C326.6,1038.8 330.7,1039.4 331.8,1039.5C332.8,1039.7 334.2,1040.2 334.9,1040.8C335.6,1041.3 337.8,1043.8 337.8,1044.6Z"/>
<polygon points="525.0,1052.0 534.0,1060.0 527.0,1066.0"/>
<path d="M1846.2,561.6C1846.3,562.6 1845.0,564.0 1844.3,564.5C1843.7,565.0 1841.5,566.0 1840.8,566.0C1840.1,565.9 1838.4,565.3 1838.2,564.4C1837.9,563.6 1838.0,559.8 1838.3,558.7C1838.7,557.7 1840.4,555.8 1841.0,555.5C1841.7,555.2 1843.4,555.6 1844.0,556.3C1844.6,557.0 1846.2,560.7 1846.2,561.6Z"/>
<path d="M912.6,674.5C912.2,675.1 911.3,675.7 910.5,675.7C909.8,675.7 906.9,675.0 906.0,674.5C905.2,674.0 903.3,672.4 903.2,671.7C903.1,670.9 904.6,668.6 905.2,668.1C905.9,667.7 907.8,667.6 908.8,667.9C909.8,668.2 913.1,670.0 913.6,670.8C914.0,671.6 912.9,673.9 912.6,674.5Z"/>
<path d="M867.2,853.0C867.1,854.0 866.3,857.3 865.7,857.9C865.0,858.4 862.8,858.2 861.9,857.8C861.0,857.5 858.6,855.7 858.1,855.0C857.6,854.2 857.4,852.1 857.8,851.4C858.1,850.6 860.0,849.1 861.1,848.8C862.1,848.5 866.0,848.6 866.8,849.0C867.5,849.5 867.4,852.0 867.2,853.0Z"/>
<path d="M1124.4,731.2C1124.4,732.0 1123.3,734.1 1122.3,734.7C1121.2,735.3 1116.3,736.3 1115.3,736.1C1114.2,735.9 1113.4,733.4 1113.0,732.7C1112.6,732.0 1111.5,730.8 1111.8,730.2C1112.2,729.6 1114.6,727.8 1115.9,727.5C1117.1,727.2 1121.4,727.2 1122.4,727.6C1123.4,728.1 1124.4,730.4 1124.4,731.2Z"/>
</g>
<g fill="none" stroke="#85857d" stroke-width="0.75">
<path d="M960.0,281.0C968.3,276.8 993.3,266.8 1010.0,256.0C1026.7,245.2 1045.8,231.0 1060.0,216.0C1074.2,201.0 1086.7,179.3 1095.0,166.0C1103.3,152.7 1107.5,141.0 1110.0,136.0"/>
<path d="M1310.0,136.0C1313.3,146.0 1325.8,175.2 1330.0,196.0C1334.2,216.8 1334.7,239.3 1335.0,261.0C1335.3,282.7 1332.8,308.5 1332.0,326.0C1331.2,343.5 1330.3,359.3 1330.0,366.0"/>
<path d="M1467.0,233.0C1462.5,236.8 1449.5,247.2 1440.0,256.0C1430.5,264.8 1421.7,275.2 1410.0,286.0C1398.3,296.8 1381.7,309.3 1370.0,321.0C1358.3,332.7 1345.0,350.2 1340.0,356.0"/>
<path d="M1480.0,236.0C1480.8,244.3 1480.0,269.3 1485.0,286.0C1490.0,302.7 1503.3,321.8 1510.0,336.0C1516.7,350.2 1522.5,351.0 1525.0,371.0C1527.5,391.0 1525.0,438.5 1525.0,456.0C1525.0,473.5 1525.0,472.7 1525.0,476.0"/>
<path d="M1280.0,481.0C1289.2,481.8 1315.0,481.8 1335.0,486.0C1355.0,490.2 1378.3,500.2 1400.0,506.0C1421.7,511.8 1446.7,513.5 1465.0,521.0C1483.3,528.5 1490.0,540.2 1510.0,551.0C1530.0,561.8 1568.3,571.8 1585.0,586.0C1601.7,600.2 1603.3,621.0 1610.0,636.0C1616.7,651.0 1620.0,662.0 1625.0,676.0C1630.0,690.0 1637.5,712.7 1640.0,720.0"/>
<path d="M1260.0,476.0C1264.2,484.3 1276.7,511.8 1285.0,526.0C1293.3,540.2 1300.8,549.3 1310.0,561.0C1319.2,572.7 1331.7,583.5 1340.0,596.0C1348.3,608.5 1354.2,622.7 1360.0,636.0C1365.8,649.3 1368.3,660.3 1375.0,676.0C1381.7,691.7 1389.2,711.0 1400.0,730.0C1410.8,749.0 1433.3,780.0 1440.0,790.0"/>
<path d="M1025.0,576.0C1041.7,566.8 1092.5,536.8 1125.0,521.0C1157.5,505.2 1204.2,487.7 1220.0,481.0"/>
<path d="M1840.0,456.0C1835.0,461.0 1823.3,474.3 1810.0,486.0C1796.7,497.7 1776.7,515.2 1760.0,526.0C1743.3,536.8 1726.7,541.0 1710.0,551.0C1693.3,561.0 1676.7,575.2 1660.0,586.0C1643.3,596.8 1622.5,604.3 1610.0,616.0C1597.5,627.7 1593.3,642.0 1585.0,656.0C1576.7,670.0 1574.2,681.0 1560.0,700.0C1545.8,719.0 1510.0,758.3 1500.0,770.0"/>
<path d="M1685.0,411.0C1687.5,418.5 1695.8,435.2 1700.0,456.0C1704.2,476.8 1709.2,514.3 1710.0,536.0C1710.8,557.7 1705.0,569.3 1705.0,586.0C1705.0,602.7 1709.2,627.7 1710.0,636.0"/>
<path d="M1840.0,466.0C1839.2,477.7 1836.7,507.7 1835.0,536.0C1833.3,564.3 1832.2,602.0 1830.0,636.0C1827.8,670.0 1824.5,709.3 1822.0,740.0C1819.5,770.7 1816.2,806.7 1815.0,820.0"/>
<path d="M1850.0,451.0C1855.8,445.2 1873.3,425.2 1885.0,416.0C1896.7,406.8 1914.2,399.3 1920.0,396.0"/>
<path d="M1855.0,466.0C1865.8,472.7 1909.2,499.3 1920.0,506.0"/>
<path d="M1640.0,136.0C1640.8,148.5 1641.7,186.0 1645.0,211.0C1648.3,236.0 1648.3,271.0 1660.0,286.0C1671.7,301.0 1705.8,298.5 1715.0,301.0"/>
<path d="M1240.0,445.0C1225.0,437.5 1180.0,414.2 1150.0,400.0C1120.0,385.8 1088.3,371.7 1060.0,360.0C1031.7,348.3 1001.7,337.0 980.0,330.0C958.3,323.0 938.3,320.0 930.0,318.0"/>
<path d="M1467.0,233.0C1482.5,227.5 1531.2,216.0 1560.0,200.0C1588.8,184.0 1626.7,147.5 1640.0,137.0"/>
<path d="M1080.0,137.0C1073.3,147.5 1053.3,179.5 1040.0,200.0C1026.7,220.5 1013.3,243.3 1000.0,260.0C986.7,276.7 971.7,290.3 960.0,300.0C948.3,309.7 935.0,315.0 930.0,318.0"/>
<path d="M440.0,281.0C445.0,276.3 459.7,260.5 470.0,253.0C480.3,245.5 490.3,241.3 502.0,236.0C513.7,230.7 528.7,226.8 540.0,221.0C551.3,215.2 557.5,209.8 570.0,201.0C582.5,192.2 600.8,178.8 615.0,168.0C629.2,157.2 648.3,141.3 655.0,136.0"/>
<path d="M502.0,236.0C505.3,239.3 514.0,248.2 522.0,256.0C530.0,263.8 542.8,273.8 550.0,283.0C557.2,292.2 560.0,302.2 565.0,311.0C570.0,319.8 573.8,327.7 580.0,336.0C586.2,344.3 594.5,353.2 602.0,361.0C609.5,368.8 616.7,375.5 625.0,383.0C633.3,390.5 640.8,396.5 652.0,406.0C663.2,415.5 679.0,429.3 692.0,440.0C705.0,450.7 715.3,456.7 730.0,470.0C744.7,483.3 768.3,508.3 780.0,520.0C791.7,531.7 791.7,530.8 800.0,540.0C808.3,549.2 825.0,569.2 830.0,575.0"/>
<path d="M687.0,136.0C687.5,140.2 688.7,150.7 690.0,161.0C691.3,171.3 694.7,184.7 695.0,198.0C695.3,211.3 693.3,228.0 692.0,241.0C690.7,254.0 689.8,264.8 687.0,276.0C684.2,287.2 678.7,298.0 675.0,308.0C671.3,318.0 667.2,325.2 665.0,336.0C662.8,346.8 663.7,361.3 662.0,373.0C660.3,384.7 659.2,396.5 655.0,406.0C650.8,415.5 641.2,419.3 637.0,430.0C632.8,440.7 632.8,457.2 630.0,470.0C627.2,482.8 625.0,495.3 620.0,507.0C615.0,518.7 605.8,528.7 600.0,540.0C594.2,551.3 587.5,569.2 585.0,575.0"/>
<path d="M715.0,241.0C718.3,246.8 727.5,264.3 735.0,276.0C742.5,287.7 751.7,299.8 760.0,311.0C768.3,322.2 778.3,334.7 785.0,343.0C791.7,351.3 797.5,358.0 800.0,361.0"/>
<path d="M747.0,173.0C754.2,178.8 777.0,196.7 790.0,208.0C803.0,219.3 819.2,235.5 825.0,241.0"/>
<path d="M735.0,270.0C738.3,275.0 748.3,289.7 755.0,300.0C761.7,310.3 768.3,322.5 775.0,332.0C781.7,341.5 791.7,352.8 795.0,357.0"/>
<path d="M807.0,420.0C808.3,426.2 812.0,444.5 815.0,457.0C818.0,469.5 821.7,481.2 825.0,495.0C828.3,508.8 832.8,525.8 835.0,540.0C837.2,554.2 837.5,573.3 838.0,580.0"/>
<path d="M480.0,640.0C485.0,639.5 501.7,638.7 510.0,637.0C518.3,635.3 522.5,633.7 530.0,630.0C537.5,626.3 545.8,620.8 555.0,615.0C564.2,609.2 575.8,600.5 585.0,595.0C594.2,589.5 598.3,585.2 610.0,582.0C621.7,578.8 639.2,576.8 655.0,576.0C670.8,575.2 688.3,577.7 705.0,577.0C721.7,576.3 738.8,570.3 755.0,572.0C771.2,573.7 794.2,584.5 802.0,587.0"/>
<path d="M540.0,540.0C539.5,546.2 538.7,562.5 537.0,577.0C535.3,591.5 531.2,618.7 530.0,627.0"/>
<path d="M480.0,790.0C492.5,785.0 530.0,772.5 555.0,760.0C580.0,747.5 605.0,730.0 630.0,715.0C655.0,700.0 684.2,682.5 705.0,670.0C725.8,657.5 738.3,648.0 755.0,640.0C771.7,632.0 796.7,625.0 805.0,622.0"/>
<path d="M480.0,690.0C485.3,696.7 502.5,717.5 512.0,730.0C521.5,742.5 528.7,751.7 537.0,765.0C545.3,778.3 557.8,802.5 562.0,810.0"/>
<path d="M835.0,590.0C835.8,585.8 840.0,573.3 840.0,565.0C840.0,556.7 835.8,544.2 835.0,540.0"/>
<path d="M0.0,560.0C20.0,556.7 75.0,560.5 120.0,540.0C165.0,519.5 223.3,472.0 270.0,437.0C316.7,402.0 371.7,356.0 400.0,330.0C428.3,304.0 433.3,289.2 440.0,281.0"/>
<path d="M270.0,437.0C275.0,457.5 290.0,516.2 300.0,560.0C310.0,603.8 330.0,661.7 330.0,700.0C330.0,738.3 309.0,759.3 300.0,790.0C291.0,820.7 280.0,868.3 276.0,884.0"/>
<path d="M270.0,437.0C288.3,440.8 345.0,455.0 380.0,460.0C415.0,465.0 463.3,465.8 480.0,467.0"/>
<path d="M0.0,330.0C20.0,325.0 86.7,306.7 120.0,300.0C153.3,293.3 176.7,280.0 200.0,290.0C223.3,300.0 248.3,335.5 260.0,360.0C271.7,384.5 268.3,424.2 270.0,437.0"/>
<path d="M110.0,783.0C116.7,788.5 137.2,806.5 150.0,816.0C162.8,825.5 173.2,832.7 187.0,840.0C200.8,847.3 219.7,854.5 233.0,860.0C246.3,865.5 257.0,871.3 267.0,873.0C277.0,874.7 284.7,871.2 293.0,870.0C301.3,868.8 313.0,866.7 317.0,866.0"/>
<path d="M387.0,860.0C392.0,858.3 403.7,855.7 417.0,850.0C430.3,844.3 453.2,832.7 467.0,826.0C480.8,819.3 491.2,815.0 500.0,810.0C508.8,805.0 514.5,800.5 520.0,796.0C525.5,791.5 526.0,789.0 533.0,783.0C540.0,777.0 557.2,763.8 562.0,760.0"/>
<path d="M0.0,910.0C8.3,913.3 31.7,922.3 50.0,930.0C68.3,937.7 91.7,947.7 110.0,956.0C128.3,964.3 147.2,972.7 160.0,980.0C172.8,987.3 178.2,992.8 187.0,1000.0C195.8,1007.2 205.3,1015.3 213.0,1023.0C220.7,1030.7 226.3,1037.2 233.0,1046.0C239.7,1054.8 249.7,1071.0 253.0,1076.0"/>
<path d="M267.0,783.0C266.3,788.5 263.0,801.0 263.0,816.0C263.0,831.0 265.8,856.3 267.0,873.0C268.2,889.7 269.0,899.8 270.0,916.0C271.0,932.2 274.2,956.7 273.0,970.0C271.8,983.3 265.7,987.2 263.0,996.0C260.3,1004.8 258.7,1014.0 257.0,1023.0C255.3,1032.0 254.2,1040.5 253.0,1050.0C251.8,1059.5 250.5,1075.0 250.0,1080.0"/>
<path d="M280.0,890.0C286.2,894.3 302.5,908.8 317.0,916.0C331.5,923.2 353.2,926.3 367.0,933.0C380.8,939.7 393.3,947.7 400.0,956.0C406.7,964.3 401.5,976.3 407.0,983.0C412.5,989.7 417.5,987.2 433.0,996.0C448.5,1004.8 483.3,1025.3 500.0,1036.0C516.7,1046.7 524.7,1052.7 533.0,1060.0C541.3,1067.3 547.2,1076.7 550.0,1080.0"/>
<path d="M410.0,783.0C410.5,788.5 412.7,804.8 413.0,816.0C413.3,827.2 412.2,844.3 412.0,850.0"/>
<path d="M1497.0,825.0C1515.8,824.2 1574.5,822.5 1610.0,820.0C1645.5,817.5 1676.7,810.0 1710.0,810.0C1743.3,810.0 1793.3,818.3 1810.0,820.0"/>
<path d="M1490.0,840.0C1501.7,845.0 1531.7,860.0 1560.0,870.0C1588.3,880.0 1626.7,888.3 1660.0,900.0C1693.3,911.7 1726.7,928.3 1760.0,940.0C1793.3,951.7 1833.3,963.3 1860.0,970.0C1886.7,976.7 1910.0,978.3 1920.0,980.0"/>
<path d="M1475.0,850.0C1475.8,860.8 1480.8,891.7 1480.0,915.0C1479.2,938.3 1476.7,962.5 1470.0,990.0C1463.3,1017.5 1445.0,1065.0 1440.0,1080.0"/>
<path d="M1430.0,840.0C1418.3,846.7 1388.3,868.3 1360.0,880.0C1331.7,891.7 1293.3,900.0 1260.0,910.0C1226.7,920.0 1193.3,927.5 1160.0,940.0C1126.7,952.5 1086.7,971.7 1060.0,985.0C1033.3,998.3 1010.0,1014.2 1000.0,1020.0"/>
<path d="M1420.0,805.0C1410.0,800.0 1378.3,782.5 1360.0,775.0C1341.7,767.5 1330.0,769.2 1310.0,760.0C1290.0,750.8 1268.3,738.3 1240.0,720.0C1211.7,701.7 1170.0,663.3 1140.0,650.0C1110.0,636.7 1090.0,648.3 1060.0,640.0C1030.0,631.7 976.7,606.7 960.0,600.0"/>
<path d="M1460.0,767.0C1459.2,754.2 1458.3,711.2 1455.0,690.0C1451.7,668.8 1447.5,656.7 1440.0,640.0C1432.5,623.3 1415.0,598.3 1410.0,590.0"/>
<path d="M1510.0,775.0C1522.5,767.5 1560.0,750.0 1585.0,730.0C1610.0,710.0 1639.2,678.3 1660.0,655.0C1680.8,631.7 1696.7,609.2 1710.0,590.0C1723.3,570.8 1735.0,548.3 1740.0,540.0"/>
<path d="M1815.0,820.0C1820.8,830.0 1838.3,863.3 1850.0,880.0C1861.7,896.7 1873.3,908.3 1885.0,920.0C1896.7,931.7 1914.2,945.0 1920.0,950.0"/>
<path d="M520.0,790.0C536.7,798.3 580.0,821.7 620.0,840.0C660.0,858.3 713.3,880.0 760.0,900.0C806.7,920.0 860.0,940.0 900.0,960.0C940.0,980.0 966.7,1003.3 1000.0,1020.0C1033.3,1036.7 1073.3,1050.0 1100.0,1060.0C1126.7,1070.0 1150.0,1076.7 1160.0,1080.0"/>
</g>
<g fill="none" stroke="#7f7f78" stroke-width="0.9" stroke-dasharray="5 2.2">
<path d="M1170.0,136.0C1172.0,146.0 1174.0,166.0 1180.0,186.0C1186.0,206.0 1195.0,216.0 1200.0,236.0C1205.0,256.0 1200.0,266.0 1205.0,286.0C1210.0,306.0 1215.0,314.0 1225.0,336.0C1235.0,358.0 1248.0,377.0 1255.0,396.0C1262.0,415.0 1259.0,424.0 1260.0,431.0"/>
<path d="M1415.0,156.0C1420.0,162.0 1429.6,170.6 1440.0,186.0C1450.4,201.4 1461.6,223.6 1467.0,233.0"/>
<path d="M1467.0,233.0C1475.6,234.6 1486.4,236.4 1510.0,241.0C1533.6,245.6 1555.0,248.0 1585.0,256.0C1615.0,264.0 1634.0,272.0 1660.0,281.0C1686.0,290.0 1693.0,290.0 1715.0,301.0C1737.0,312.0 1751.0,322.0 1770.0,336.0C1789.0,350.0 1798.0,351.0 1810.0,371.0C1822.0,391.0 1824.0,419.0 1830.0,436.0C1836.0,453.0 1838.0,452.0 1840.0,456.0"/>
<path d="M1525.0,476.0C1512.0,475.0 1487.0,473.6 1460.0,471.0C1433.0,468.4 1420.0,463.6 1390.0,463.0C1360.0,462.4 1332.0,464.4 1310.0,468.0C1288.0,471.6 1286.0,478.4 1280.0,481.0"/>
<path d="M960.0,521.0C975.0,520.0 1002.0,518.0 1035.0,516.0C1068.0,514.0 1092.0,513.0 1125.0,511.0C1158.0,509.0 1177.0,511.0 1200.0,506.0C1223.0,501.0 1232.0,490.0 1240.0,486.0"/>
<path d="M960.0,336.0C973.0,336.4 1000.0,336.0 1025.0,338.0C1050.0,340.0 1060.0,352.4 1085.0,346.0C1110.0,339.6 1131.0,320.0 1150.0,306.0C1169.0,292.0 1174.0,282.0 1180.0,276.0"/>
<path d="M1525.0,456.0C1542.0,452.0 1573.0,443.0 1610.0,436.0C1647.0,429.0 1675.0,425.0 1710.0,421.0C1745.0,417.0 1761.0,413.0 1785.0,416.0C1809.0,419.0 1821.0,432.0 1830.0,436.0"/>
<path d="M930.0,318.0C940.0,318.8 960.0,319.6 980.0,322.0C1000.0,324.4 1020.0,328.4 1030.0,330.0"/>
<path d="M440.0,213.0C444.0,212.0 452.6,211.0 460.0,208.0C467.4,205.0 471.0,202.4 477.0,198.0C483.0,193.6 483.4,192.4 490.0,186.0C496.6,179.6 502.6,173.0 510.0,166.0C517.4,159.0 520.0,156.0 527.0,151.0C534.0,146.0 541.4,143.0 545.0,141.0"/>
<path d="M690.0,136.0C692.0,143.4 696.0,160.6 700.0,173.0C704.0,185.4 703.0,190.0 710.0,198.0C717.0,206.0 728.6,206.4 735.0,213.0C741.4,219.6 739.0,223.4 742.0,231.0C745.0,238.6 743.4,244.0 750.0,251.0C756.6,258.0 764.0,259.0 775.0,266.0C786.0,273.0 799.0,282.0 805.0,286.0"/>
<path d="M727.0,143.0C732.0,144.6 739.4,148.0 752.0,151.0C764.6,154.0 779.4,157.6 790.0,158.0C800.6,158.4 802.0,154.0 805.0,153.0"/>
<path d="M480.0,467.0C487.4,467.6 502.0,469.0 517.0,470.0C532.0,471.0 541.4,470.6 555.0,472.0C568.6,473.4 572.0,475.0 585.0,477.0C598.0,479.0 607.0,479.4 620.0,482.0C633.0,484.6 638.0,487.4 650.0,490.0C662.0,492.6 669.0,492.0 680.0,495.0C691.0,498.0 695.0,500.0 705.0,505.0C715.0,510.0 721.0,513.0 730.0,520.0C739.0,527.0 738.0,531.0 750.0,540.0C762.0,549.0 774.0,556.6 790.0,565.0C806.0,573.4 822.0,578.6 830.0,582.0"/>
<path d="M0.0,470.0C20.0,468.0 46.0,466.6 100.0,460.0C154.0,453.4 218.0,441.0 270.0,437.0C322.0,433.0 326.0,435.0 360.0,440.0C394.0,445.0 416.0,456.6 440.0,462.0C464.0,467.4 472.0,466.0 480.0,467.0"/>
<path d="M862.0,598.0C869.6,598.4 880.4,600.6 900.0,600.0C919.6,599.4 948.0,596.0 960.0,595.0"/>
<path d="M838.0,600.0C846.4,608.0 863.6,622.0 880.0,640.0C896.4,658.0 906.0,670.0 920.0,690.0C934.0,710.0 944.0,730.0 950.0,740.0"/>
<path d="M1497.0,775.0C1509.6,768.0 1542.4,762.0 1560.0,740.0C1577.6,718.0 1581.0,692.0 1585.0,665.0C1589.0,638.0 1575.0,626.0 1580.0,605.0C1585.0,584.0 1594.0,572.0 1610.0,560.0C1626.0,548.0 1640.0,549.0 1660.0,545.0C1680.0,541.0 1700.0,541.0 1710.0,540.0"/>
<path d="M1505.0,840.0C1511.0,845.0 1530.0,851.0 1535.0,865.0C1540.0,879.0 1525.0,897.0 1530.0,910.0C1535.0,923.0 1544.0,924.0 1560.0,930.0C1576.0,936.0 1590.0,933.0 1610.0,940.0C1630.0,947.0 1635.0,957.0 1660.0,965.0C1685.0,973.0 1701.0,973.0 1735.0,980.0C1769.0,987.0 1793.0,993.0 1830.0,1000.0C1867.0,1007.0 1902.0,1012.0 1920.0,1015.0"/>
<path d="M1435.0,775.0C1430.0,766.0 1420.0,749.0 1410.0,730.0C1400.0,711.0 1395.0,703.0 1385.0,680.0C1375.0,657.0 1373.0,637.0 1360.0,615.0C1347.0,593.0 1331.0,585.0 1320.0,570.0C1309.0,555.0 1314.0,554.0 1305.0,540.0C1296.0,526.0 1283.6,514.0 1275.0,500.0C1266.4,486.0 1264.6,476.0 1262.0,470.0"/>
<path d="M1710.0,540.0C1720.0,548.0 1735.0,564.0 1760.0,580.0C1785.0,596.0 1803.0,602.0 1835.0,620.0C1867.0,638.0 1903.0,660.0 1920.0,670.0"/>
<path d="M1840.0,470.0C1832.0,484.0 1816.0,514.0 1800.0,540.0C1784.0,566.0 1776.0,580.0 1760.0,600.0C1744.0,620.0 1728.0,632.0 1720.0,640.0"/>
</g>
<g stroke="#7c7c7a" stroke-width="1" stroke-dasharray="1 1.8" fill="none" opacity="0.42">
<path d="M23.5 136V1080"/>
<path d="M79.5 136V1080"/>
<path d="M190.5 136V1080"/>
<path d="M246.5 136V1080"/>
<path d="M358.5 136V1080"/>
<path d="M414.5 136V1080"/>
<path d="M525.5 136V1080"/>
<path d="M581.5 136V1080"/>
<path d="M693.5 136V1080"/>
<path d="M749.5 136V1080"/>
<path d="M861.5 136V1080"/>
<path d="M917.5 136V1080"/>
<path d="M1028.5 136V1080"/>
<path d="M1084.5 136V1080"/>
<path d="M1196.5 136V1080"/>
<path d="M1252.5 136V1080"/>
<path d="M1363.5 136V1080"/>
<path d="M1419.5 136V1080"/>
<path d="M1531.5 136V1080"/>
<path d="M1587.5 136V1080"/>
<path d="M1699.5 136V1080"/>
<path d="M1755.5 136V1080"/>
<path d="M1866.5 136V1080"/>
<path d="M0 185.5H1920"/>
<path d="M0 297.5H1920"/>
<path d="M0 352.5H1920"/>
<path d="M0 464.5H1920"/>
<path d="M0 520.5H1920"/>
<path d="M0 631.5H1920"/>
<path d="M0 687.5H1920"/>
<path d="M0 799.5H1920"/>
<path d="M0 855.5H1920"/>
<path d="M0 966.5H1920"/>
<path d="M0 1022.5H1920"/>
</g>
<g stroke="#8a8790" stroke-width="1" fill="none">
<path d="M134.5 136V1080" stroke="#94929a"/>
<path d="M302.5 136V1080" stroke="#94929a"/>
<path d="M470.5 136V1080" stroke="#94929a"/>
<path d="M637.5 136V1080" stroke="#94929a"/>
<path d="M805.5 136V1080" stroke="#94929a"/>
<path d="M972.5 136V1080" stroke="#94929a"/>
<path d="M1140.5 136V1080" stroke="#94929a"/>
<path d="M1308.5 136V1080" stroke="#94929a"/>
<path d="M1475.5 136V1080" stroke="#94929a"/>
<path d="M1643.5 136V1080" stroke="#94929a"/>
<path d="M1810.5 136V1080" stroke="#94929a"/>
<path d="M0 241.5H1920"/>
<path d="M0 408.5H1920"/>
<path d="M0 576.5H1920"/>
<path d="M0 743.5H1920"/>
<path d="M0 910.5H1920"/>
<path d="M0 1078.5H1920"/>
</g>
<g fill="#7f778b" font-size="18.5" text-anchor="middle">
<text x="51.5" y="164.0" textLength="43.5" lengthAdjust="spacingAndGlyphs">0401</text>
<text x="219.1" y="164.0" textLength="43.5" lengthAdjust="spacingAndGlyphs">0402</text>
<text x="386.7" y="164.0" textLength="43.5" lengthAdjust="spacingAndGlyphs">0403</text>
<text x="554.3" y="164.0" textLength="43.5" lengthAdjust="spacingAndGlyphs">0404</text>
<text x="721.9" y="164.0" textLength="43.5" lengthAdjust="spacingAndGlyphs">0405</text>
<text x="889.5" y="164.0" textLength="43.5" lengthAdjust="spacingAndGlyphs">0406</text>
<text x="1057.1" y="164.0" textLength="43.5" lengthAdjust="spacingAndGlyphs">0407</text>
<text x="1224.7" y="164.0" textLength="43.5" lengthAdjust="spacingAndGlyphs">0408</text>
<text x="1392.3" y="164.0" textLength="43.5" lengthAdjust="spacingAndGlyphs">0409</text>
<text x="1559.9" y="164.0" textLength="43.5" lengthAdjust="spacingAndGlyphs">0410</text>
<text x="1727.5" y="164.0" textLength="43.5" lengthAdjust="spacingAndGlyphs">0411</text>
<text x="1895.1" y="164.0" textLength="43.5" lengthAdjust="spacingAndGlyphs">0412</text>
<text x="51.5" y="333.8" textLength="43.5" lengthAdjust="spacingAndGlyphs">0501</text>
<text x="219.1" y="333.8" textLength="43.5" lengthAdjust="spacingAndGlyphs">0502</text>
<text x="386.7" y="333.8" textLength="43.5" lengthAdjust="spacingAndGlyphs">0503</text>
<text x="554.3" y="333.8" textLength="43.5" lengthAdjust="spacingAndGlyphs">0504</text>
<text x="721.9" y="333.8" textLength="43.5" lengthAdjust="spacingAndGlyphs">0505</text>
<text x="889.5" y="333.8" textLength="43.5" lengthAdjust="spacingAndGlyphs">0506</text>
<text x="1057.1" y="333.8" textLength="43.5" lengthAdjust="spacingAndGlyphs">0507</text>
<text x="1224.7" y="333.8" textLength="43.5" lengthAdjust="spacingAndGlyphs">0508</text>
<text x="1392.3" y="333.8" textLength="43.5" lengthAdjust="spacingAndGlyphs">0509</text>
<text x="1559.9" y="333.8" textLength="43.5" lengthAdjust="spacingAndGlyphs">0510</text>
<text x="1727.5" y="333.8" textLength="43.5" lengthAdjust="spacingAndGlyphs">0511</text>
<text x="1895.1" y="333.8" textLength="43.5" lengthAdjust="spacingAndGlyphs">0512</text>
<text x="51.5" y="498.2" textLength="43.5" lengthAdjust="spacingAndGlyphs">0601</text>
<text x="219.1" y="498.2" textLength="43.5" lengthAdjust="spacingAndGlyphs">0602</text>
<text x="386.7" y="498.2" textLength="43.5" lengthAdjust="spacingAndGlyphs">0603</text>
<text x="554.3" y="498.2" textLength="43.5" lengthAdjust="spacingAndGlyphs">0604</text>
<text x="721.9" y="498.2" textLength="43.5" lengthAdjust="spacingAndGlyphs">0605</text>
<text x="889.5" y="498.2" textLength="43.5" lengthAdjust="spacingAndGlyphs">0606</text>
<text x="1057.1" y="498.2" textLength="43.5" lengthAdjust="spacingAndGlyphs">0607</text>
<text x="1224.7" y="498.2" textLength="43.5" lengthAdjust="spacingAndGlyphs">0608</text>
<text x="1392.3" y="498.2" textLength="43.5" lengthAdjust="spacingAndGlyphs">0609</text>
<text x="1559.9" y="498.2" textLength="43.5" lengthAdjust="spacingAndGlyphs">0610</text>
<text x="1727.5" y="498.2" textLength="43.5" lengthAdjust="spacingAndGlyphs">0611</text>
<text x="1895.1" y="498.2" textLength="43.5" lengthAdjust="spacingAndGlyphs">0612</text>
<text x="51.5" y="666.3" textLength="43.5" lengthAdjust="spacingAndGlyphs">0701</text>
<text x="219.1" y="666.3" textLength="43.5" lengthAdjust="spacingAndGlyphs">0702</text>
<text x="386.7" y="666.3" textLength="43.5" lengthAdjust="spacingAndGlyphs">0703</text>
<text x="554.3" y="666.3" textLength="43.5" lengthAdjust="spacingAndGlyphs">0704</text>
<text x="721.9" y="666.3" textLength="43.5" lengthAdjust="spacingAndGlyphs">0705</text>
<text x="889.5" y="666.3" textLength="43.5" lengthAdjust="spacingAndGlyphs">0706</text>
<text x="1057.1" y="666.3" textLength="43.5" lengthAdjust="spacingAndGlyphs">0707</text>
<text x="1224.7" y="666.3" textLength="43.5" lengthAdjust="spacingAndGlyphs">0708</text>
<text x="1392.3" y="666.3" textLength="43.5" lengthAdjust="spacingAndGlyphs">0709</text>
<text x="1559.9" y="666.3" textLength="43.5" lengthAdjust="spacingAndGlyphs">0710</text>
<text x="1727.5" y="666.3" textLength="43.5" lengthAdjust="spacingAndGlyphs">0711</text>
<text x="1895.1" y="666.3" textLength="43.5" lengthAdjust="spacingAndGlyphs">0712</text>
<text x="51.5" y="836.7" textLength="43.5" lengthAdjust="spacingAndGlyphs">0801</text>
<text x="219.1" y="836.7" textLength="43.5" lengthAdjust="spacingAndGlyphs">0802</text>
<text x="386.7" y="836.7" textLength="43.5" lengthAdjust="spacingAndGlyphs">0803</text>
<text x="554.3" y="836.7" textLength="43.5" lengthAdjust="spacingAndGlyphs">0804</text>
<text x="721.9" y="836.7" textLength="43.5" lengthAdjust="spacingAndGlyphs">0805</text>
<text x="889.5" y="836.7" textLength="43.5" lengthAdjust="spacingAndGlyphs">0806</text>
<text x="1057.1" y="836.7" textLength="43.5" lengthAdjust="spacingAndGlyphs">0807</text>
<text x="1224.7" y="836.7" textLength="43.5" lengthAdjust="spacingAndGlyphs">0808</text>
<text x="1392.3" y="836.7" textLength="43.5" lengthAdjust="spacingAndGlyphs">0809</text>
<text x="1559.9" y="836.7" textLength="43.5" lengthAdjust="spacingAndGlyphs">0810</text>
<text x="1727.5" y="836.7" textLength="43.5" lengthAdjust="spacingAndGlyphs">0811</text>
<text x="1895.1" y="836.7" textLength="43.5" lengthAdjust="spacingAndGlyphs">0812</text>
<text x="51.5" y="1001.3" textLength="43.5" lengthAdjust="spacingAndGlyphs">0901</text>
<text x="219.1" y="1001.3" textLength="43.5" lengthAdjust="spacingAndGlyphs">0902</text>
<text x="386.7" y="1001.3" textLength="43.5" lengthAdjust="spacingAndGlyphs">0903</text>
<text x="554.3" y="1001.3" textLength="43.5" lengthAdjust="spacingAndGlyphs">0904</text>
<text x="721.9" y="1001.3" textLength="43.5" lengthAdjust="spacingAndGlyphs">0905</text>
<text x="889.5" y="1001.3" textLength="43.5" lengthAdjust="spacingAndGlyphs">0906</text>
<text x="1057.1" y="1001.3" textLength="43.5" lengthAdjust="spacingAndGlyphs">0907</text>
<text x="1224.7" y="1001.3" textLength="43.5" lengthAdjust="spacingAndGlyphs">0908</text>
<text x="1392.3" y="1001.3" textLength="43.5" lengthAdjust="spacingAndGlyphs">0909</text>
<text x="1559.9" y="1001.3" textLength="43.5" lengthAdjust="spacingAndGlyphs">0910</text>
<text x="1727.5" y="1001.3" textLength="43.5" lengthAdjust="spacingAndGlyphs">0911</text>
<text x="1895.1" y="1001.3" textLength="43.5" lengthAdjust="spacingAndGlyphs">0912</text>
</g>
<g fill="#77777b" font-size="7.2" text-anchor="middle">
<text x="107.0" y="158.9">6</text>
<text x="51.1" y="214.7">2</text>
<text x="107.0" y="214.7">3</text>
<text x="162.8" y="158.9">4</text>
<text x="274.6" y="158.9">6</text>
<text x="162.8" y="214.7">1</text>
<text x="218.7" y="214.7">2</text>
<text x="274.6" y="214.7">3</text>
<text x="330.4" y="158.9">4</text>
<text x="442.2" y="158.9">6</text>
<text x="330.4" y="214.7">1</text>
<text x="386.3" y="214.7">2</text>
<text x="442.2" y="214.7">3</text>
<text x="498.0" y="158.9">4</text>
<text x="609.8" y="158.9">6</text>
<text x="498.0" y="214.7">1</text>
<text x="553.9" y="214.7">2</text>
<text x="609.8" y="214.7">3</text>
<text x="665.6" y="158.9">4</text>
<text x="777.4" y="158.9">6</text>
<text x="665.6" y="214.7">1</text>
<text x="721.5" y="214.7">2</text>
<text x="777.4" y="214.7">3</text>
<text x="833.2" y="158.9">4</text>
<text x="945.0" y="158.9">6</text>
<text x="833.2" y="214.7">1</text>
<text x="889.1" y="214.7">2</text>
<text x="945.0" y="214.7">3</text>
<text x="1000.8" y="158.9">4</text>
<text x="1112.6" y="158.9">6</text>
<text x="1000.8" y="214.7">1</text>
<text x="1056.7" y="214.7">2</text>
<text x="1112.6" y="214.7">3</text>
<text x="1168.4" y="158.9">4</text>
<text x="1280.2" y="158.9">6</text>
<text x="1168.4" y="214.7">1</text>
<text x="1224.3" y="214.7">2</text>
<text x="1280.2" y="214.7">3</text>
<text x="1336.0" y="158.9">4</text>
<text x="1447.8" y="158.9">6</text>
<text x="1336.0" y="214.7">1</text>
<text x="1391.9" y="214.7">2</text>
<text x="1447.8" y="214.7">3</text>
<text x="1503.6" y="158.9">4</text>
<text x="1615.4" y="158.9">6</text>
<text x="1503.6" y="214.7">1</text>
<text x="1559.5" y="214.7">2</text>
<text x="1615.4" y="214.7">3</text>
<text x="1671.2" y="158.9">4</text>
<text x="1783.0" y="158.9">6</text>
<text x="1671.2" y="214.7">1</text>
<text x="1727.1" y="214.7">2</text>
<text x="1783.0" y="214.7">3</text>
<text x="1838.8" y="158.9">4</text>
<text x="1838.8" y="214.7">1</text>
<text x="1894.7" y="214.7">2</text>
<text x="51.1" y="270.4">8</text>
<text x="107.0" y="270.4">9</text>
<text x="107.0" y="326.2">6</text>
<text x="51.1" y="382.1">2</text>
<text x="107.0" y="382.1">3</text>
<text x="162.8" y="270.4">7</text>
<text x="218.7" y="270.4">8</text>
<text x="274.6" y="270.4">9</text>
<text x="162.8" y="326.2">4</text>
<text x="274.6" y="326.2">6</text>
<text x="162.8" y="382.1">1</text>
<text x="218.7" y="382.1">2</text>
<text x="274.6" y="382.1">3</text>
<text x="330.4" y="270.4">7</text>
<text x="386.3" y="270.4">8</text>
<text x="442.2" y="270.4">9</text>
<text x="330.4" y="326.2">4</text>
<text x="442.2" y="326.2">6</text>
<text x="330.4" y="382.1">1</text>
<text x="386.3" y="382.1">2</text>
<text x="442.2" y="382.1">3</text>
<text x="498.0" y="270.4">7</text>
<text x="553.9" y="270.4">8</text>
<text x="609.8" y="270.4">9</text>
<text x="498.0" y="326.2">4</text>
<text x="609.8" y="326.2">6</text>
<text x="498.0" y="382.1">1</text>
<text x="553.9" y="382.1">2</text>
<text x="609.8" y="382.1">3</text>
<text x="665.6" y="270.4">7</text>
<text x="721.5" y="270.4">8</text>
<text x="777.4" y="270.4">9</text>
<text x="665.6" y="326.2">4</text>
<text x="777.4" y="326.2">6</text>
<text x="665.6" y="382.1">1</text>
<text x="721.5" y="382.1">2</text>
<text x="777.4" y="382.1">3</text>
<text x="833.2" y="270.4">7</text>
<text x="889.1" y="270.4">8</text>
<text x="945.0" y="270.4">9</text>
<text x="833.2" y="326.2">4</text>
<text x="945.0" y="326.2">6</text>
<text x="833.2" y="382.1">1</text>
<text x="889.1" y="382.1">2</text>
<text x="945.0" y="382.1">3</text>
<text x="1000.8" y="270.4">7</text>
<text x="1056.7" y="270.4">8</text>
<text x="1112.6" y="270.4">9</text>
<text x="1000.8" y="326.2">4</text>
<text x="1112.6" y="326.2">6</text>
<text x="1000.8" y="382.1">1</text>
<text x="1056.7" y="382.1">2</text>
<text x="1112.6" y="382.1">3</text>
<text x="1168.4" y="270.4">7</text>
<text x="1224.3" y="270.4">8</text>
<text x="1280.2" y="270.4">9</text>
<text x="1168.4" y="326.2">4</text>
<text x="1280.2" y="326.2">6</text>
<text x="1168.4" y="382.1">1</text>
<text x="1224.3" y="382.1">2</text>
<text x="1280.2" y="382.1">3</text>
<text x="1336.0" y="270.4">7</text>
<text x="1391.9" y="270.4">8</text>
<text x="1447.8" y="270.4">9</text>
<text x="1336.0" y="326.2">4</text>
<text x="1447.8" y="326.2">6</text>
<text x="1336.0" y="382.1">1</text>
<text x="1391.9" y="382.1">2</text>
<text x="1447.8" y="382.1">3</text>
<text x="1503.6" y="270.4">7</text>
<text x="1559.5" y="270.4">8</text>
<text x="1615.4" y="270.4">9</text>
<text x="1503.6" y="326.2">4</text>
<text x="1615.4" y="326.2">6</text>
<text x="1503.6" y="382.1">1</text>
<text x="1559.5" y="382.1">2</text>
<text x="1615.4" y="382.1">3</text>
<text x="1671.2" y="270.4">7</text>
<text x="1727.1" y="270.4">8</text>
<text x="1783.0" y="270.4">9</text>
<text x="1671.2" y="326.2">4</text>
<text x="1783.0" y="326.2">6</text>
<text x="1671.2" y="382.1">1</text>
<text x="1727.1" y="382.1">2</text>
<text x="1783.0" y="382.1">3</text>
<text x="1838.8" y="270.4">7</text>
<text x="1894.7" y="270.4">8</text>
<text x="1838.8" y="326.2">4</text>
<text x="1838.8" y="382.1">1</text>
<text x="1894.7" y="382.1">2</text>
<text x="51.1" y="437.8">8</text>
<text x="107.0" y="437.8">9</text>
<text x="107.0" y="493.6">6</text>
<text x="51.1" y="549.4">2</text>
<text x="107.0" y="549.4">3</text>
<text x="162.8" y="437.8">7</text>
<text x="218.7" y="437.8">8</text>
<text x="274.6" y="437.8">9</text>
<text x="162.8" y="493.6">4</text>
<text x="274.6" y="493.6">6</text>
<text x="162.8" y="549.4">1</text>
<text x="218.7" y="549.4">2</text>
<text x="274.6" y="549.4">3</text>
<text x="330.4" y="437.8">7</text>
<text x="386.3" y="437.8">8</text>
<text x="442.2" y="437.8">9</text>
<text x="330.4" y="493.6">4</text>
<text x="442.2" y="493.6">6</text>
<text x="330.4" y="549.4">1</text>
<text x="386.3" y="549.4">2</text>
<text x="442.2" y="549.4">3</text>
<text x="498.0" y="437.8">7</text>
<text x="553.9" y="437.8">8</text>
<text x="609.8" y="437.8">9</text>
<text x="498.0" y="493.6">4</text>
<text x="609.8" y="493.6">6</text>
<text x="498.0" y="549.4">1</text>
<text x="553.9" y="549.4">2</text>
<text x="609.8" y="549.4">3</text>
<text x="665.6" y="437.8">7</text>
<text x="721.5" y="437.8">8</text>
<text x="777.4" y="437.8">9</text>
<text x="665.6" y="493.6">4</text>
<text x="777.4" y="493.6">6</text>
<text x="665.6" y="549.4">1</text>
<text x="721.5" y="549.4">2</text>
<text x="777.4" y="549.4">3</text>
<text x="833.2" y="437.8">7</text>
<text x="889.1" y="437.8">8</text>
<text x="945.0" y="437.8">9</text>
<text x="833.2" y="493.6">4</text>
<text x="945.0" y="493.6">6</text>
<text x="833.2" y="549.4">1</text>
<text x="889.1" y="549.4">2</text>
<text x="945.0" y="549.4">3</text>
<text x="1000.8" y="437.8">7</text>
<text x="1056.7" y="437.8">8</text>
<text x="1112.6" y="437.8">9</text>
<text x="1000.8" y="493.6">4</text>
<text x="1112.6" y="493.6">6</text>
<text x="1000.8" y="549.4">1</text>
<text x="1056.7" y="549.4">2</text>
<text x="1112.6" y="549.4">3</text>
<text x="1168.4" y="437.8">7</text>
<text x="1224.3" y="437.8">8</text>
<text x="1280.2" y="437.8">9</text>
<text x="1168.4" y="493.6">4</text>
<text x="1280.2" y="493.6">6</text>
<text x="1168.4" y="549.4">1</text>
<text x="1224.3" y="549.4">2</text>
<text x="1280.2" y="549.4">3</text>
<text x="1336.0" y="437.8">7</text>
<text x="1391.9" y="437.8">8</text>
<text x="1447.8" y="437.8">9</text>
<text x="1336.0" y="493.6">4</text>
<text x="1447.8" y="493.6">6</text>
<text x="1336.0" y="549.4">1</text>
<text x="1391.9" y="549.4">2</text>
<text x="1447.8" y="549.4">3</text>
<text x="1503.6" y="437.8">7</text>
<text x="1559.5" y="437.8">8</text>
<text x="1615.4" y="437.8">9</text>
<text x="1503.6" y="493.6">4</text>
<text x="1615.4" y="493.6">6</text>
<text x="1503.6" y="549.4">1</text>
<text x="1559.5" y="549.4">2</text>
<text x="1615.4" y="549.4">3</text>
<text x="1671.2" y="437.8">7</text>
<text x="1727.1" y="437.8">8</text>
<text x="1783.0" y="437.8">9</text>
<text x="1671.2" y="493.6">4</text>
<text x="1783.0" y="493.6">6</text>
<text x="1671.2" y="549.4">1</text>
<text x="1727.1" y="549.4">2</text>
<text x="1783.0" y="549.4">3</text>
<text x="1838.8" y="437.8">7</text>
<text x="1894.7" y="437.8">8</text>
<text x="1838.8" y="493.6">4</text>
<text x="1838.8" y="549.4">1</text>
<text x="1894.7" y="549.4">2</text>
<text x="51.1" y="605.2">8</text>
<text x="107.0" y="605.2">9</text>
<text x="107.0" y="661.1">6</text>
<text x="51.1" y="716.9">2</text>
<text x="107.0" y="716.9">3</text>
<text x="162.8" y="605.2">7</text>
<text x="218.7" y="605.2">8</text>
<text x="274.6" y="605.2">9</text>
<text x="162.8" y="661.1">4</text>
<text x="274.6" y="661.1">6</text>
<text x="162.8" y="716.9">1</text>
<text x="218.7" y="716.9">2</text>
<text x="274.6" y="716.9">3</text>
<text x="330.4" y="605.2">7</text>
<text x="386.3" y="605.2">8</text>
<text x="442.2" y="605.2">9</text>
<text x="330.4" y="661.1">4</text>
<text x="442.2" y="661.1">6</text>
<text x="330.4" y="716.9">1</text>
<text x="386.3" y="716.9">2</text>
<text x="442.2" y="716.9">3</text>
<text x="498.0" y="605.2">7</text>
<text x="553.9" y="605.2">8</text>
<text x="609.8" y="605.2">9</text>
<text x="498.0" y="661.1">4</text>
<text x="609.8" y="661.1">6</text>
<text x="498.0" y="716.9">1</text>
<text x="553.9" y="716.9">2</text>
<text x="609.8" y="716.9">3</text>
<text x="665.6" y="605.2">7</text>
<text x="721.5" y="605.2">8</text>
<text x="777.4" y="605.2">9</text>
<text x="665.6" y="661.1">4</text>
<text x="777.4" y="661.1">6</text>
<text x="665.6" y="716.9">1</text>
<text x="721.5" y="716.9">2</text>
<text x="777.4" y="716.9">3</text>
<text x="833.2" y="605.2">7</text>
<text x="889.1" y="605.2">8</text>
<text x="945.0" y="605.2">9</text>
<text x="833.2" y="661.1">4</text>
<text x="945.0" y="661.1">6</text>
<text x="833.2" y="716.9">1</text>
<text x="889.1" y="716.9">2</text>
<text x="945.0" y="716.9">3</text>
<text x="1000.8" y="605.2">7</text>
<text x="1056.7" y="605.2">8</text>
<text x="1112.6" y="605.2">9</text>
<text x="1000.8" y="661.1">4</text>
<text x="1112.6" y="661.1">6</text>
<text x="1000.8" y="716.9">1</text>
<text x="1056.7" y="716.9">2</text>
<text x="1112.6" y="716.9">3</text>
<text x="1168.4" y="605.2">7</text>
<text x="1224.3" y="605.2">8</text>
<text x="1280.2" y="605.2">9</text>
<text x="1168.4" y="661.1">4</text>
<text x="1280.2" y="661.1">6</text>
<text x="1168.4" y="716.9">1</text>
<text x="1224.3" y="716.9">2</text>
<text x="1280.2" y="716.9">3</text>
<text x="1336.0" y="605.2">7</text>
<text x="1391.9" y="605.2">8</text>
<text x="1447.8" y="605.2">9</text>
<text x="1336.0" y="661.1">4</text>
<text x="1447.8" y="661.1">6</text>
<text x="1336.0" y="716.9">1</text>
<text x="1391.9" y="716.9">2</text>
<text x="1447.8" y="716.9">3</text>
<text x="1503.6" y="605.2">7</text>
<text x="1559.5" y="605.2">8</text>
<text x="1615.4" y="605.2">9</text>
<text x="1503.6" y="661.1">4</text>
<text x="1615.4" y="661.1">6</text>
<text x="1503.6" y="716.9">1</text>
<text x="1559.5" y="716.9">2</text>
<text x="1615.4" y="716.9">3</text>
<text x="1671.2" y="605.2">7</text>
<text x="1727.1" y="605.2">8</text>
<text x="1783.0" y="605.2">9</text>
<text x="1671.2" y="661.1">4</text>
<text x="1783.0" y="661.1">6</text>
<text x="1671.2" y="716.9">1</text>
<text x="1727.1" y="716.9">2</text>
<text x="1783.0" y="716.9">3</text>
<text x="1838.8" y="605.2">7</text>
<text x="1894.7" y="605.2">8</text>
<text x="1838.8" y="661.1">4</text>
<text x="1838.8" y="716.9">1</text>
<text x="1894.7" y="716.9">2</text>
<text x="51.1" y="772.6">8</text>
<text x="107.0" y="772.6">9</text>
<text x="107.0" y="828.5">6</text>
<text x="51.1" y="884.2">2</text>
<text x="107.0" y="884.2">3</text>
<text x="162.8" y="772.6">7</text>
<text x="218.7" y="772.6">8</text>
<text x="274.6" y="772.6">9</text>
<text x="162.8" y="828.5">4</text>
<text x="274.6" y="828.5">6</text>
<text x="162.8" y="884.2">1</text>
<text x="218.7" y="884.2">2</text>
<text x="274.6" y="884.2">3</text>
<text x="330.4" y="772.6">7</text>
<text x="386.3" y="772.6">8</text>
<text x="442.2" y="772.6">9</text>
<text x="330.4" y="828.5">4</text>
<text x="442.2" y="828.5">6</text>
<text x="330.4" y="884.2">1</text>
<text x="386.3" y="884.2">2</text>
<text x="442.2" y="884.2">3</text>
<text x="498.0" y="772.6">7</text>
<text x="553.9" y="772.6">8</text>
<text x="609.8" y="772.6">9</text>
<text x="498.0" y="828.5">4</text>
<text x="609.8" y="828.5">6</text>
<text x="498.0" y="884.2">1</text>
<text x="553.9" y="884.2">2</text>
<text x="609.8" y="884.2">3</text>
<text x="665.6" y="772.6">7</text>
<text x="721.5" y="772.6">8</text>
<text x="777.4" y="772.6">9</text>
<text x="665.6" y="828.5">4</text>
<text x="777.4" y="828.5">6</text>
<text x="665.6" y="884.2">1</text>
<text x="721.5" y="884.2">2</text>
<text x="777.4" y="884.2">3</text>
<text x="833.2" y="772.6">7</text>
<text x="889.1" y="772.6">8</text>
<text x="945.0" y="772.6">9</text>
<text x="833.2" y="828.5">4</text>
<text x="945.0" y="828.5">6</text>
<text x="833.2" y="884.2">1</text>
<text x="889.1" y="884.2">2</text>
<text x="945.0" y="884.2">3</text>
<text x="1000.8" y="772.6">7</text>
<text x="1056.7" y="772.6">8</text>
<text x="1112.6" y="772.6">9</text>
<text x="1000.8" y="828.5">4</text>
<text x="1112.6" y="828.5">6</text>
<text x="1000.8" y="884.2">1</text>
<text x="1056.7" y="884.2">2</text>
<text x="1112.6" y="884.2">3</text>
<text x="1168.4" y="772.6">7</text>
<text x="1224.3" y="772.6">8</text>
<text x="1280.2" y="772.6">9</text>
<text x="1168.4" y="828.5">4</text>
<text x="1280.2" y="828.5">6</text>
<text x="1168.4" y="884.2">1</text>
<text x="1224.3" y="884.2">2</text>
<text x="1280.2" y="884.2">3</text>
<text x="1336.0" y="772.6">7</text>
<text x="1391.9" y="772.6">8</text>
<text x="1447.8" y="772.6">9</text>
<text x="1336.0" y="828.5">4</text>
<text x="1447.8" y="828.5">6</text>
<text x="1336.0" y="884.2">1</text>
<text x="1391.9" y="884.2">2</text>
<text x="1447.8" y="884.2">3</text>
<text x="1503.6" y="772.6">7</text>
<text x="1559.5" y="772.6">8</text>
<text x="1615.4" y="772.6">9</text>
<text x="1503.6" y="828.5">4</text>
<text x="1615.4" y="828.5">6</text>
<text x="1503.6" y="884.2">1</text>
<text x="1559.5" y="884.2">2</text>
<text x="1615.4" y="884.2">3</text>
<text x="1671.2" y="772.6">7</text>
<text x="1727.1" y="772.6">8</text>
<text x="1783.0" y="772.6">9</text>
<text x="1671.2" y="828.5">4</text>
<text x="1783.0" y="828.5">6</text>
<text x="1671.2" y="884.2">1</text>
<text x="1727.1" y="884.2">2</text>
<text x="1783.0" y="884.2">3</text>
<text x="1838.8" y="772.6">7</text>
<text x="1894.7" y="772.6">8</text>
<text x="1838.8" y="828.5">4</text>
<text x="1838.8" y="884.2">1</text>
<text x="1894.7" y="884.2">2</text>
<text x="51.1" y="940.0">8</text>
<text x="107.0" y="940.0">9</text>
<text x="107.0" y="995.9">6</text>
<text x="51.1" y="1051.6">2</text>
<text x="107.0" y="1051.6">3</text>
<text x="162.8" y="940.0">7</text>
<text x="218.7" y="940.0">8</text>
<text x="274.6" y="940.0">9</text>
<text x="162.8" y="995.9">4</text>
<text x="274.6" y="995.9">6</text>
<text x="162.8" y="1051.6">1</text>
<text x="218.7" y="1051.6">2</text>
<text x="274.6" y="1051.6">3</text>
<text x="330.4" y="940.0">7</text>
<text x="386.3" y="940.0">8</text>
<text x="442.2" y="940.0">9</text>
<text x="330.4" y="995.9">4</text>
<text x="442.2" y="995.9">6</text>
<text x="330.4" y="1051.6">1</text>
<text x="386.3" y="1051.6">2</text>
<text x="442.2" y="1051.6">3</text>
<text x="498.0" y="940.0">7</text>
<text x="553.9" y="940.0">8</text>
<text x="609.8" y="940.0">9</text>
<text x="498.0" y="995.9">4</text>
<text x="609.8" y="995.9">6</text>
<text x="498.0" y="1051.6">1</text>
<text x="553.9" y="1051.6">2</text>
<text x="609.8" y="1051.6">3</text>
<text x="665.6" y="940.0">7</text>
<text x="721.5" y="940.0">8</text>
<text x="777.4" y="940.0">9</text>
<text x="665.6" y="995.9">4</text>
<text x="777.4" y="995.9">6</text>
<text x="665.6" y="1051.6">1</text>
<text x="721.5" y="1051.6">2</text>
<text x="777.4" y="1051.6">3</text>
<text x="833.2" y="940.0">7</text>
<text x="889.1" y="940.0">8</text>
<text x="945.0" y="940.0">9</text>
<text x="833.2" y="995.9">4</text>
<text x="945.0" y="995.9">6</text>
<text x="833.2" y="1051.6">1</text>
<text x="889.1" y="1051.6">2</text>
<text x="945.0" y="1051.6">3</text>
<text x="1000.8" y="940.0">7</text>
<text x="1056.7" y="940.0">8</text>
<text x="1112.6" y="940.0">9</text>
<text x="1000.8" y="995.9">4</text>
<text x="1112.6" y="995.9">6</text>
<text x="1000.8" y="1051.6">1</text>
<text x="1056.7" y="1051.6">2</text>
<text x="1112.6" y="1051.6">3</text>
<text x="1168.4" y="940.0">7</text>
<text x="1224.3" y="940.0">8</text>
<text x="1280.2" y="940.0">9</text>
<text x="1168.4" y="995.9">4</text>
<text x="1280.2" y="995.9">6</text>
<text x="1168.4" y="1051.6">1</text>
<text x="1224.3" y="1051.6">2</text>
<text x="1280.2" y="1051.6">3</text>
<text x="1336.0" y="940.0">7</text>
<text x="1391.9" y="940.0">8</text>
<text x="1447.8" y="940.0">9</text>
<text x="1336.0" y="995.9">4</text>
<text x="1447.8" y="995.9">6</text>
<text x="1336.0" y="1051.6">1</text>
<text x="1391.9" y="1051.6">2</text>
<text x="1447.8" y="1051.6">3</text>
<text x="1503.6" y="940.0">7</text>
<text x="1559.5" y="940.0">8</text>
<text x="1615.4" y="940.0">9</text>
<text x="1503.6" y="995.9">4</text>
<text x="1615.4" y="995.9">6</text>
<text x="1503.6" y="1051.6">1</text>
<text x="1559.5" y="1051.6">2</text>
<text x="1615.4" y="1051.6">3</text>
<text x="1671.2" y="940.0">7</text>
<text x="1727.1" y="940.0">8</text>
<text x="1783.0" y="940.0">9</text>
<text x="1671.2" y="995.9">4</text>
<text x="1783.0" y="995.9">6</text>
<text x="1671.2" y="1051.6">1</text>
<text x="1727.1" y="1051.6">2</text>
<text x="1783.0" y="1051.6">3</text>
<text x="1838.8" y="940.0">7</text>
<text x="1894.7" y="940.0">8</text>
<text x="1838.8" y="995.9">4</text>
<text x="1838.8" y="1051.6">1</text>
<text x="1894.7" y="1051.6">2</text>
</g>
<rect x="439.0" y="142.3" width="10.6" height="10.6" fill="#e4c6bd" stroke="#4c3c36" stroke-width="1.2"/>
<path transform="translate(444.3,147.6) rotate(45) scale(0.5)" d="M0,-7.6C0.9,-7.6 1.2,-5.5 1.25,-3.4C4,-3.2 7.9,-2.2 7.9,-0.6C7.9,0.6 4,0.9 1.1,1.1L0.65,5.6L3.1,6.1C3.5,6.2 3.5,7.5 3.1,7.6L-3.1,7.6C-3.5,7.5 -3.5,6.2 -3.1,6.1L-0.65,5.6L-1.1,1.1C-4,0.9 -7.9,0.6 -7.9,-0.6C-7.9,-2.2 -4,-3.2 -1.25,-3.4C-1.2,-5.5 -0.9,-7.6 0,-7.6Z" fill="#3a2622"/>
<rect x="513.8" y="201.0" width="10.6" height="10.6" fill="#e4c6bd" stroke="#4c3c36" stroke-width="1.2"/>
<path transform="translate(519.1,206.3) rotate(45) scale(0.5)" d="M0,-7.6C0.9,-7.6 1.2,-5.5 1.25,-3.4C4,-3.2 7.9,-2.2 7.9,-0.6C7.9,0.6 4,0.9 1.1,1.1L0.65,5.6L3.1,6.1C3.5,6.2 3.5,7.5 3.1,7.6L-3.1,7.6C-3.5,7.5 -3.5,6.2 -3.1,6.1L-0.65,5.6L-1.1,1.1C-4,0.9 -7.9,0.6 -7.9,-0.6C-7.9,-2.2 -4,-3.2 -1.25,-3.4C-1.2,-5.5 -0.9,-7.6 0,-7.6Z" fill="#3a2622"/>
<rect x="1209.3" y="176.0" width="10.6" height="10.6" fill="#e4c6bd" stroke="#4c3c36" stroke-width="1.2"/>
<path transform="translate(1214.6,181.3) rotate(45) scale(0.5)" d="M0,-7.6C0.9,-7.6 1.2,-5.5 1.25,-3.4C4,-3.2 7.9,-2.2 7.9,-0.6C7.9,0.6 4,0.9 1.1,1.1L0.65,5.6L3.1,6.1C3.5,6.2 3.5,7.5 3.1,7.6L-3.1,7.6C-3.5,7.5 -3.5,6.2 -3.1,6.1L-0.65,5.6L-1.1,1.1C-4,0.9 -7.9,0.6 -7.9,-0.6C-7.9,-2.2 -4,-3.2 -1.25,-3.4C-1.2,-5.5 -0.9,-7.6 0,-7.6Z" fill="#3a2622"/>
<rect x="273.0" y="281.0" width="10.6" height="10.6" fill="#e4c6bd" stroke="#4c3c36" stroke-width="1.2"/>
<path transform="translate(278.3,286.3) rotate(45) scale(0.5)" d="M0,-7.6C0.9,-7.6 1.2,-5.5 1.25,-3.4C4,-3.2 7.9,-2.2 7.9,-0.6C7.9,0.6 4,0.9 1.1,1.1L0.65,5.6L3.1,6.1C3.5,6.2 3.5,7.5 3.1,7.6L-3.1,7.6C-3.5,7.5 -3.5,6.2 -3.1,6.1L-0.65,5.6L-1.1,1.1C-4,0.9 -7.9,0.6 -7.9,-0.6C-7.9,-2.2 -4,-3.2 -1.25,-3.4C-1.2,-5.5 -0.9,-7.6 0,-7.6Z" fill="#3a2622"/>
<rect x="303.0" y="385.3" width="10.6" height="10.6" fill="#e4c6bd" stroke="#4c3c36" stroke-width="1.2"/>
<path transform="translate(308.3,390.6) rotate(45) scale(0.5)" d="M0,-7.6C0.9,-7.6 1.2,-5.5 1.25,-3.4C4,-3.2 7.9,-2.2 7.9,-0.6C7.9,0.6 4,0.9 1.1,1.1L0.65,5.6L3.1,6.1C3.5,6.2 3.5,7.5 3.1,7.6L-3.1,7.6C-3.5,7.5 -3.5,6.2 -3.1,6.1L-0.65,5.6L-1.1,1.1C-4,0.9 -7.9,0.6 -7.9,-0.6C-7.9,-2.2 -4,-3.2 -1.25,-3.4C-1.2,-5.5 -0.9,-7.6 0,-7.6Z" fill="#3a2622"/>
<rect x="246.2" y="481.2" width="10.6" height="10.6" fill="#e4c6bd" stroke="#4c3c36" stroke-width="1.2"/>
<path transform="translate(251.5,486.5) rotate(45) scale(0.5)" d="M0,-7.6C0.9,-7.6 1.2,-5.5 1.25,-3.4C4,-3.2 7.9,-2.2 7.9,-0.6C7.9,0.6 4,0.9 1.1,1.1L0.65,5.6L3.1,6.1C3.5,6.2 3.5,7.5 3.1,7.6L-3.1,7.6C-3.5,7.5 -3.5,6.2 -3.1,6.1L-0.65,5.6L-1.1,1.1C-4,0.9 -7.9,0.6 -7.9,-0.6C-7.9,-2.2 -4,-3.2 -1.25,-3.4C-1.2,-5.5 -0.9,-7.6 0,-7.6Z" fill="#3a2622"/>
<rect x="561.3" y="464.3" width="10.6" height="10.6" fill="#e4c6bd" stroke="#4c3c36" stroke-width="1.2"/>
<path transform="translate(566.6,469.6) rotate(45) scale(0.5)" d="M0,-7.6C0.9,-7.6 1.2,-5.5 1.25,-3.4C4,-3.2 7.9,-2.2 7.9,-0.6C7.9,0.6 4,0.9 1.1,1.1L0.65,5.6L3.1,6.1C3.5,6.2 3.5,7.5 3.1,7.6L-3.1,7.6C-3.5,7.5 -3.5,6.2 -3.1,6.1L-0.65,5.6L-1.1,1.1C-4,0.9 -7.9,0.6 -7.9,-0.6C-7.9,-2.2 -4,-3.2 -1.25,-3.4C-1.2,-5.5 -0.9,-7.6 0,-7.6Z" fill="#3a2622"/>
<rect x="800.8" y="467.0" width="10.6" height="10.6" fill="#e4c6bd" stroke="#4c3c36" stroke-width="1.2"/>
<path transform="translate(806.1,472.3) rotate(45) scale(0.5)" d="M0,-7.6C0.9,-7.6 1.2,-5.5 1.25,-3.4C4,-3.2 7.9,-2.2 7.9,-0.6C7.9,0.6 4,0.9 1.1,1.1L0.65,5.6L3.1,6.1C3.5,6.2 3.5,7.5 3.1,7.6L-3.1,7.6C-3.5,7.5 -3.5,6.2 -3.1,6.1L-0.65,5.6L-1.1,1.1C-4,0.9 -7.9,0.6 -7.9,-0.6C-7.9,-2.2 -4,-3.2 -1.25,-3.4C-1.2,-5.5 -0.9,-7.6 0,-7.6Z" fill="#3a2622"/>
<rect x="754.5" y="487.0" width="10.6" height="10.6" fill="#e4c6bd" stroke="#4c3c36" stroke-width="1.2"/>
<path transform="translate(759.8,492.3) rotate(45) scale(0.5)" d="M0,-7.6C0.9,-7.6 1.2,-5.5 1.25,-3.4C4,-3.2 7.9,-2.2 7.9,-0.6C7.9,0.6 4,0.9 1.1,1.1L0.65,5.6L3.1,6.1C3.5,6.2 3.5,7.5 3.1,7.6L-3.1,7.6C-3.5,7.5 -3.5,6.2 -3.1,6.1L-0.65,5.6L-1.1,1.1C-4,0.9 -7.9,0.6 -7.9,-0.6C-7.9,-2.2 -4,-3.2 -1.25,-3.4C-1.2,-5.5 -0.9,-7.6 0,-7.6Z" fill="#3a2622"/>
<rect x="528.8" y="531.0" width="10.6" height="10.6" fill="#e4c6bd" stroke="#4c3c36" stroke-width="1.2"/>
<path transform="translate(534.1,536.3) rotate(45) scale(0.5)" d="M0,-7.6C0.9,-7.6 1.2,-5.5 1.25,-3.4C4,-3.2 7.9,-2.2 7.9,-0.6C7.9,0.6 4,0.9 1.1,1.1L0.65,5.6L3.1,6.1C3.5,6.2 3.5,7.5 3.1,7.6L-3.1,7.6C-3.5,7.5 -3.5,6.2 -3.1,6.1L-0.65,5.6L-1.1,1.1C-4,0.9 -7.9,0.6 -7.9,-0.6C-7.9,-2.2 -4,-3.2 -1.25,-3.4C-1.2,-5.5 -0.9,-7.6 0,-7.6Z" fill="#3a2622"/>
<rect x="1188.0" y="422.5" width="10.6" height="10.6" fill="#e4c6bd" stroke="#4c3c36" stroke-width="1.2"/>
<path transform="translate(1193.3,427.8) rotate(45) scale(0.5)" d="M0,-7.6C0.9,-7.6 1.2,-5.5 1.25,-3.4C4,-3.2 7.9,-2.2 7.9,-0.6C7.9,0.6 4,0.9 1.1,1.1L0.65,5.6L3.1,6.1C3.5,6.2 3.5,7.5 3.1,7.6L-3.1,7.6C-3.5,7.5 -3.5,6.2 -3.1,6.1L-0.65,5.6L-1.1,1.1C-4,0.9 -7.9,0.6 -7.9,-0.6C-7.9,-2.2 -4,-3.2 -1.25,-3.4C-1.2,-5.5 -0.9,-7.6 0,-7.6Z" fill="#3a2622"/>
<rect x="1330.3" y="481.3" width="10.6" height="10.6" fill="#e4c6bd" stroke="#4c3c36" stroke-width="1.2"/>
<path transform="translate(1335.6,486.6) rotate(45) scale(0.5)" d="M0,-7.6C0.9,-7.6 1.2,-5.5 1.25,-3.4C4,-3.2 7.9,-2.2 7.9,-0.6C7.9,0.6 4,0.9 1.1,1.1L0.65,5.6L3.1,6.1C3.5,6.2 3.5,7.5 3.1,7.6L-3.1,7.6C-3.5,7.5 -3.5,6.2 -3.1,6.1L-0.65,5.6L-1.1,1.1C-4,0.9 -7.9,0.6 -7.9,-0.6C-7.9,-2.2 -4,-3.2 -1.25,-3.4C-1.2,-5.5 -0.9,-7.6 0,-7.6Z" fill="#3a2622"/>
<rect x="1405.0" y="300.5" width="10.6" height="10.6" fill="#e4c6bd" stroke="#4c3c36" stroke-width="1.2"/>
<path transform="translate(1410.3,305.8) rotate(45) scale(0.5)" d="M0,-7.6C0.9,-7.6 1.2,-5.5 1.25,-3.4C4,-3.2 7.9,-2.2 7.9,-0.6C7.9,0.6 4,0.9 1.1,1.1L0.65,5.6L3.1,6.1C3.5,6.2 3.5,7.5 3.1,7.6L-3.1,7.6C-3.5,7.5 -3.5,6.2 -3.1,6.1L-0.65,5.6L-1.1,1.1C-4,0.9 -7.9,0.6 -7.9,-0.6C-7.9,-2.2 -4,-3.2 -1.25,-3.4C-1.2,-5.5 -0.9,-7.6 0,-7.6Z" fill="#3a2622"/>
<rect x="1397.0" y="503.2" width="10.6" height="10.6" fill="#e4c6bd" stroke="#4c3c36" stroke-width="1.2"/>
<path transform="translate(1402.3,508.5) rotate(45) scale(0.5)" d="M0,-7.6C0.9,-7.6 1.2,-5.5 1.25,-3.4C4,-3.2 7.9,-2.2 7.9,-0.6C7.9,0.6 4,0.9 1.1,1.1L0.65,5.6L3.1,6.1C3.5,6.2 3.5,7.5 3.1,7.6L-3.1,7.6C-3.5,7.5 -3.5,6.2 -3.1,6.1L-0.65,5.6L-1.1,1.1C-4,0.9 -7.9,0.6 -7.9,-0.6C-7.9,-2.2 -4,-3.2 -1.25,-3.4C-1.2,-5.5 -0.9,-7.6 0,-7.6Z" fill="#3a2622"/>
<rect x="1528.0" y="515.3" width="10.6" height="10.6" fill="#e4c6bd" stroke="#4c3c36" stroke-width="1.2"/>
<path transform="translate(1533.3,520.6) rotate(45) scale(0.5)" d="M0,-7.6C0.9,-7.6 1.2,-5.5 1.25,-3.4C4,-3.2 7.9,-2.2 7.9,-0.6C7.9,0.6 4,0.9 1.1,1.1L0.65,5.6L3.1,6.1C3.5,6.2 3.5,7.5 3.1,7.6L-3.1,7.6C-3.5,7.5 -3.5,6.2 -3.1,6.1L-0.65,5.6L-1.1,1.1C-4,0.9 -7.9,0.6 -7.9,-0.6C-7.9,-2.2 -4,-3.2 -1.25,-3.4C-1.2,-5.5 -0.9,-7.6 0,-7.6Z" fill="#3a2622"/>
<rect x="460.3" y="702.0" width="10.6" height="10.6" fill="#e4c6bd" stroke="#4c3c36" stroke-width="1.2"/>
<path transform="translate(465.6,707.3) rotate(45) scale(0.5)" d="M0,-7.6C0.9,-7.6 1.2,-5.5 1.25,-3.4C4,-3.2 7.9,-2.2 7.9,-0.6C7.9,0.6 4,0.9 1.1,1.1L0.65,5.6L3.1,6.1C3.5,6.2 3.5,7.5 3.1,7.6L-3.1,7.6C-3.5,7.5 -3.5,6.2 -3.1,6.1L-0.65,5.6L-1.1,1.1C-4,0.9 -7.9,0.6 -7.9,-0.6C-7.9,-2.2 -4,-3.2 -1.25,-3.4C-1.2,-5.5 -0.9,-7.6 0,-7.6Z" fill="#3a2622"/>
<rect x="562.5" y="558.2" width="10.6" height="10.6" fill="#e4c6bd" stroke="#4c3c36" stroke-width="1.2"/>
<path transform="translate(567.8,563.5) rotate(45) scale(0.5)" d="M0,-7.6C0.9,-7.6 1.2,-5.5 1.25,-3.4C4,-3.2 7.9,-2.2 7.9,-0.6C7.9,0.6 4,0.9 1.1,1.1L0.65,5.6L3.1,6.1C3.5,6.2 3.5,7.5 3.1,7.6L-3.1,7.6C-3.5,7.5 -3.5,6.2 -3.1,6.1L-0.65,5.6L-1.1,1.1C-4,0.9 -7.9,0.6 -7.9,-0.6C-7.9,-2.2 -4,-3.2 -1.25,-3.4C-1.2,-5.5 -0.9,-7.6 0,-7.6Z" fill="#3a2622"/>
<rect x="476.5" y="800.2" width="10.6" height="10.6" fill="#e4c6bd" stroke="#4c3c36" stroke-width="1.2"/>
<path transform="translate(481.8,805.5) rotate(45) scale(0.5)" d="M0,-7.6C0.9,-7.6 1.2,-5.5 1.25,-3.4C4,-3.2 7.9,-2.2 7.9,-0.6C7.9,0.6 4,0.9 1.1,1.1L0.65,5.6L3.1,6.1C3.5,6.2 3.5,7.5 3.1,7.6L-3.1,7.6C-3.5,7.5 -3.5,6.2 -3.1,6.1L-0.65,5.6L-1.1,1.1C-4,0.9 -7.9,0.6 -7.9,-0.6C-7.9,-2.2 -4,-3.2 -1.25,-3.4C-1.2,-5.5 -0.9,-7.6 0,-7.6Z" fill="#3a2622"/>
<rect x="1371.0" y="725.3" width="10.6" height="10.6" fill="#e4c6bd" stroke="#4c3c36" stroke-width="1.2"/>
<path transform="translate(1376.3,730.6) rotate(45) scale(0.5)" d="M0,-7.6C0.9,-7.6 1.2,-5.5 1.25,-3.4C4,-3.2 7.9,-2.2 7.9,-0.6C7.9,0.6 4,0.9 1.1,1.1L0.65,5.6L3.1,6.1C3.5,6.2 3.5,7.5 3.1,7.6L-3.1,7.6C-3.5,7.5 -3.5,6.2 -3.1,6.1L-0.65,5.6L-1.1,1.1C-4,0.9 -7.9,0.6 -7.9,-0.6C-7.9,-2.2 -4,-3.2 -1.25,-3.4C-1.2,-5.5 -0.9,-7.6 0,-7.6Z" fill="#3a2622"/>
<rect x="1074.0" y="809.0" width="10.6" height="10.6" fill="#e4c6bd" stroke="#4c3c36" stroke-width="1.2"/>
<path transform="translate(1079.3,814.3) rotate(45) scale(0.5)" d="M0,-7.6C0.9,-7.6 1.2,-5.5 1.25,-3.4C4,-3.2 7.9,-2.2 7.9,-0.6C7.9,0.6 4,0.9 1.1,1.1L0.65,5.6L3.1,6.1C3.5,6.2 3.5,7.5 3.1,7.6L-3.1,7.6C-3.5,7.5 -3.5,6.2 -3.1,6.1L-0.65,5.6L-1.1,1.1C-4,0.9 -7.9,0.6 -7.9,-0.6C-7.9,-2.2 -4,-3.2 -1.25,-3.4C-1.2,-5.5 -0.9,-7.6 0,-7.6Z" fill="#3a2622"/>
<rect x="1503.0" y="558.2" width="10.6" height="10.6" fill="#e4c6bd" stroke="#4c3c36" stroke-width="1.2"/>
<path transform="translate(1508.3,563.5) rotate(45) scale(0.5)" d="M0,-7.6C0.9,-7.6 1.2,-5.5 1.25,-3.4C4,-3.2 7.9,-2.2 7.9,-0.6C7.9,0.6 4,0.9 1.1,1.1L0.65,5.6L3.1,6.1C3.5,6.2 3.5,7.5 3.1,7.6L-3.1,7.6C-3.5,7.5 -3.5,6.2 -3.1,6.1L-0.65,5.6L-1.1,1.1C-4,0.9 -7.9,0.6 -7.9,-0.6C-7.9,-2.2 -4,-3.2 -1.25,-3.4C-1.2,-5.5 -0.9,-7.6 0,-7.6Z" fill="#3a2622"/>
<rect x="1637.0" y="656.3" width="10.6" height="10.6" fill="#e4c6bd" stroke="#4c3c36" stroke-width="1.2"/>
<path transform="translate(1642.3,661.6) rotate(45) scale(0.5)" d="M0,-7.6C0.9,-7.6 1.2,-5.5 1.25,-3.4C4,-3.2 7.9,-2.2 7.9,-0.6C7.9,0.6 4,0.9 1.1,1.1L0.65,5.6L3.1,6.1C3.5,6.2 3.5,7.5 3.1,7.6L-3.1,7.6C-3.5,7.5 -3.5,6.2 -3.1,6.1L-0.65,5.6L-1.1,1.1C-4,0.9 -7.9,0.6 -7.9,-0.6C-7.9,-2.2 -4,-3.2 -1.25,-3.4C-1.2,-5.5 -0.9,-7.6 0,-7.6Z" fill="#3a2622"/>
<rect x="1690.0" y="676.2" width="10.6" height="10.6" fill="#e4c6bd" stroke="#4c3c36" stroke-width="1.2"/>
<path transform="translate(1695.3,681.5) rotate(45) scale(0.5)" d="M0,-7.6C0.9,-7.6 1.2,-5.5 1.25,-3.4C4,-3.2 7.9,-2.2 7.9,-0.6C7.9,0.6 4,0.9 1.1,1.1L0.65,5.6L3.1,6.1C3.5,6.2 3.5,7.5 3.1,7.6L-3.1,7.6C-3.5,7.5 -3.5,6.2 -3.1,6.1L-0.65,5.6L-1.1,1.1C-4,0.9 -7.9,0.6 -7.9,-0.6C-7.9,-2.2 -4,-3.2 -1.25,-3.4C-1.2,-5.5 -0.9,-7.6 0,-7.6Z" fill="#3a2622"/>
<rect x="1657.5" y="710.5" width="10.6" height="10.6" fill="#e4c6bd" stroke="#4c3c36" stroke-width="1.2"/>
<path transform="translate(1662.8,715.8) rotate(45) scale(0.5)" d="M0,-7.6C0.9,-7.6 1.2,-5.5 1.25,-3.4C4,-3.2 7.9,-2.2 7.9,-0.6C7.9,0.6 4,0.9 1.1,1.1L0.65,5.6L3.1,6.1C3.5,6.2 3.5,7.5 3.1,7.6L-3.1,7.6C-3.5,7.5 -3.5,6.2 -3.1,6.1L-0.65,5.6L-1.1,1.1C-4,0.9 -7.9,0.6 -7.9,-0.6C-7.9,-2.2 -4,-3.2 -1.25,-3.4C-1.2,-5.5 -0.9,-7.6 0,-7.6Z" fill="#3a2622"/>
<rect x="1503.3" y="736.3" width="10.6" height="10.6" fill="#e4c6bd" stroke="#4c3c36" stroke-width="1.2"/>
<path transform="translate(1508.6,741.6) rotate(45) scale(0.5)" d="M0,-7.6C0.9,-7.6 1.2,-5.5 1.25,-3.4C4,-3.2 7.9,-2.2 7.9,-0.6C7.9,0.6 4,0.9 1.1,1.1L0.65,5.6L3.1,6.1C3.5,6.2 3.5,7.5 3.1,7.6L-3.1,7.6C-3.5,7.5 -3.5,6.2 -3.1,6.1L-0.65,5.6L-1.1,1.1C-4,0.9 -7.9,0.6 -7.9,-0.6C-7.9,-2.2 -4,-3.2 -1.25,-3.4C-1.2,-5.5 -0.9,-7.6 0,-7.6Z" fill="#3a2622"/>
<rect x="1763.0" y="760.3" width="10.6" height="10.6" fill="#e4c6bd" stroke="#4c3c36" stroke-width="1.2"/>
<path transform="translate(1768.3,765.6) rotate(45) scale(0.5)" d="M0,-7.6C0.9,-7.6 1.2,-5.5 1.25,-3.4C4,-3.2 7.9,-2.2 7.9,-0.6C7.9,0.6 4,0.9 1.1,1.1L0.65,5.6L3.1,6.1C3.5,6.2 3.5,7.5 3.1,7.6L-3.1,7.6C-3.5,7.5 -3.5,6.2 -3.1,6.1L-0.65,5.6L-1.1,1.1C-4,0.9 -7.9,0.6 -7.9,-0.6C-7.9,-2.2 -4,-3.2 -1.25,-3.4C-1.2,-5.5 -0.9,-7.6 0,-7.6Z" fill="#3a2622"/>
<rect x="1573.3" y="811.0" width="10.6" height="10.6" fill="#e4c6bd" stroke="#4c3c36" stroke-width="1.2"/>
<path transform="translate(1578.6,816.3) rotate(45) scale(0.5)" d="M0,-7.6C0.9,-7.6 1.2,-5.5 1.25,-3.4C4,-3.2 7.9,-2.2 7.9,-0.6C7.9,0.6 4,0.9 1.1,1.1L0.65,5.6L3.1,6.1C3.5,6.2 3.5,7.5 3.1,7.6L-3.1,7.6C-3.5,7.5 -3.5,6.2 -3.1,6.1L-0.65,5.6L-1.1,1.1C-4,0.9 -7.9,0.6 -7.9,-0.6C-7.9,-2.2 -4,-3.2 -1.25,-3.4C-1.2,-5.5 -0.9,-7.6 0,-7.6Z" fill="#3a2622"/>
<circle cx="107.2" cy="948.5" r="9" fill="url(#hatd)" opacity="0.8"/>
<rect x="102.0" y="943.3" width="10.6" height="10.6" fill="#e4c6bd" stroke="#4c3c36" stroke-width="1.2"/>
<path transform="translate(107.3,948.6) rotate(45) scale(0.5)" d="M0,-7.6C0.9,-7.6 1.2,-5.5 1.25,-3.4C4,-3.2 7.9,-2.2 7.9,-0.6C7.9,0.6 4,0.9 1.1,1.1L0.65,5.6L3.1,6.1C3.5,6.2 3.5,7.5 3.1,7.6L-3.1,7.6C-3.5,7.5 -3.5,6.2 -3.1,6.1L-0.65,5.6L-1.1,1.1C-4,0.9 -7.9,0.6 -7.9,-0.6C-7.9,-2.2 -4,-3.2 -1.25,-3.4C-1.2,-5.5 -0.9,-7.6 0,-7.6Z" fill="#3a2622"/>
<rect x="353.2" y="979.5" width="10.6" height="10.6" fill="#e4c6bd" stroke="#4c3c36" stroke-width="1.2"/>
<path transform="translate(358.5,984.8) rotate(45) scale(0.5)" d="M0,-7.6C0.9,-7.6 1.2,-5.5 1.25,-3.4C4,-3.2 7.9,-2.2 7.9,-0.6C7.9,0.6 4,0.9 1.1,1.1L0.65,5.6L3.1,6.1C3.5,6.2 3.5,7.5 3.1,7.6L-3.1,7.6C-3.5,7.5 -3.5,6.2 -3.1,6.1L-0.65,5.6L-1.1,1.1C-4,0.9 -7.9,0.6 -7.9,-0.6C-7.9,-2.2 -4,-3.2 -1.25,-3.4C-1.2,-5.5 -0.9,-7.6 0,-7.6Z" fill="#3a2622"/>
<rect x="245.8" y="1023.8" width="10.6" height="10.6" fill="#e4c6bd" stroke="#4c3c36" stroke-width="1.2"/>
<path transform="translate(251.1,1029.1) rotate(45) scale(0.5)" d="M0,-7.6C0.9,-7.6 1.2,-5.5 1.25,-3.4C4,-3.2 7.9,-2.2 7.9,-0.6C7.9,0.6 4,0.9 1.1,1.1L0.65,5.6L3.1,6.1C3.5,6.2 3.5,7.5 3.1,7.6L-3.1,7.6C-3.5,7.5 -3.5,6.2 -3.1,6.1L-0.65,5.6L-1.1,1.1C-4,0.9 -7.9,0.6 -7.9,-0.6C-7.9,-2.2 -4,-3.2 -1.25,-3.4C-1.2,-5.5 -0.9,-7.6 0,-7.6Z" fill="#3a2622"/>
<rect x="174.2" y="1042.5" width="10.6" height="10.6" fill="#e4c6bd" stroke="#4c3c36" stroke-width="1.2"/>
<path transform="translate(179.5,1047.8) rotate(45) scale(0.5)" d="M0,-7.6C0.9,-7.6 1.2,-5.5 1.25,-3.4C4,-3.2 7.9,-2.2 7.9,-0.6C7.9,0.6 4,0.9 1.1,1.1L0.65,5.6L3.1,6.1C3.5,6.2 3.5,7.5 3.1,7.6L-3.1,7.6C-3.5,7.5 -3.5,6.2 -3.1,6.1L-0.65,5.6L-1.1,1.1C-4,0.9 -7.9,0.6 -7.9,-0.6C-7.9,-2.2 -4,-3.2 -1.25,-3.4C-1.2,-5.5 -0.9,-7.6 0,-7.6Z" fill="#3a2622"/>
<rect x="490.0" y="1058.5" width="10.6" height="10.6" fill="#e4c6bd" stroke="#4c3c36" stroke-width="1.2"/>
<path transform="translate(495.3,1063.8) rotate(45) scale(0.5)" d="M0,-7.6C0.9,-7.6 1.2,-5.5 1.25,-3.4C4,-3.2 7.9,-2.2 7.9,-0.6C7.9,0.6 4,0.9 1.1,1.1L0.65,5.6L3.1,6.1C3.5,6.2 3.5,7.5 3.1,7.6L-3.1,7.6C-3.5,7.5 -3.5,6.2 -3.1,6.1L-0.65,5.6L-1.1,1.1C-4,0.9 -7.9,0.6 -7.9,-0.6C-7.9,-2.2 -4,-3.2 -1.25,-3.4C-1.2,-5.5 -0.9,-7.6 0,-7.6Z" fill="#3a2622"/>
<rect x="1436.0" y="916.0" width="10.6" height="10.6" fill="#e4c6bd" stroke="#4c3c36" stroke-width="1.2"/>
<path transform="translate(1441.3,921.3) rotate(45) scale(0.5)" d="M0,-7.6C0.9,-7.6 1.2,-5.5 1.25,-3.4C4,-3.2 7.9,-2.2 7.9,-0.6C7.9,0.6 4,0.9 1.1,1.1L0.65,5.6L3.1,6.1C3.5,6.2 3.5,7.5 3.1,7.6L-3.1,7.6C-3.5,7.5 -3.5,6.2 -3.1,6.1L-0.65,5.6L-1.1,1.1C-4,0.9 -7.9,0.6 -7.9,-0.6C-7.9,-2.2 -4,-3.2 -1.25,-3.4C-1.2,-5.5 -0.9,-7.6 0,-7.6Z" fill="#3a2622"/>
<rect x="1378.0" y="1073.8" width="10.6" height="10.6" fill="#e4c6bd" stroke="#4c3c36" stroke-width="1.2"/>
<path transform="translate(1383.3,1079.1) rotate(45) scale(0.5)" d="M0,-7.6C0.9,-7.6 1.2,-5.5 1.25,-3.4C4,-3.2 7.9,-2.2 7.9,-0.6C7.9,0.6 4,0.9 1.1,1.1L0.65,5.6L3.1,6.1C3.5,6.2 3.5,7.5 3.1,7.6L-3.1,7.6C-3.5,7.5 -3.5,6.2 -3.1,6.1L-0.65,5.6L-1.1,1.1C-4,0.9 -7.9,0.6 -7.9,-0.6C-7.9,-2.2 -4,-3.2 -1.25,-3.4C-1.2,-5.5 -0.9,-7.6 0,-7.6Z" fill="#3a2622"/>
<rect x="1812.0" y="843.8" width="10.6" height="10.6" fill="#e4c6bd" stroke="#4c3c36" stroke-width="1.2"/>
<path transform="translate(1817.3,849.1) rotate(45) scale(0.5)" d="M0,-7.6C0.9,-7.6 1.2,-5.5 1.25,-3.4C4,-3.2 7.9,-2.2 7.9,-0.6C7.9,0.6 4,0.9 1.1,1.1L0.65,5.6L3.1,6.1C3.5,6.2 3.5,7.5 3.1,7.6L-3.1,7.6C-3.5,7.5 -3.5,6.2 -3.1,6.1L-0.65,5.6L-1.1,1.1C-4,0.9 -7.9,0.6 -7.9,-0.6C-7.9,-2.2 -4,-3.2 -1.25,-3.4C-1.2,-5.5 -0.9,-7.6 0,-7.6Z" fill="#3a2622"/>
<circle cx="1562.0" cy="890.2" r="9" fill="url(#hatd)" opacity="0.8"/>
<rect x="1556.8" y="885.0" width="10.6" height="10.6" fill="#e4c6bd" stroke="#4c3c36" stroke-width="1.2"/>
<path transform="translate(1562.1,890.3) rotate(45) scale(0.5)" d="M0,-7.6C0.9,-7.6 1.2,-5.5 1.25,-3.4C4,-3.2 7.9,-2.2 7.9,-0.6C7.9,0.6 4,0.9 1.1,1.1L0.65,5.6L3.1,6.1C3.5,6.2 3.5,7.5 3.1,7.6L-3.1,7.6C-3.5,7.5 -3.5,6.2 -3.1,6.1L-0.65,5.6L-1.1,1.1C-4,0.9 -7.9,0.6 -7.9,-0.6C-7.9,-2.2 -4,-3.2 -1.25,-3.4C-1.2,-5.5 -0.9,-7.6 0,-7.6Z" fill="#3a2622"/>
<rect x="1718.2" y="898.0" width="10.6" height="10.6" fill="#e4c6bd" stroke="#4c3c36" stroke-width="1.2"/>
<path transform="translate(1723.5,903.3) rotate(45) scale(0.5)" d="M0,-7.6C0.9,-7.6 1.2,-5.5 1.25,-3.4C4,-3.2 7.9,-2.2 7.9,-0.6C7.9,0.6 4,0.9 1.1,1.1L0.65,5.6L3.1,6.1C3.5,6.2 3.5,7.5 3.1,7.6L-3.1,7.6C-3.5,7.5 -3.5,6.2 -3.1,6.1L-0.65,5.6L-1.1,1.1C-4,0.9 -7.9,0.6 -7.9,-0.6C-7.9,-2.2 -4,-3.2 -1.25,-3.4C-1.2,-5.5 -0.9,-7.6 0,-7.6Z" fill="#3a2622"/>
<rect x="1848.8" y="913.2" width="10.6" height="10.6" fill="#e4c6bd" stroke="#4c3c36" stroke-width="1.2"/>
<path transform="translate(1854.1,918.5) rotate(45) scale(0.5)" d="M0,-7.6C0.9,-7.6 1.2,-5.5 1.25,-3.4C4,-3.2 7.9,-2.2 7.9,-0.6C7.9,0.6 4,0.9 1.1,1.1L0.65,5.6L3.1,6.1C3.5,6.2 3.5,7.5 3.1,7.6L-3.1,7.6C-3.5,7.5 -3.5,6.2 -3.1,6.1L-0.65,5.6L-1.1,1.1C-4,0.9 -7.9,0.6 -7.9,-0.6C-7.9,-2.2 -4,-3.2 -1.25,-3.4C-1.2,-5.5 -0.9,-7.6 0,-7.6Z" fill="#3a2622"/>
<rect x="1021.0" y="953.0" width="10.6" height="10.6" fill="#e4c6bd" stroke="#4c3c36" stroke-width="1.2"/>
<path transform="translate(1026.3,958.3) rotate(45) scale(0.5)" d="M0,-7.6C0.9,-7.6 1.2,-5.5 1.25,-3.4C4,-3.2 7.9,-2.2 7.9,-0.6C7.9,0.6 4,0.9 1.1,1.1L0.65,5.6L3.1,6.1C3.5,6.2 3.5,7.5 3.1,7.6L-3.1,7.6C-3.5,7.5 -3.5,6.2 -3.1,6.1L-0.65,5.6L-1.1,1.1C-4,0.9 -7.9,0.6 -7.9,-0.6C-7.9,-2.2 -4,-3.2 -1.25,-3.4C-1.2,-5.5 -0.9,-7.6 0,-7.6Z" fill="#3a2622"/>
<g fill="#4a4a46" font-size="11.3" font-weight="700">
<text x="452.5" y="143.5" textLength="35.0" lengthAdjust="spacingAndGlyphs">Auchel</text>
<text x="482.5" y="206.3" textLength="28.5" lengthAdjust="spacingAndGlyphs">Bruay</text>
<text x="1223.0" y="190.5" textLength="52.0" lengthAdjust="spacingAndGlyphs">Laneuville</text>
<text x="288.0" y="290.5" textLength="50.0" lengthAdjust="spacingAndGlyphs">Conteville</text>
<text x="317.5" y="395.3" textLength="26.3" lengthAdjust="spacingAndGlyphs">Bryas</text>
<text x="250.0" y="509.3" textLength="65.5" lengthAdjust="spacingAndGlyphs">Herlin-le-Sec</text>
<text x="515.8" y="461.3" textLength="45.0" lengthAdjust="spacingAndGlyphs">Beauvois</text>
<text x="746.3" y="462.5" textLength="56.2" lengthAdjust="spacingAndGlyphs">La Targette</text>
<text x="762.5" y="508.8" textLength="60.0" lengthAdjust="spacingAndGlyphs">Mont St.Eloi</text>
<text x="473.0" y="527.5" textLength="62.0" lengthAdjust="spacingAndGlyphs">Le Hameaux</text>
<text x="1127.5" y="422.0" textLength="55.5" lengthAdjust="spacingAndGlyphs">La Brayelle</text>
<text x="1288.0" y="503.8" textLength="42.8" lengthAdjust="spacingAndGlyphs">Guisnain</text>
<text x="1355.0" y="295.8" textLength="48.2" lengthAdjust="spacingAndGlyphs">Coutiches</text>
<text x="1413.8" y="509.0" textLength="46.7" lengthAdjust="spacingAndGlyphs">Roucourt</text>
<text x="1539.2" y="535.8" textLength="33.3" lengthAdjust="spacingAndGlyphs">Aniche</text>
<text x="475.0" y="703.8" textLength="45.8" lengthAdjust="spacingAndGlyphs">Soncamp</text>
<text x="576.2" y="573.8" textLength="50.0" lengthAdjust="spacingAndGlyphs">Filescamp</text>
<text x="473.5" y="792.5" textLength="44.0" lengthAdjust="spacingAndGlyphs">Bellevue</text>
<text x="1332.5" y="737.0" textLength="34.3" lengthAdjust="spacingAndGlyphs">Epinoy</text>
<text x="1091.5" y="812.5" textLength="52.5" lengthAdjust="spacingAndGlyphs">Bullecourt</text>
<text x="1518.8" y="567.0" textLength="67.0" lengthAdjust="spacingAndGlyphs">Emerchicourt</text>
<text x="1605.5" y="648.0" textLength="73.8" lengthAdjust="spacingAndGlyphs">Lieu St.Amand</text>
<text x="1706.3" y="682.0" textLength="93.7" lengthAdjust="spacingAndGlyphs">Avesnes-le-Sec Est</text>
<text x="1665.8" y="732.5" textLength="108.0" lengthAdjust="spacingAndGlyphs">Avesnes-le-Sec Ouest</text>
<text x="1477.0" y="731.3" textLength="34.3" lengthAdjust="spacingAndGlyphs">Eswars</text>
<text x="1737.5" y="781.3" textLength="35.5" lengthAdjust="spacingAndGlyphs">Haussy</text>
<text x="1541.8" y="805.0" textLength="36.5" lengthAdjust="spacingAndGlyphs">Cauroir</text>
<text x="48.0" y="962.5" textLength="52.0" lengthAdjust="spacingAndGlyphs">Fienvillers</text>
<text x="353.0" y="973.8" textLength="40.8" lengthAdjust="spacingAndGlyphs">Marieux</text>
<text x="261.3" y="1027.5" textLength="56.2" lengthAdjust="spacingAndGlyphs">Vert Galant</text>
<text x="142.5" y="1035.0" textLength="57.5" lengthAdjust="spacingAndGlyphs">Valheureux</text>
<text x="434.0" y="1075.0" textLength="52.5" lengthAdjust="spacingAndGlyphs">Lealvillers</text>
<text x="1388.8" y="931.3" textLength="43.0" lengthAdjust="spacingAndGlyphs">Noyelles</text>
<text x="1766.3" y="851.3" textLength="39.5" lengthAdjust="spacingAndGlyphs">Briastre</text>
<text x="1564.2" y="906.3" textLength="41.3" lengthAdjust="spacingAndGlyphs">Awoingt</text>
<text x="1730.8" y="899.0" textLength="107.5" lengthAdjust="spacingAndGlyphs">Beauvois-en-Cambrai</text>
<text x="1859.2" y="909.0" textLength="42.0" lengthAdjust="spacingAndGlyphs">Neuvilly</text>
<text x="1037.5" y="957.5" textLength="51.2" lengthAdjust="spacingAndGlyphs">Beugnatre</text>
</g>
<g fill="#3f2721" font-weight="700">
<text x="485.0" y="177.5" font-size="15.5" textLength="44.0" lengthAdjust="spacingAndGlyphs">Auchel</text>
<text x="571.0" y="227.5" font-size="15.5" textLength="38.0" lengthAdjust="spacingAndGlyphs">Bruay</text>
<text x="697.5" y="241.3" font-size="15.5" textLength="109.5" lengthAdjust="spacingAndGlyphs">Noeux-les-Mines</text>
<text x="1030.8" y="197.5" font-size="15.5" textLength="40.5" lengthAdjust="spacingAndGlyphs">Carvin</text>
<text x="1105.0" y="232.5" font-size="15.5" textLength="70.5" lengthAdjust="spacingAndGlyphs">Wahagnies</text>
<text x="1227.5" y="236.2" font-size="15.5" textLength="68.0" lengthAdjust="spacingAndGlyphs">Thumeries</text>
<text x="1487.5" y="238.8" font-size="15.5" textLength="48.0" lengthAdjust="spacingAndGlyphs">Orchies</text>
<text x="197.5" y="283.8" font-size="15.5" textLength="64.5" lengthAdjust="spacingAndGlyphs">Conteville</text>
<text x="338.0" y="364.5" font-size="15.5" textLength="35.0" lengthAdjust="spacingAndGlyphs">Bryas</text>
<text x="62.5" y="425.5" font-size="17.4" textLength="190.5" lengthAdjust="spacingAndGlyphs">SAINT-POL-SUR-TERNOISE</text>
<text x="271.0" y="462.0" font-size="15.5" textLength="85.0" lengthAdjust="spacingAndGlyphs">Herlin-le-Sec</text>
<text x="922.5" y="301.3" font-size="17.4" textLength="37.5" lengthAdjust="spacingAndGlyphs">LENS</text>
<text x="648.8" y="478.0" font-size="15.5" textLength="81.0" lengthAdjust="spacingAndGlyphs">Mont St. Eloi</text>
<text x="560.0" y="546.3" font-size="15.5" textLength="72.5" lengthAdjust="spacingAndGlyphs">Le Hameau</text>
<text x="1277.0" y="461.3" font-size="17.4" textLength="46.0" lengthAdjust="spacingAndGlyphs">DOUAI</text>
<text x="1377.5" y="540.3" font-size="15.5" textLength="91.5" lengthAdjust="spacingAndGlyphs">Auberchicourt</text>
<text x="1535.8" y="362.0" font-size="15.5" textLength="81.8" lengthAdjust="spacingAndGlyphs">Marchiennes</text>
<text x="1536.8" y="462.0" font-size="15.5" textLength="47.2" lengthAdjust="spacingAndGlyphs">Somain</text>
<text x="1700.8" y="460.0" font-size="17.4" textLength="109.8" lengthAdjust="spacingAndGlyphs">VALENCIENNES</text>
<text x="410.0" y="573.2" font-size="15.5" textLength="106.0" lengthAdjust="spacingAndGlyphs">Izel-les-Hameau</text>
<text x="332.5" y="695.5" font-size="15.5" textLength="108.5" lengthAdjust="spacingAndGlyphs">Grand Rullecourt</text>
<text x="295.5" y="718.8" font-size="15.5" textLength="100.5" lengthAdjust="spacingAndGlyphs">Sus-Saint Leger</text>
<text x="547.0" y="636.3" font-size="15.5" textLength="112.5" lengthAdjust="spacingAndGlyphs">Avesles-le-Comte</text>
<text x="755.0" y="628.8" font-size="17.4" textLength="48.0" lengthAdjust="spacingAndGlyphs">ARRAS</text>
<text x="560.0" y="792.5" font-size="15.5" textLength="72.0" lengthAdjust="spacingAndGlyphs">La Herliere</text>
<text x="1095.8" y="636.3" font-size="15.5" textLength="40.2" lengthAdjust="spacingAndGlyphs">Etaing</text>
<text x="1321.8" y="566.3" font-size="15.5" textLength="41.2" lengthAdjust="spacingAndGlyphs">Cantin</text>
<text x="1358.8" y="618.0" font-size="15.5" textLength="71.2" lengthAdjust="spacingAndGlyphs">Bugnicourt</text>
<text x="1380.0" y="812.5" font-size="17.4" textLength="68.0" lengthAdjust="spacingAndGlyphs">CAMBRAI</text>
<text x="1529.2" y="695.0" font-size="15.5" textLength="97.0" lengthAdjust="spacingAndGlyphs">Avesnes-le-Sec</text>
<text x="1581.8" y="738.8" font-size="15.5" textLength="30.2" lengthAdjust="spacingAndGlyphs">Iwuy</text>
<text x="1818.5" y="814.0" font-size="15.5" textLength="60.5" lengthAdjust="spacingAndGlyphs">Solesmes</text>
<text x="272.5" y="867.0" font-size="17.4" textLength="85.0" lengthAdjust="spacingAndGlyphs">DOULLENS</text>
<text x="441.0" y="851.3" font-size="15.5" textLength="74.0" lengthAdjust="spacingAndGlyphs">Mondicourt</text>
<text x="268.8" y="983.3" font-size="15.5" textLength="57.0" lengthAdjust="spacingAndGlyphs">Beauvalt</text>
<text x="430.5" y="985.0" font-size="15.5" textLength="52.5" lengthAdjust="spacingAndGlyphs">Marieux</text>
<text x="333.8" y="1037.0" font-size="15.5" textLength="77.2" lengthAdjust="spacingAndGlyphs">Beauquesne</text>
<text x="522.5" y="1044.5" font-size="15.5" textLength="47.0" lengthAdjust="spacingAndGlyphs">Acheux</text>
<text x="1312.5" y="971.3" font-size="15.5" textLength="59.5" lengthAdjust="spacingAndGlyphs">Marcoing</text>
<text x="1757.0" y="935.0" font-size="15.5" textLength="39.0" lengthAdjust="spacingAndGlyphs">Inchy</text>
<text x="1855.8" y="970.0" font-size="17.4" textLength="73.5" lengthAdjust="spacingAndGlyphs">LE CATEAU</text>
<text x="1559.5" y="982.3" font-size="15.5" textLength="35.5" lengthAdjust="spacingAndGlyphs">Esnes</text>
<text x="1031.0" y="902.5" font-size="15.5" textLength="103.0" lengthAdjust="spacingAndGlyphs">Vaulx-Vraucourt</text>
<text x="1022.0" y="983.8" font-size="15.5" textLength="70.5" lengthAdjust="spacingAndGlyphs">Fremicourt</text>
<text x="932.0" y="922.5" font-size="15.5" textLength="64.0" lengthAdjust="spacingAndGlyphs">Sapignies</text>
<text x="938.0" y="1020.0" font-size="17.4" textLength="68.0" lengthAdjust="spacingAndGlyphs">BAPAUME</text>
</g>
</g>
<circle cx="1122.6" cy="748" r="36.8" fill="#fbfbfb" fill-opacity="0.93" stroke="#555652" stroke-width="6.4"/>
<path transform="translate(1135.2,740.5) scale(-1.28,1.28)" d="M-10,0.2L-8.6,-1.2L-4.8,-1.3L-3.9,-4.2L3.6,-4.2L4.9,-3.1L13,-3.5L13,-2.5L5.6,-1.9L5.7,-1.2L9.2,-0.9C10.4,-0.6 10.4,0.6 9.6,1.6L7.4,4L-7.4,4L-9.6,1.6C-10.2,1 -10.3,0.6 -10,0.2Z" fill="#1b4384"/>
<path transform="translate(1109.2,757.8) scale(1.28,1.28)" d="M-10,0.2L-8.6,-1.2L-4.8,-1.3L-3.9,-4.2L3.6,-4.2L4.9,-3.1L13,-3.5L13,-2.5L5.6,-1.9L5.7,-1.2L9.2,-0.9C10.4,-0.6 10.4,0.6 9.6,1.6L7.4,4L-7.4,4L-9.6,1.6C-10.2,1 -10.3,0.6 -10,0.2Z" fill="#a30d0d"/>
<circle cx="840" cy="654" r="36.8" fill="#fbfbfb" fill-opacity="0.93" stroke="#555652" stroke-width="6.4"/>
<path transform="translate(847.0,647.5) rotate(225) scale(1.05)" d="M0,-7.6C0.9,-7.6 1.2,-5.5 1.25,-3.4C4,-3.2 7.9,-2.2 7.9,-0.6C7.9,0.6 4,0.9 1.1,1.1L0.65,5.6L3.1,6.1C3.5,6.2 3.5,7.5 3.1,7.6L-3.1,7.6C-3.5,7.5 -3.5,6.2 -3.1,6.1L-0.65,5.6L-1.1,1.1C-4,0.9 -7.9,0.6 -7.9,-0.6C-7.9,-2.2 -4,-3.2 -1.25,-3.4C-1.2,-5.5 -0.9,-7.6 0,-7.6Z" fill="#1b4384"/>
<path transform="translate(833.0,661.2) rotate(45) scale(1.05)" d="M0,-7.6C0.9,-7.6 1.2,-5.5 1.25,-3.4C4,-3.2 7.9,-2.2 7.9,-0.6C7.9,0.6 4,0.9 1.1,1.1L0.65,5.6L3.1,6.1C3.5,6.2 3.5,7.5 3.1,7.6L-3.1,7.6C-3.5,7.5 -3.5,6.2 -3.1,6.1L-0.65,5.6L-1.1,1.1C-4,0.9 -7.9,0.6 -7.9,-0.6C-7.9,-2.2 -4,-3.2 -1.25,-3.4C-1.2,-5.5 -0.9,-7.6 0,-7.6Z" fill="#a30d0d"/>
<circle cx="604.8" cy="144.3" r="36.8" fill="#fbfbfb" fill-opacity="0.93" stroke="#555652" stroke-width="6.4"/>
<path transform="translate(604.8,124.9) rotate(225) scale(1.0)" d="M0,-7.6C0.9,-7.6 1.2,-5.5 1.25,-3.4C4,-3.2 7.9,-2.2 7.9,-0.6C7.9,0.6 4,0.9 1.1,1.1L0.65,5.6L3.1,6.1C3.5,6.2 3.5,7.5 3.1,7.6L-3.1,7.6C-3.5,7.5 -3.5,6.2 -3.1,6.1L-0.65,5.6L-1.1,1.1C-4,0.9 -7.9,0.6 -7.9,-0.6C-7.9,-2.2 -4,-3.2 -1.25,-3.4C-1.2,-5.5 -0.9,-7.6 0,-7.6Z" fill="#1b4384"/>
<path transform="translate(610.8,137.3) rotate(225) scale(1.0)" d="M0,-7.6C0.9,-7.6 1.2,-5.5 1.25,-3.4C4,-3.2 7.9,-2.2 7.9,-0.6C7.9,0.6 4,0.9 1.1,1.1L0.65,5.6L3.1,6.1C3.5,6.2 3.5,7.5 3.1,7.6L-3.1,7.6C-3.5,7.5 -3.5,6.2 -3.1,6.1L-0.65,5.6L-1.1,1.1C-4,0.9 -7.9,0.6 -7.9,-0.6C-7.9,-2.2 -4,-3.2 -1.25,-3.4C-1.2,-5.5 -0.9,-7.6 0,-7.6Z" fill="#1b4384"/>
<path transform="translate(622.8,143.8) rotate(225) scale(1.0)" d="M0,-7.6C0.9,-7.6 1.2,-5.5 1.25,-3.4C4,-3.2 7.9,-2.2 7.9,-0.6C7.9,0.6 4,0.9 1.1,1.1L0.65,5.6L3.1,6.1C3.5,6.2 3.5,7.5 3.1,7.6L-3.1,7.6C-3.5,7.5 -3.5,6.2 -3.1,6.1L-0.65,5.6L-1.1,1.1C-4,0.9 -7.9,0.6 -7.9,-0.6C-7.9,-2.2 -4,-3.2 -1.25,-3.4C-1.2,-5.5 -0.9,-7.6 0,-7.6Z" fill="#1b4384"/>
<path transform="translate(585.8,144.8) rotate(45) scale(1.0)" d="M0,-7.6C0.9,-7.6 1.2,-5.5 1.25,-3.4C4,-3.2 7.9,-2.2 7.9,-0.6C7.9,0.6 4,0.9 1.1,1.1L0.65,5.6L3.1,6.1C3.5,6.2 3.5,7.5 3.1,7.6L-3.1,7.6C-3.5,7.5 -3.5,6.2 -3.1,6.1L-0.65,5.6L-1.1,1.1C-4,0.9 -7.9,0.6 -7.9,-0.6C-7.9,-2.2 -4,-3.2 -1.25,-3.4C-1.2,-5.5 -0.9,-7.6 0,-7.6Z" fill="#a30d0d"/>
<path transform="translate(597.8,150.8) rotate(45) scale(1.0)" d="M0,-7.6C0.9,-7.6 1.2,-5.5 1.25,-3.4C4,-3.2 7.9,-2.2 7.9,-0.6C7.9,0.6 4,0.9 1.1,1.1L0.65,5.6L3.1,6.1C3.5,6.2 3.5,7.5 3.1,7.6L-3.1,7.6C-3.5,7.5 -3.5,6.2 -3.1,6.1L-0.65,5.6L-1.1,1.1C-4,0.9 -7.9,0.6 -7.9,-0.6C-7.9,-2.2 -4,-3.2 -1.25,-3.4C-1.2,-5.5 -0.9,-7.6 0,-7.6Z" fill="#a30d0d"/>
<path transform="translate(603.8,163.3) rotate(45) scale(1.0)" d="M0,-7.6C0.9,-7.6 1.2,-5.5 1.25,-3.4C4,-3.2 7.9,-2.2 7.9,-0.6C7.9,0.6 4,0.9 1.1,1.1L0.65,5.6L3.1,6.1C3.5,6.2 3.5,7.5 3.1,7.6L-3.1,7.6C-3.5,7.5 -3.5,6.2 -3.1,6.1L-0.65,5.6L-1.1,1.1C-4,0.9 -7.9,0.6 -7.9,-0.6C-7.9,-2.2 -4,-3.2 -1.25,-3.4C-1.2,-5.5 -0.9,-7.6 0,-7.6Z" fill="#a30d0d"/>
<path d="M655.2,528.5V515.7H668.0M737.4000000000001,515.7H750.2V528.5M750.2,597.4000000000001V610.2H737.4000000000001M668.0,610.2H655.2V597.4000000000001" fill="none" stroke="#3b3b3b" stroke-width="3.6"/>
<circle cx="740.5" cy="481" r="36.8" fill="#fbfbfb" fill-opacity="0.9" stroke="#555652" stroke-width="6.4"/>
<path transform="translate(739.2,482.5) scale(1.5,1.5)" d="M-10,0.2L-8.6,-1.2L-4.8,-1.3L-3.9,-4.2L3.6,-4.2L4.9,-3.1L13,-3.5L13,-2.5L5.6,-1.9L5.7,-1.2L9.2,-0.9C10.4,-0.6 10.4,0.6 9.6,1.6L7.4,4L-7.4,4L-9.6,1.6C-10.2,1 -10.3,0.6 -10,0.2Z" fill="#111"/>
<circle cx="702.5" cy="563" r="36.8" fill="#fbfbfb" fill-opacity="0.93" stroke="#555652" stroke-width="6.4"/>
<path transform="translate(702.5,563.0) rotate(45) scale(1.0)" d="M0,-7.6C0.9,-7.6 1.2,-5.5 1.25,-3.4C4,-3.2 7.9,-2.2 7.9,-0.6C7.9,0.6 4,0.9 1.1,1.1L0.65,5.6L3.1,6.1C3.5,6.2 3.5,7.5 3.1,7.6L-3.1,7.6C-3.5,7.5 -3.5,6.2 -3.1,6.1L-0.65,5.6L-1.1,1.1C-4,0.9 -7.9,0.6 -7.9,-0.6C-7.9,-2.2 -4,-3.2 -1.25,-3.4C-1.2,-5.5 -0.9,-7.6 0,-7.6Z" fill="#111"/>
<circle cx="1160" cy="467.5" r="36.8" fill="#fbfbfb" fill-opacity="0.93" stroke="#555652" stroke-width="6.4"/>
<path transform="translate(1140.1,459.2) scale(0.95,0.95)" d="M-10,0.2L-8.6,-1.2L-4.8,-1.3L-3.9,-4.2L3.6,-4.2L4.9,-3.1L13,-3.5L13,-2.5L5.6,-1.9L5.7,-1.2L9.2,-0.9C10.4,-0.6 10.4,0.6 9.6,1.6L7.4,4L-7.4,4L-9.6,1.6C-10.2,1 -10.3,0.6 -10,0.2Z" fill="#a30d0d"/>
<path transform="translate(1143.8,469.9) scale(0.95,0.95)" d="M-10,0.2L-8.6,-1.2L-4.8,-1.3L-3.9,-4.2L3.6,-4.2L4.9,-3.1L13,-3.5L13,-2.5L5.6,-1.9L5.7,-1.2L9.2,-0.9C10.4,-0.6 10.4,0.6 9.6,1.6L7.4,4L-7.4,4L-9.6,1.6C-10.2,1 -10.3,0.6 -10,0.2Z" fill="#a30d0d"/>
<path transform="translate(1142.0,480.5) scale(0.95,0.95)" d="M-10,0.2L-8.6,-1.2L-4.8,-1.3L-3.9,-4.2L3.6,-4.2L4.9,-3.1L13,-3.5L13,-2.5L5.6,-1.9L5.7,-1.2L9.2,-0.9C10.4,-0.6 10.4,0.6 9.6,1.6L7.4,4L-7.4,4L-9.6,1.6C-10.2,1 -10.3,0.6 -10,0.2Z" fill="#a30d0d"/>
<path transform="translate(1178.5,454.6) scale(-0.95,0.95)" d="M-10,0.2L-8.6,-1.2L-4.8,-1.3L-3.9,-4.2L3.6,-4.2L4.9,-3.1L13,-3.5L13,-2.5L5.6,-1.9L5.7,-1.2L9.2,-0.9C10.4,-0.6 10.4,0.6 9.6,1.6L7.4,4L-7.4,4L-9.6,1.6C-10.2,1 -10.3,0.6 -10,0.2Z" fill="#1b4384"/>
<path transform="translate(1174.4,466.1) scale(-0.95,0.95)" d="M-10,0.2L-8.6,-1.2L-4.8,-1.3L-3.9,-4.2L3.6,-4.2L4.9,-3.1L13,-3.5L13,-2.5L5.6,-1.9L5.7,-1.2L9.2,-0.9C10.4,-0.6 10.4,0.6 9.6,1.6L7.4,4L-7.4,4L-9.6,1.6C-10.2,1 -10.3,0.6 -10,0.2Z" fill="#1b4384"/>
<path transform="translate(1180.4,476.3) scale(-0.95,0.95)" d="M-10,0.2L-8.6,-1.2L-4.8,-1.3L-3.9,-4.2L3.6,-4.2L4.9,-3.1L13,-3.5L13,-2.5L5.6,-1.9L5.7,-1.2L9.2,-0.9C10.4,-0.6 10.4,0.6 9.6,1.6L7.4,4L-7.4,4L-9.6,1.6C-10.2,1 -10.3,0.6 -10,0.2Z" fill="#1b4384"/>
<circle cx="1314.5" cy="410" r="36.8" fill="#fbfbfb" fill-opacity="0.93" stroke="#555652" stroke-width="6.4"/>
<path transform="translate(1321.5,403.5) rotate(225) scale(1.05)" d="M0,-7.6C0.9,-7.6 1.2,-5.5 1.25,-3.4C4,-3.2 7.9,-2.2 7.9,-0.6C7.9,0.6 4,0.9 1.1,1.1L0.65,5.6L3.1,6.1C3.5,6.2 3.5,7.5 3.1,7.6L-3.1,7.6C-3.5,7.5 -3.5,6.2 -3.1,6.1L-0.65,5.6L-1.1,1.1C-4,0.9 -7.9,0.6 -7.9,-0.6C-7.9,-2.2 -4,-3.2 -1.25,-3.4C-1.2,-5.5 -0.9,-7.6 0,-7.6Z" fill="#1b4384"/>
<path transform="translate(1307.5,417.2) rotate(45) scale(1.05)" d="M0,-7.6C0.9,-7.6 1.2,-5.5 1.25,-3.4C4,-3.2 7.9,-2.2 7.9,-0.6C7.9,0.6 4,0.9 1.1,1.1L0.65,5.6L3.1,6.1C3.5,6.2 3.5,7.5 3.1,7.6L-3.1,7.6C-3.5,7.5 -3.5,6.2 -3.1,6.1L-0.65,5.6L-1.1,1.1C-4,0.9 -7.9,0.6 -7.9,-0.6C-7.9,-2.2 -4,-3.2 -1.25,-3.4C-1.2,-5.5 -0.9,-7.6 0,-7.6Z" fill="#a30d0d"/>
<circle cx="1458.5" cy="808" r="36.8" fill="#fbfbfb" fill-opacity="0.93" stroke="#555652" stroke-width="6.4"/>
<path transform="translate(1458.5,788.6) rotate(225) scale(1.0)" d="M0,-7.6C0.9,-7.6 1.2,-5.5 1.25,-3.4C4,-3.2 7.9,-2.2 7.9,-0.6C7.9,0.6 4,0.9 1.1,1.1L0.65,5.6L3.1,6.1C3.5,6.2 3.5,7.5 3.1,7.6L-3.1,7.6C-3.5,7.5 -3.5,6.2 -3.1,6.1L-0.65,5.6L-1.1,1.1C-4,0.9 -7.9,0.6 -7.9,-0.6C-7.9,-2.2 -4,-3.2 -1.25,-3.4C-1.2,-5.5 -0.9,-7.6 0,-7.6Z" fill="#1b4384"/>
<path transform="translate(1464.5,801.0) rotate(225) scale(1.0)" d="M0,-7.6C0.9,-7.6 1.2,-5.5 1.25,-3.4C4,-3.2 7.9,-2.2 7.9,-0.6C7.9,0.6 4,0.9 1.1,1.1L0.65,5.6L3.1,6.1C3.5,6.2 3.5,7.5 3.1,7.6L-3.1,7.6C-3.5,7.5 -3.5,6.2 -3.1,6.1L-0.65,5.6L-1.1,1.1C-4,0.9 -7.9,0.6 -7.9,-0.6C-7.9,-2.2 -4,-3.2 -1.25,-3.4C-1.2,-5.5 -0.9,-7.6 0,-7.6Z" fill="#1b4384"/>
<path transform="translate(1476.5,807.5) rotate(225) scale(1.0)" d="M0,-7.6C0.9,-7.6 1.2,-5.5 1.25,-3.4C4,-3.2 7.9,-2.2 7.9,-0.6C7.9,0.6 4,0.9 1.1,1.1L0.65,5.6L3.1,6.1C3.5,6.2 3.5,7.5 3.1,7.6L-3.1,7.6C-3.5,7.5 -3.5,6.2 -3.1,6.1L-0.65,5.6L-1.1,1.1C-4,0.9 -7.9,0.6 -7.9,-0.6C-7.9,-2.2 -4,-3.2 -1.25,-3.4C-1.2,-5.5 -0.9,-7.6 0,-7.6Z" fill="#1b4384"/>
<path transform="translate(1439.5,808.5) rotate(45) scale(1.0)" d="M0,-7.6C0.9,-7.6 1.2,-5.5 1.25,-3.4C4,-3.2 7.9,-2.2 7.9,-0.6C7.9,0.6 4,0.9 1.1,1.1L0.65,5.6L3.1,6.1C3.5,6.2 3.5,7.5 3.1,7.6L-3.1,7.6C-3.5,7.5 -3.5,6.2 -3.1,6.1L-0.65,5.6L-1.1,1.1C-4,0.9 -7.9,0.6 -7.9,-0.6C-7.9,-2.2 -4,-3.2 -1.25,-3.4C-1.2,-5.5 -0.9,-7.6 0,-7.6Z" fill="#a30d0d"/>
<path transform="translate(1451.5,814.5) rotate(45) scale(1.0)" d="M0,-7.6C0.9,-7.6 1.2,-5.5 1.25,-3.4C4,-3.2 7.9,-2.2 7.9,-0.6C7.9,0.6 4,0.9 1.1,1.1L0.65,5.6L3.1,6.1C3.5,6.2 3.5,7.5 3.1,7.6L-3.1,7.6C-3.5,7.5 -3.5,6.2 -3.1,6.1L-0.65,5.6L-1.1,1.1C-4,0.9 -7.9,0.6 -7.9,-0.6C-7.9,-2.2 -4,-3.2 -1.25,-3.4C-1.2,-5.5 -0.9,-7.6 0,-7.6Z" fill="#a30d0d"/>
<path transform="translate(1457.5,827.0) rotate(45) scale(1.0)" d="M0,-7.6C0.9,-7.6 1.2,-5.5 1.25,-3.4C4,-3.2 7.9,-2.2 7.9,-0.6C7.9,0.6 4,0.9 1.1,1.1L0.65,5.6L3.1,6.1C3.5,6.2 3.5,7.5 3.1,7.6L-3.1,7.6C-3.5,7.5 -3.5,6.2 -3.1,6.1L-0.65,5.6L-1.1,1.1C-4,0.9 -7.9,0.6 -7.9,-0.6C-7.9,-2.2 -4,-3.2 -1.25,-3.4C-1.2,-5.5 -0.9,-7.6 0,-7.6Z" fill="#a30d0d"/>
<circle cx="352" cy="863.5" r="36.8" fill="#fbfbfb" fill-opacity="0.93" stroke="#555652" stroke-width="6.4"/>
<path transform="translate(352.0,844.1) rotate(225) scale(1.0)" d="M0,-7.6C0.9,-7.6 1.2,-5.5 1.25,-3.4C4,-3.2 7.9,-2.2 7.9,-0.6C7.9,0.6 4,0.9 1.1,1.1L0.65,5.6L3.1,6.1C3.5,6.2 3.5,7.5 3.1,7.6L-3.1,7.6C-3.5,7.5 -3.5,6.2 -3.1,6.1L-0.65,5.6L-1.1,1.1C-4,0.9 -7.9,0.6 -7.9,-0.6C-7.9,-2.2 -4,-3.2 -1.25,-3.4C-1.2,-5.5 -0.9,-7.6 0,-7.6Z" fill="#1b4384"/>
<path transform="translate(358.0,856.5) rotate(225) scale(1.0)" d="M0,-7.6C0.9,-7.6 1.2,-5.5 1.25,-3.4C4,-3.2 7.9,-2.2 7.9,-0.6C7.9,0.6 4,0.9 1.1,1.1L0.65,5.6L3.1,6.1C3.5,6.2 3.5,7.5 3.1,7.6L-3.1,7.6C-3.5,7.5 -3.5,6.2 -3.1,6.1L-0.65,5.6L-1.1,1.1C-4,0.9 -7.9,0.6 -7.9,-0.6C-7.9,-2.2 -4,-3.2 -1.25,-3.4C-1.2,-5.5 -0.9,-7.6 0,-7.6Z" fill="#1b4384"/>
<path transform="translate(370.0,863.0) rotate(225) scale(1.0)" d="M0,-7.6C0.9,-7.6 1.2,-5.5 1.25,-3.4C4,-3.2 7.9,-2.2 7.9,-0.6C7.9,0.6 4,0.9 1.1,1.1L0.65,5.6L3.1,6.1C3.5,6.2 3.5,7.5 3.1,7.6L-3.1,7.6C-3.5,7.5 -3.5,6.2 -3.1,6.1L-0.65,5.6L-1.1,1.1C-4,0.9 -7.9,0.6 -7.9,-0.6C-7.9,-2.2 -4,-3.2 -1.25,-3.4C-1.2,-5.5 -0.9,-7.6 0,-7.6Z" fill="#1b4384"/>
<path transform="translate(333.0,864.0) rotate(45) scale(1.0)" d="M0,-7.6C0.9,-7.6 1.2,-5.5 1.25,-3.4C4,-3.2 7.9,-2.2 7.9,-0.6C7.9,0.6 4,0.9 1.1,1.1L0.65,5.6L3.1,6.1C3.5,6.2 3.5,7.5 3.1,7.6L-3.1,7.6C-3.5,7.5 -3.5,6.2 -3.1,6.1L-0.65,5.6L-1.1,1.1C-4,0.9 -7.9,0.6 -7.9,-0.6C-7.9,-2.2 -4,-3.2 -1.25,-3.4C-1.2,-5.5 -0.9,-7.6 0,-7.6Z" fill="#a30d0d"/>
<path transform="translate(345.0,870.0) rotate(45) scale(1.0)" d="M0,-7.6C0.9,-7.6 1.2,-5.5 1.25,-3.4C4,-3.2 7.9,-2.2 7.9,-0.6C7.9,0.6 4,0.9 1.1,1.1L0.65,5.6L3.1,6.1C3.5,6.2 3.5,7.5 3.1,7.6L-3.1,7.6C-3.5,7.5 -3.5,6.2 -3.1,6.1L-0.65,5.6L-1.1,1.1C-4,0.9 -7.9,0.6 -7.9,-0.6C-7.9,-2.2 -4,-3.2 -1.25,-3.4C-1.2,-5.5 -0.9,-7.6 0,-7.6Z" fill="#a30d0d"/>
<path transform="translate(351.0,882.5) rotate(45) scale(1.0)" d="M0,-7.6C0.9,-7.6 1.2,-5.5 1.25,-3.4C4,-3.2 7.9,-2.2 7.9,-0.6C7.9,0.6 4,0.9 1.1,1.1L0.65,5.6L3.1,6.1C3.5,6.2 3.5,7.5 3.1,7.6L-3.1,7.6C-3.5,7.5 -3.5,6.2 -3.1,6.1L-0.65,5.6L-1.1,1.1C-4,0.9 -7.9,0.6 -7.9,-0.6C-7.9,-2.2 -4,-3.2 -1.25,-3.4C-1.2,-5.5 -0.9,-7.6 0,-7.6Z" fill="#a30d0d"/>
<rect x="0" y="158" width="444" height="625" fill="#1b1b1b" fill-opacity="0.9"/>
<use href="#fr" fill="#000" opacity="0.1" clip-path="url(#lp)"/>
<text x="147.0" y="207.5" font-size="33" fill="#e9e9e9" textLength="150.0" lengthAdjust="spacingAndGlyphs" stroke="#e9e9e9" stroke-width="0.8">Your plane</text>
<rect x="20" y="236" width="358.5" height="37" fill="#5a5a5a" fill-opacity="0.36"/>
<text x="31.0" y="262.5" font-size="18.5" fill="#d2d2d2" textLength="121.0" lengthAdjust="spacingAndGlyphs">Nieuport 28.C1</text>
<path d="M346 248.5l5.5 6-5.5 6M352 248.5l5.5 6-5.5 6" fill="none" stroke="#f0f0f0" stroke-width="1.7"/>
<g transform="translate(401.5,254.5) rotate(45)" fill="#cfcfcf"><rect x="-1.6" y="-2" width="3.2" height="11" rx="1.4"/><path d="M-4,-6.5a4,4 0 0 0 2.4,5.6h3.2a4,4 0 0 0 2.4,-5.6l-2,2.6h-4z"/></g>
<text x="20.0" y="749.0" font-size="18.5" fill="#e6e6e6" textLength="42.0" lengthAdjust="spacingAndGlyphs">Start</text>
<rect x="221.5" y="723" width="201.5" height="38" fill="#5a5a5a" fill-opacity="0.42"/>
<text x="232.0" y="749.0" font-size="18.5" fill="#cdcdcd" textLength="65.0" lengthAdjust="spacingAndGlyphs">Runway</text>
<path d="M394.5 738.5l6 6 6-6" fill="none" stroke="#f0f0f0" stroke-width="1.8"/>
<rect x="630" y="662.5" width="678" height="324.5" fill="#1b1b1b" fill-opacity="0.9"/>
<g clip-path="url(#wp)"><use href="#hz" fill="#000" opacity="0.04"/><use href="#hz" fill="url(#hat2)" opacity="0.16"/><use href="#fr" fill="#000" opacity="0.09"/></g>
<text x="651.0" y="712.7" font-size="18.5" fill="#e6e6e6" textLength="41.0" lengthAdjust="spacingAndGlyphs">Time</text>
<path d="M851.5 698.9l-6 5.8 6 5.8" fill="none" stroke="#8d8d8d" stroke-width="1.4"/>
<rect x="863" y="693.0" width="174" height="23" fill="#000"/>
<rect x="863" y="693.0" width="86" height="23" fill="#5f5f5f"/>
<rect x="949" y="693.0" width="5" height="23" fill="#fff"/>
<path d="M1048 698.9l6 5.8-6 5.8" fill="none" stroke="#8d8d8d" stroke-width="1.4"/>
<text x="1076.0" y="712.7" font-size="18.5" fill="#e6e6e6" textLength="44.5" lengthAdjust="spacingAndGlyphs">12:00</text>
<text x="651.0" y="753.0" font-size="18.5" fill="#e6e6e6" textLength="41.5" lengthAdjust="spacingAndGlyphs">Wind</text>
<path d="M851.5 739.2l-6 5.8 6 5.8" fill="none" stroke="#8d8d8d" stroke-width="1.4"/>
<rect x="863" y="733.3" width="174" height="23" fill="#000"/>
<rect x="863" y="733.3" width="41.5" height="23" fill="#5f5f5f"/>
<rect x="904.5" y="733.3" width="5" height="23" fill="#fff"/>
<path d="M1048 739.2l6 5.8-6 5.8" fill="none" stroke="#8d8d8d" stroke-width="1.4"/>
<text x="1076.0" y="753.0" font-size="18.5" fill="#e6e6e6" textLength="45.5" lengthAdjust="spacingAndGlyphs">3 m/s</text>
<text x="651.0" y="793.3" font-size="18.5" fill="#e6e6e6" textLength="91.0" lengthAdjust="spacingAndGlyphs">Turbulence</text>
<path d="M851.5 779.5l-6 5.8 6 5.8" fill="none" stroke="#8d8d8d" stroke-width="1.4"/>
<rect x="863" y="773.6" width="174" height="23" fill="#000"/>
<rect x="863" y="773.6" width="5" height="23" fill="#fff"/>
<path d="M1048 779.5l6 5.8-6 5.8" fill="none" stroke="#8d8d8d" stroke-width="1.4"/>
<text x="1076.0" y="793.3" font-size="18.5" fill="#e6e6e6" textLength="42.5" lengthAdjust="spacingAndGlyphs">None</text>
<text x="651.0" y="833.5" font-size="18.5" fill="#e6e6e6" textLength="71.0" lengthAdjust="spacingAndGlyphs">Weather</text>
<path d="M851.5 819.7l-6 5.8 6 5.8" fill="none" stroke="#8d8d8d" stroke-width="1.4"/>
<rect x="863" y="813.8" width="174" height="23" fill="#000"/>
<rect x="863" y="813.8" width="5" height="23" fill="#fff"/>
<path d="M1048 819.7l6 5.8-6 5.8" fill="none" stroke="#8d8d8d" stroke-width="1.4"/>
<text x="1076.0" y="833.5" font-size="18.5" fill="#e6e6e6" textLength="42.5" lengthAdjust="spacingAndGlyphs">Clear</text>
<text x="651.0" y="873.8" font-size="18.5" fill="#e6e6e6" textLength="100.0" lengthAdjust="spacingAndGlyphs">Clouds level</text>
<path d="M851.5 860.0l-6 5.8 6 5.8" fill="none" stroke="#8d8d8d" stroke-width="1.4"/>
<rect x="863" y="854.1" width="174" height="23" fill="#000"/>
<rect x="863" y="854.1" width="135" height="23" fill="#5f5f5f"/>
<rect x="998" y="854.1" width="5" height="23" fill="#fff"/>
<path d="M1048 860.0l6 5.8-6 5.8" fill="none" stroke="#8d8d8d" stroke-width="1.4"/>
<text x="1076.0" y="873.8" font-size="18.5" fill="#e6e6e6" textLength="60.5" lengthAdjust="spacingAndGlyphs">2500 m</text>
<text x="651.0" y="914.1" font-size="18.5" fill="#e6e6e6" textLength="106.0" lengthAdjust="spacingAndGlyphs">Haze density</text>
<path d="M851.5 900.3l-6 5.8 6 5.8" fill="none" stroke="#8d8d8d" stroke-width="1.4"/>
<rect x="863" y="894.4" width="174" height="23" fill="#000"/>
<rect x="863" y="894.4" width="5" height="23" fill="#fff"/>
<path d="M1048 900.3l6 5.8-6 5.8" fill="none" stroke="#8d8d8d" stroke-width="1.4"/>
<text x="1076.0" y="914.1" font-size="18.5" fill="#e6e6e6" textLength="9.5" lengthAdjust="spacingAndGlyphs">0</text>
<text x="651.0" y="954.4" font-size="18.5" fill="#6b6b6b" textLength="130.0" lengthAdjust="spacingAndGlyphs">Dawn/Dusk Fog</text>
<path d="M851.5 940.6l-6 5.8 6 5.8" fill="none" stroke="#8d8d8d" stroke-width="1.4"/>
<rect x="863" y="934.7" width="174" height="23" fill="#000"/>
<rect x="863" y="934.7" width="5" height="23" fill="#fff"/>
<path d="M1048 940.6l6 5.8-6 5.8" fill="none" stroke="#8d8d8d" stroke-width="1.4"/>
<text x="1076.0" y="954.4" font-size="18.5" fill="#5f5f5f" textLength="24.5" lengthAdjust="spacingAndGlyphs">Off</text>
<rect x="1236" y="684.5" width="51" height="50.5" fill="#565656"/>
<path d="M1253.5 701.5l16 16M1269.5 701.5l-16 16" stroke="#f2f2f2" stroke-width="3.6" fill="none"/>
<rect x="630" y="989" width="194" height="50" fill="#4f4f4f"/>
<text x="651.0" y="1021.5" font-size="18.5" fill="#e2e2e2" textLength="151.0" lengthAdjust="spacingAndGlyphs" stroke="#e2e2e2" stroke-width="0.5">Weather and time</text>
<rect x="826.5" y="989" width="168" height="50" fill="#4f4f4f"/>
<text x="847.0" y="1021.5" font-size="18.5" fill="#e2e2e2" textLength="126.0" lengthAdjust="spacingAndGlyphs" stroke="#e2e2e2" stroke-width="0.5">Ground targets</text>
<rect x="0" y="977" width="101.5" height="73.5" fill="#4d4d4d"/>
<text x="27.0" y="1024.0" font-size="27.5" fill="#ededed" textLength="48.0" lengthAdjust="spacingAndGlyphs" stroke="#ededed" stroke-width="0.9">Exit</text>
<rect x="1523.5" y="977" width="258.5" height="73.5" fill="#4d4d4d"/>
<text x="1550.0" y="1024.0" font-size="27.5" fill="#ededed" textLength="205.0" lengthAdjust="spacingAndGlyphs" stroke="#ededed" stroke-width="0.9">Realism: custom</text>
<rect x="1784" y="977" width="136" height="73.5" fill="#05820b"/>
<text x="1811.6" y="1024.0" font-size="27.5" fill="#dff3df" textLength="82.8" lengthAdjust="spacingAndGlyphs" stroke="#dff3df" stroke-width="1.0">START</text>
<rect x="0" y="0" width="1920" height="136.3" fill="#19191b"/>
<path d="M52 20H166L177 35 166 50H52Z" fill="#696d67"/>
<path d="M61.5 20V50M165.5 20V50" stroke="#5e625c" stroke-width="1" fill="none"/>
<text x="68.5" y="43.0" font-size="17.5" fill="#2e3030" font-weight="700" textLength="89.0" lengthAdjust="spacingAndGlyphs">Main Menu</text>
<text x="51.0" y="102.5" font-size="41.5" fill="#e3e3e3" font-weight="700" textLength="252.0" lengthAdjust="spacingAndGlyphs">Quick mission</text>
<text x="1370.0" y="103.8" font-size="18.5" fill="#e2e2e2" textLength="39.5" lengthAdjust="spacingAndGlyphs">Map:</text>
<rect x="1528.3" y="76.3" width="371.2" height="38.2" fill="#333435"/>
<text x="1539.5" y="103.3" font-size="18.5" fill="#c9c9c9" textLength="151.0" lengthAdjust="spacingAndGlyphs">Arras, Spring 1918</text>
<path d="M1870 91.8l6.9 6.8 6.9-6.8" fill="none" stroke="#f0f0f0" stroke-width="1.8"/>
<text x="1891.0" y="13.5" font-size="17" fill="#27c52b" textLength="28.0" lengthAdjust="spacingAndGlyphs" font-family='"Liberation Mono", monospace'>143</text>
<text x="1900.5" y="30.0" font-size="17" fill="#27c52b" textLength="18.5" lengthAdjust="spacingAndGlyphs" font-family='"Liberation Mono", monospace'>45</text>
<path d="M1196.3 318.2V345.6L1202.2 340 1205.8 348.6 1211.5 345.6 1208.2 337.8 1215.2 336.8z" fill="#e9e9ec" stroke="#3d4141" stroke-width="1.5" stroke-linejoin="miter"/>
</svg>
</body></html>
